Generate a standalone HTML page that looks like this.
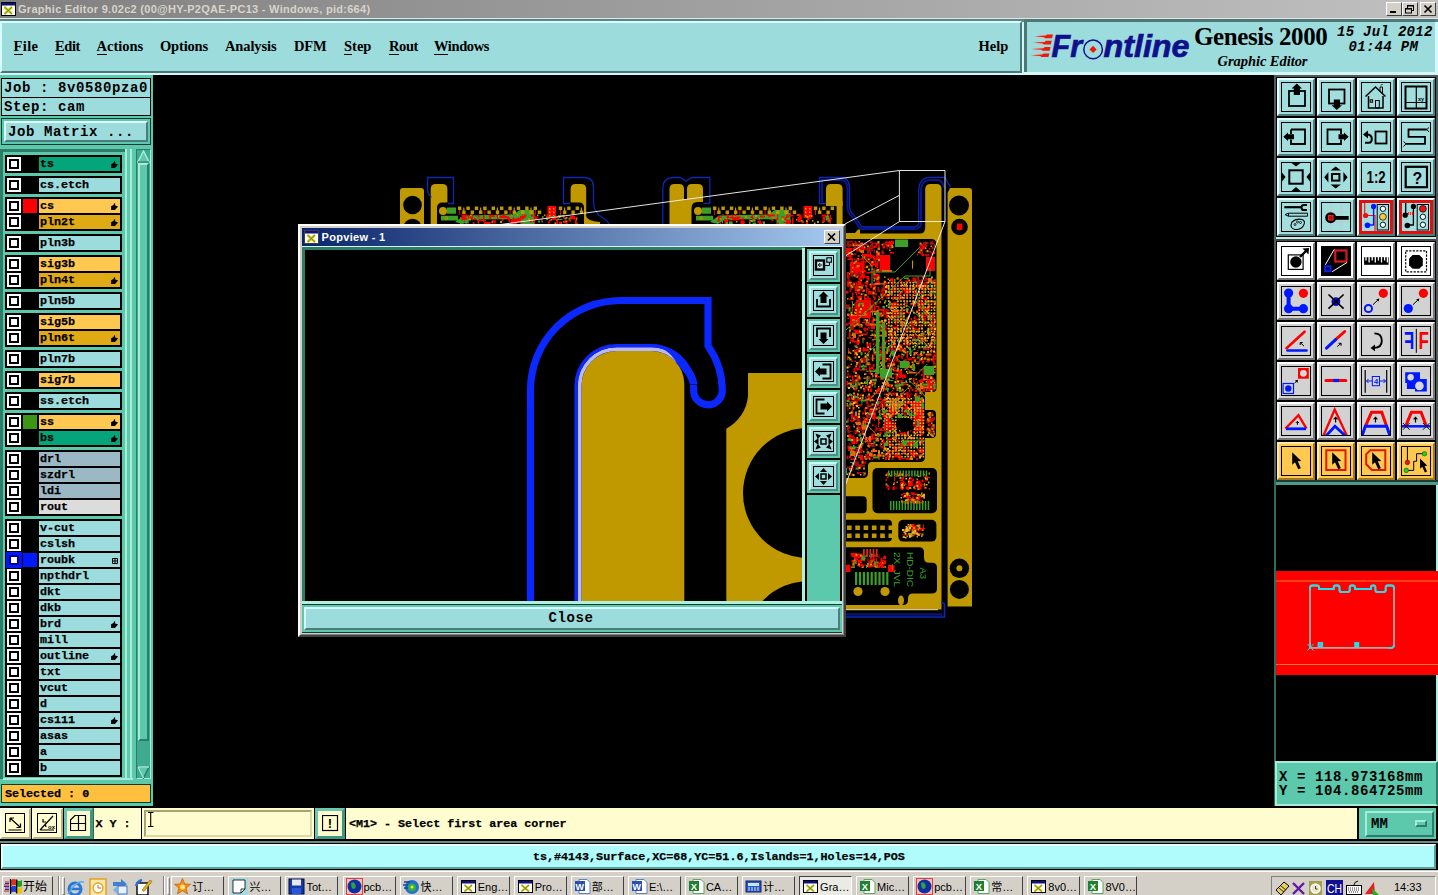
<!DOCTYPE html>
<html lang="en"><head><meta charset="utf-8"><title>Graphic Editor 9.02c2</title>
<style>
*{box-sizing:border-box}
html,body{margin:0;padding:0}
body{width:1438px;height:895px;position:relative;overflow:hidden;background:#000;font-family:"Liberation Mono",monospace;color:#000}
.a{position:absolute}
.m7{-webkit-text-stroke:.25px #000;font:bold 11.7px "Liberation Mono",monospace;white-space:pre;line-height:14px}
.m9{font:bold 14px "Liberation Mono",monospace;letter-spacing:.6px;white-space:pre}
.menu span{position:absolute;top:38px;font:bold 14.5px "Liberation Serif",serif;line-height:17px;white-space:pre}
.menu u{text-decoration:none;border-bottom:1px solid #000;}
.grp{position:absolute;left:5px;width:117px;background:#000}
.row{position:absolute;left:0;width:117px;height:16px}
.cb{position:absolute;left:2px;top:2px;width:14px;height:14px;background:#fff}
.cb i{position:absolute;left:2px;top:2px;width:10px;height:10px;border:2px solid #000;background:#fff}
.sw{position:absolute;left:18px;top:2px;width:14px;height:14px}
.lb{-webkit-text-stroke:.25px #000;position:absolute;left:34px;top:2px;width:81px;height:14px;padding-left:1px;font:bold 11.7px "Liberation Mono",monospace;line-height:15.5px;white-space:pre;overflow:hidden}
.hd{position:absolute;right:1px;top:4px;width:8px;height:8px}
.tb{position:absolute;width:38px;height:38px;border:2px solid;}
.tb b{position:absolute;left:2px;top:2px;width:30px;height:30px;border:1px solid #000;display:block}
.tb svg{position:absolute;left:3px;top:3px;width:28px;height:28px}
.tc{background:#a2dede;border-color:#e4ffff #4e7c7c #4e7c7c #e4ffff}
.tg{background:#d2d2d2;border-color:#fff #777 #777 #fff}
.tw{background:#fff;border-color:#fff #777 #777 #fff}
.to{background:#ffc850;border-color:#ffe8a8 #a07820 #a07820 #ffe8a8}
.tk{position:absolute;top:876px;height:21px;font:11px "Liberation Sans","Noto Sans CJK SC",sans-serif;line-height:21px;white-space:pre;color:#000;border:1px solid;border-color:#fff #404040 #404040 #fff;background:#d4d0c8;overflow:hidden}
</style></head>
<body>
<div class="a" style="left:0;top:0;width:1438px;height:18px;background:linear-gradient(90deg,#808080,#c0c0c0)"></div>
<svg class="a" style="left:1px;top:2px" width="15" height="14" viewBox="0 0 15 14"><rect x="0" y="0" width="15" height="14" fill="#fff"/><rect x="0.5" y="0.5" width="14" height="13" fill="#fff" stroke="#000"/><rect x="1" y="1" width="13" height="2.5" fill="#101080"/><path d="M3.5 5 L11 12 M11 5 L3.5 12" stroke="#c8c820" stroke-width="2.4"/><path d="M3.5 5 L11 12 M11 5 L3.5 12" stroke="#707000" stroke-width=".7"/></svg>
<div class="a" style="left:18px;top:2px;font:bold 11px 'Liberation Sans', 'Noto Sans CJK SC', sans-serif;line-height:14px;color:#d8d4cc;white-space:pre;letter-spacing:.28px">Graphic Editor 9.02c2 (00@HY-P2QAE-PC13 - Windows, pid:664)</div>
<div class="a" style="left:1386px;top:2px;width:16px;height:14px;background:#d4d0c8;border:1px solid;border-color:#fff #404040 #404040 #fff"></div>
<div class="a" style="left:1402px;top:2px;width:16px;height:14px;background:#d4d0c8;border:1px solid;border-color:#fff #404040 #404040 #fff"></div>
<div class="a" style="left:1420px;top:2px;width:16px;height:14px;background:#d4d0c8;border:1px solid;border-color:#fff #404040 #404040 #fff"></div>
<svg class="a" style="left:1386px;top:2px" width="50" height="14" viewBox="0 0 50 14"><rect x="4" y="9" width="6" height="2" fill="#000"/><rect x="21.5" y="3.5" width="6" height="5" fill="none" stroke="#000"/><rect x="21" y="3" width="7" height="1.5" fill="#000"/><rect x="19.5" y="6.5" width="6" height="4.500" fill="#d4d0c8" stroke="#000"/><rect x="19" y="6" width="7" height="1.5" fill="#000"/><path d="M38.500 3.500 L45.500 10.500 M45.500 3.500 L38.500 10.500" stroke="#000" stroke-width="1.700"/></svg>
<div class="a" style="left:0;top:18px;width:1438px;height:4px;background:#a8a8a8"></div>
<div class="a" style="left:0;top:18px;width:1438px;height:1px;background:#787878"></div>
<div class="a" style="left:0;top:18px;width:1438px;height:1px;background:#e4e4e4"></div>
<div class="a" style="left:0;top:19px;width:1438px;height:56px;background:#d4f8f8"></div>
<div class="a" style="left:0;top:19px;width:1438px;height:3px;background:#5a8888"></div>
<div class="a" style="left:0;top:21px;width:1022px;height:52px;background:#9cdcdc;border:2px solid;border-color:#d8ffff #4c7878 #4c7878 #d8ffff"></div>
<div class="a" style="left:1024px;top:19px;width:411px;height:53px;background:#9cdcdc;border-left:3px solid #4c7878;border-top:3px solid #4c7878"></div>
<div class="menu">
<span style="left:13.5px;letter-spacing:0.4px"><u>F</u>ile</span>
<span style="left:55px;letter-spacing:-0.4px"><u>E</u>dit</span>
<span style="left:96.5px;letter-spacing:0px"><u>A</u>ctions</span>
<span style="left:160px;letter-spacing:-0.17px">Options</span>
<span style="left:225px;letter-spacing:-0.11px">Analysis</span>
<span style="left:294px;letter-spacing:-0.2px">DFM</span>
<span style="left:344px;letter-spacing:0px"><u>S</u>tep</span>
<span style="left:389px;letter-spacing:-0.4px"><u>R</u>out</span>
<span style="left:434px;letter-spacing:-0.4px"><u>W</u>indows</span>
<span style="left:978.5px;letter-spacing:0px">Help</span>
</div>
<svg class="a" style="left:1028px;top:24px" width="168" height="44" viewBox="1028 24 168 44"><g fill="#f01808"><path d="M1038.3 36.4 H1048" stroke="#f8b0a8" stroke-width="3.400" opacity=".5"/><path d="M1034.3 36.3 L1046 35.6 L1047 34.5 L1053 34.5 L1052 38.199999999999996 L1045 38.199999999999996 L1044 37.199999999999996 Z"/><path d="M1037 42.7 H1046.8" stroke="#f8b0a8" stroke-width="3.400" opacity=".5"/><path d="M1033 42.6 L1044.8 41.900000000000006 L1045.8 40.800000000000004 L1051.8 40.800000000000004 L1050.8 44.5 L1043.8 44.5 L1042.8 43.5 Z"/><path d="M1035.3 49 H1045.6" stroke="#f8b0a8" stroke-width="3.400" opacity=".5"/><path d="M1031.3 48.9 L1043.6 48.2 L1044.6 47.1 L1050.6 47.1 L1049.6 50.8 L1042.6 50.8 L1041.6 49.8 Z"/><path d="M1034.7 55.3 H1044.4" stroke="#f8b0a8" stroke-width="3.400" opacity=".5"/><path d="M1030.7 55.199999999999996 L1042.4 54.5 L1043.4 53.4 L1049.4 53.4 L1048.4 57.099999999999994 L1041.4 57.099999999999994 L1040.4 56.099999999999994 Z"/></g><text x="1051.500" y="56.500" font-family="Liberation Sans, sans-serif" font-weight="bold" font-style="italic" font-size="30.500" fill="#10108c" stroke="#10108c" stroke-width=".7" textLength="30.500" lengthAdjust="spacingAndGlyphs">Fr</text><circle cx="1093.100" cy="49.400" r="9.300" fill="none" stroke="#10108c" stroke-width="1.500"/><path d="M1093.100 45.700 L1096.700 49.400 L1093.100 53.100 L1089.500 49.400 Z" fill="#f01808"/><text x="1103.500" y="56.500" font-family="Liberation Sans, sans-serif" font-weight="bold" font-style="italic" font-size="30.500" fill="#10108c" stroke="#10108c" stroke-width=".7" textLength="86" lengthAdjust="spacingAndGlyphs">ntline</text></svg>
<div class="a" style="left:1194px;top:22.500px;font:bold 25px 'Liberation Serif', serif;line-height:28px;letter-spacing:-.4px;white-space:pre">Genesis 2000</div>
<div class="a" style="left:1217.500px;top:52.500px;font:italic bold 14.500px 'Liberation Serif', serif;line-height:17px;letter-spacing:-.05px;white-space:pre">Graphic Editor</div>
<div class="a" style="left:1337px;top:25px;font:italic bold 14px 'Liberation Mono', monospace;line-height:15px;letter-spacing:.3px;white-space:pre">15 Jul 2012</div>
<div class="a" style="left:1348.500px;top:40px;font:italic bold 14px 'Liberation Mono', monospace;line-height:15px;letter-spacing:.3px;white-space:pre">01:44 PM</div>
<svg class="a" style="left:153px;top:75px" width="1121" height="731" viewBox="153 75 1121 731">
<path d="M400 230 V191 q0 -3 3 -3 H421 q3 0 3 3 V230 Z" fill="#c09800"/>
<circle cx="412.500" cy="205" r="9.300" fill="#000"/><circle cx="412.500" cy="228" r="9.300" fill="#000"/>
<path d="M430.7 230 V189 Q430.7 184 435.7 184 H442.4 Q447.4 184 447.4 189 V230 Z" fill="#c09800"/>
<path d="M447 230 V202 H437 V230 Z" fill="#c09800"/>
<path d="M570.6 230 V189 Q570.6 184 575.6 184 H581.2 Q586.2 184 586.2 189 V230 Z" fill="#c09800"/>
<path d="M586 216 Q587 221 600 222 V230 H586 Z" fill="#c09800"/>
<path d="M437 230 V208 q0 -5.500 5.500 -5.500 H579 q5 0 5 5 V230 Z" fill="#000"/>
<path d="M669.5 230 V189 Q669.5 184 674.5 184 H679 Q684 184 684 189 V230 Z" fill="#c09800"/>
<path d="M687 230 V189 Q687 184 692 184 H698 Q703 184 703 189 V230 Z" fill="#c09800"/>
<rect x="684" y="200" width="8" height="30" fill="#c09800"/>
<path d="M691.500 230 V208 q0 -6 6 -6 H838 V230 Z" fill="#000"/>
<path d="M826 206 V189 Q826 184 831 184 H837.6 Q842.6 184 842.6 189 V206 Z" fill="#c09800"/>
<path d="M829 201 h13.600 V240 h-6 V207 q0 -4 -7.600 -6 Z" fill="#c09800"/>
<circle cx="443" cy="211" r="4" fill="#c09800"/>
<path d="M447 207.400h9v6.300h-9zM441 215.800h17v4.800h-17zM455 222 L464 215.500 L513 214.500 L520 210 L534 210 L534 213.500 L524 219 L470 219.500 L463 224 ZM520.5 213h14v11h-14z" fill="#3ca028"/>
<path d="M445 217h2.400v2.400h-2.400z" fill="none" stroke="#c09800" stroke-width=".8"/>
<rect x="547.5" y="206" width="8.600" height="12" fill="#ff0000"/>
<path fill="#c09800" d="M458 206.5h3.4v3.4h-3.4zM462.2 210.5h3.4v3.4h-3.4zM463.2 207.5h1.2v4h-1.2zM466.4 206.5h3.4v3.4h-3.4zM470.6 210.5h3.4v3.4h-3.4zM474.8 206.5h3.4v3.4h-3.4zM479 210.5h3.4v3.4h-3.4zM480 207.5h1.2v4h-1.2zM483.2 206.5h3.4v3.4h-3.4zM487.4 210.5h3.4v3.4h-3.4zM491.6 206.5h3.4v3.4h-3.4zM495.8 210.5h3.4v3.4h-3.4zM496.8 207.5h1.2v4h-1.2zM500 206.5h3.4v3.4h-3.4zM504.2 210.5h3.4v3.4h-3.4zM508.4 206.5h3.4v3.4h-3.4zM512.6 210.5h3.4v3.4h-3.4zM513.6 207.5h1.2v4h-1.2zM516.8 206.5h3.4v3.4h-3.4zM521 210.5h3.4v3.4h-3.4zM525.2 206.5h3.4v3.4h-3.4zM529.4 210.5h3.4v3.4h-3.4zM530.4 207.5h1.2v4h-1.2zM533.6 206.5h3.4v3.4h-3.4zM537.8 210.5h3.4v3.4h-3.4zM558.8 206.5h3.4v3.4h-3.4zM563 210.5h3.4v3.4h-3.4zM564 207.5h1.2v4h-1.2zM567.2 206.5h3.4v3.4h-3.4zM571.4 210.5h3.4v3.4h-3.4zM575.6 206.5h3.4v3.4h-3.4zM579.8 210.5h3.4v3.4h-3.4zM580.8 207.5h1.2v4h-1.2zM497.5 215.5h1.5v1.5h-1.5zM560 222h2v2h-2zM565 220.5h2v2h-2zM554.5 222.5h2v1.5h-2zM566 217h1.5v1.5h-1.5zM566 220.5h1.5v1.5h-1.5zM550.5 219h1.5v1.5h-1.5zM500 221h2v2h-2zM575.5 222.5h2v1.5h-2zM510 214.5h2v2h-2zM528 218.5h2v2h-2zM470 214.5h2v2h-2zM557.5 218.5h1.5v1.5h-1.5zM517 214h1.5v1.5h-1.5zM537 214.5h1.5v1.5h-1.5zM558.5 216h2v2h-2zM500 216.5h2v2h-2zM563 221h1.5v1.5h-1.5zM544 214.5h1.5v1.5h-1.5zM469 218.5h2v2h-2zM518.5 219.5h2v2h-2zM564.5 217.5h2v2h-2z"/><path fill="#ff0000" d="M459.2 209.9h1v5h-1zM471.8 213.9h1v5h-1zM484.4 209.9h1v5h-1zM497 213.9h1v5h-1zM509.6 209.9h1v5h-1zM522.2 213.9h1v5h-1zM534.8 209.9h1v5h-1zM560 209.9h1v5h-1zM572.6 213.9h1v5h-1zM502.5 214.5h2.5v2.5h-2.5zM468 215h1v3.5h-1zM533.5 219h3.2v1h-3.2zM465.5 221.5h1.5v2h-1.5zM525.5 220h3.8v1h-3.8zM524 214.5h2.5v2h-2.5zM514 222h2v2h-2zM469.5 216.5h2.5v2h-2.5zM531 214.5h2v2h-2zM541 219h1.5v2h-1.5zM515 219.5h5.6v2h-5.6zM556 216.5h3.1v1.5h-3.1zM501.5 219h2v2h-2zM507 216.5h2v2.5h-2zM575 220h1.5v2h-1.5zM477.5 219.5h1.5v3.7h-1.5zM460.5 217.5h6.8v2h-6.8zM506.5 217.5h2v1.5h-2zM574.5 217.5h3.4v2h-3.4zM477.5 215h2v2.5h-2zM477.5 216h1.5v1.5h-1.5zM559 222.5h1.5v1.5h-1.5zM472 217h1v3.6h-1zM484 222h6.7v2h-6.7zM494.5 219.5h1v4.5h-1zM501.5 216h5.5v2h-5.5zM546 216h1.5v1.5h-1.5zM552 218h4.4v2h-4.4zM575 222h2v2h-2zM483 215.5h1.5v6.4h-1.5zM510.5 219.5h4.8v4.2h-4.8zM546.5 214.5h3.1v4.5h-3.1zM514 219.5h4.9v1.5h-4.9zM478 218.5h1v5.5h-1zM521.5 222h1v2h-1zM463.5 216h2v4.3h-2zM556.5 221.5h1.5v2.5h-1.5zM515 220h2.5v1.5h-2.5zM563 214.5h1.5v2.5h-1.5zM512.5 218.5h4.7v5.2h-4.7zM570 216h5.1v3.3h-5.1zM474 218h1.5v2h-1.5zM489.5 215h1.5v3.4h-1.5zM479 219.5h7v1.5h-7zM499.5 215.5h2v3.1h-2zM513.5 220h4.2v1h-4.2zM473 222h1.5v2h-1.5zM464.5 220.5h2.5v2h-2.5zM507.5 218.5h2v1.5h-2zM492.5 221h1v3h-1zM534 221h1v3h-1zM513 217h1v4.1h-1zM568.5 219.5h2.5v2h-2.5zM520 216h5.6v2h-5.6zM517.5 221h5.8v1h-5.8zM530 220h2v2.5h-2zM460.5 217h3.8v3.1h-3.8zM563 216h1.5v2.5h-1.5zM492.5 219.5h1v3.4h-1zM477 219h2v1.5h-2zM549 220h2v1.5h-2zM556 220h2v1.5h-2zM517.5 217.5h6.1v2h-6.1zM533.5 215.5h2v2h-2zM461.5 214.5h5.8v2h-5.8zM517 220h1.5v2h-1.5zM496.5 214.5h1.5v2.5h-1.5zM460.5 218h2v2.5h-2zM489.5 214.5h1.5v3.3h-1.5zM548 221.5h2v2h-2zM489 216.5h2v2.5h-2zM535 216.5h1.5v3.5h-1.5zM508.5 216.5h1.5v5.6h-1.5zM536.5 216.5h2v2h-2zM565.5 222.5h2v1.5h-2zM470.5 217h2v2h-2zM563.5 220.5h2v2.5h-2zM491.5 220.5h4.4v2h-4.4zM559 221.5h2.5v2.5h-2.5zM489 215h5.7v2h-5.7zM533 218.5h1.5v3.4h-1.5z"/><path fill="#e8b830" d="M549 208h1.4v1.4h-1.4zM549 211.5h1.4v1.4h-1.4zM549 215h1.4v1.4h-1.4zM553 208h1.4v1.4h-1.4zM553 211.5h1.4v1.4h-1.4zM553 215h1.4v1.4h-1.4z"/><path fill="#3ca028" d="M568.5 217.5h2v2h-2zM546 217.5h2v2.5h-2zM509 215h2.5v2.5h-2.5zM525.5 220.5h2v2h-2zM538 220.5h2v2h-2zM465 220h3.7v3.5h-3.7zM491.5 221h1.5v2h-1.5zM556.5 219h5.8v1h-5.8zM576 217.5h1v3.3h-1zM476.5 218.5h2v1.5h-2zM542 216h1.5v2h-1.5zM558 215h6.6v1.5h-6.6zM460 217.5h1.5v6.4h-1.5zM541.5 221h1.5v1.5h-1.5zM551 216h4.2v1h-4.2z"/>
<circle cx="698" cy="211" r="4" fill="#c09800"/>
<path d="M702 207.400h9v6.300h-9zM696 215.800h17v4.800h-17zM710 222 L719 215.500 L768 214.500 L775 210 L789 210 L789 213.500 L779 219 L725 219.500 L718 224 ZM776.5 213h14v11h-14z" fill="#3ca028"/>
<path d="M700 217h2.400v2.400h-2.400z" fill="none" stroke="#c09800" stroke-width=".8"/>
<rect x="803.5" y="206" width="8.600" height="12" fill="#ff0000"/>
<path fill="#c09800" d="M713 206.5h3.4v3.4h-3.4zM717.2 210.5h3.4v3.4h-3.4zM718.2 207.5h1.2v4h-1.2zM721.4 206.5h3.4v3.4h-3.4zM725.6 210.5h3.4v3.4h-3.4zM729.8 206.5h3.4v3.4h-3.4zM734 210.5h3.4v3.4h-3.4zM735 207.5h1.2v4h-1.2zM738.2 206.5h3.4v3.4h-3.4zM742.4 210.5h3.4v3.4h-3.4zM746.6 206.5h3.4v3.4h-3.4zM750.8 210.5h3.4v3.4h-3.4zM751.8 207.5h1.2v4h-1.2zM755 206.5h3.4v3.4h-3.4zM759.2 210.5h3.4v3.4h-3.4zM763.4 206.5h3.4v3.4h-3.4zM767.6 210.5h3.4v3.4h-3.4zM768.6 207.5h1.2v4h-1.2zM771.8 206.5h3.4v3.4h-3.4zM776 210.5h3.4v3.4h-3.4zM780.2 206.5h3.4v3.4h-3.4zM784.4 210.5h3.4v3.4h-3.4zM785.4 207.5h1.2v4h-1.2zM788.6 206.5h3.4v3.4h-3.4zM792.8 210.5h3.4v3.4h-3.4zM813.8 206.5h3.4v3.4h-3.4zM818 210.5h3.4v3.4h-3.4zM819 207.5h1.2v4h-1.2zM822.2 206.5h3.4v3.4h-3.4zM826.4 210.5h3.4v3.4h-3.4zM830.6 206.5h3.4v3.4h-3.4zM717.5 218h2v2h-2zM772.5 215.5h2v2h-2zM741 217.5h1.5v1.5h-1.5zM751 220h2v2h-2zM718.5 217.5h1.5v1.5h-1.5zM758.5 218h1.5v1.5h-1.5zM810.5 215h2v2h-2zM806 222h2v2h-2zM736 221h1.5v1.5h-1.5zM726 218h1.5v1.5h-1.5zM802 220.5h1.5v1.5h-1.5zM817 221h2v2h-2zM807.5 218.5h1.5v1.5h-1.5zM724.5 220h1.5v1.5h-1.5zM802 221.5h1.5v1.5h-1.5zM814 222.5h1.5v1.5h-1.5zM806.5 216h2v2h-2zM781.5 217h1.5v1.5h-1.5zM822 221.5h1.5v1.5h-1.5zM826.5 214.5h2v2h-2zM773.5 214.5h2v2h-2zM797.5 214h2v2h-2zM788.5 220h2v2h-2zM745 216h2v2h-2zM812 220h1.5v1.5h-1.5zM770 215h2v2h-2zM755 215h2v2h-2zM806 220h2v2h-2zM782 218.5h2v2h-2zM734.5 217.5h1.5v1.5h-1.5zM753.5 219.5h2v2h-2zM750 220h1.5v1.5h-1.5zM719 217.5h2v2h-2zM796 219h1.5v1.5h-1.5z"/><path fill="#ff0000" d="M714.2 209.9h1v5h-1zM726.8 213.9h1v5h-1zM739.4 209.9h1v5h-1zM752 213.9h1v5h-1zM764.6 209.9h1v5h-1zM777.2 213.9h1v5h-1zM789.8 209.9h1v5h-1zM815 209.9h1v5h-1zM827.6 213.9h1v5h-1zM775.5 219h1.5v1.5h-1.5zM777 222.5h2v1.5h-2zM776 218.5h2v1.5h-2zM741.5 217.5h2v2.5h-2zM757 217.5h1.5v2h-1.5zM740.5 220.5h4.2v3.5h-4.2zM821.5 214.5h4.7v2h-4.7zM822.5 217h1v6h-1zM734.5 214h1.5v2h-1.5zM759 220.5h2v3.4h-2zM801.5 221.5h1.5v2h-1.5zM785 217h1.5v2h-1.5zM760 215.5h4.9v2h-4.9zM749 219h1v3.8h-1zM736.5 216h1v3.8h-1zM760.5 222.5h1.5v1.5h-1.5zM829.5 215h1.5v6.4h-1.5zM719.5 216.5h2v1.5h-2zM758 221.5h1.5v1.5h-1.5zM788.5 220h2v2h-2zM720 222.5h1v1.5h-1zM809.5 217.5h3.3v1h-3.3zM807 218.5h2.5v2h-2.5zM789 215h4.6v1.5h-4.6zM792 217.5h1.5v6.5h-1.5zM799 215.5h1v4.7h-1zM762 221.5h1.5v1.5h-1.5zM732 216.5h1.5v3.4h-1.5zM827.5 218h2v4.6h-2zM786.5 221h1.5v3h-1.5zM786 215.5h3.2v2h-3.2zM733 217h5v3.5h-5zM728.5 219h4.2v1.5h-4.2zM750.5 216h2.5v2h-2.5zM717.5 219.5h2.5v2h-2.5zM808.5 217.5h2v1.5h-2zM730 221.5h2v2.5h-2zM806 222h2v2h-2zM739 216h1.5v2h-1.5zM826.5 218h5.5v1.5h-5.5zM829.5 219.5h1.5v4.1h-1.5zM786 222h4.2v2h-4.2zM732.5 219h6.6v1h-6.6zM771.5 219h2v2h-2zM727.5 217h5.4v1h-5.4zM757.5 221h2v2h-2zM767 214.5h4.1v1.5h-4.1zM784.5 218.5h1.5v1.5h-1.5zM722 214h1.5v1.5h-1.5zM786 219.5h2.5v2h-2.5zM724.5 219.5h3.7v4.5h-3.7zM737 217.5h2.5v2.5h-2.5zM781 216.5h3.3v1h-3.3zM731.5 214h1v4.4h-1zM796 214.5h3.2v1h-3.2zM800 214.5h1.5v2.5h-1.5zM727.5 215.5h1.5v2h-1.5zM752 217.5h2v1.5h-2zM797.5 217h4.3v5.1h-4.3zM786.5 214.5h1.5v2h-1.5zM769 214.5h6.3v2h-6.3zM809.5 215.5h1.5v1.5h-1.5zM783.5 222h3.6v1h-3.6zM823.5 216h1.5v6.1h-1.5zM718 216h1.5v5h-1.5zM827.5 220h2v2h-2zM737.5 215.5h2v2.5h-2zM768.5 215h2v2.5h-2z"/><path fill="#e8b830" d="M805 208h1.4v1.4h-1.4zM805 211.5h1.4v1.4h-1.4zM805 215h1.4v1.4h-1.4zM809 208h1.4v1.4h-1.4zM809 211.5h1.4v1.4h-1.4zM809 215h1.4v1.4h-1.4z"/><path fill="#3ca028" d="M722 217.5h1v5.9h-1zM769.5 217h2v2.5h-2zM801 220h1.5v1.5h-1.5zM752.5 222.5h3.7v1.5h-3.7zM730.5 218h1.5v2h-1.5zM763 221.5h2v2.5h-2zM778.5 219.5h2v2h-2zM752.5 219h2v2.5h-2zM736 215.5h6.6v1h-6.6zM729 221.5h3.7v2.5h-3.7zM749 222h1.5v2h-1.5zM726 222h2v2h-2zM828.5 219.5h1.5v2h-1.5zM825.5 216h3.4v4.6h-3.4zM746.5 215h2.5v2.5h-2.5z"/>
<path d="M431.500 197 Q428 195 427.500 190 V177.500 H453.500 V203.500 H448" fill="none" stroke="#0c28b4" stroke-width="1.3"/>
<path d="M570 203.500 H563.500 V177.500 H585 Q593.500 178 593.500 187 V203 Q594 213 603 218 Q608 221 610 226" fill="none" stroke="#0c28b4" stroke-width="1.3"/>
<path d="M668 230 V230 M662.800 230 V188 Q663 178 673 177.500 H680 L686 181 L692 177.500 H709.800 V203.300 H703.500" fill="none" stroke="#0c28b4" stroke-width="1.3"/>
<path d="M826 203.500 H819.500 V177.500 H841 Q849 178 849.500 187 V207 Q850 212 853.500 214.500 L862 227 H914 Q918.500 227 918.700 222 V190 Q919 178 930 177.300 H945" fill="none" stroke="#0c28b4" stroke-width="1.3"/>
<path d="M822 202 V180 H840 Q847 180 847.500 188 V208 Q848 214 851.500 216 L860.500 229 H914 Q921 229 921 222 V190 Q921.500 180 930 180 H937 Q943 180 944 188" fill="none" stroke="#08188c" stroke-width="2"/>
<path d="M845 233 H855 L858 229.500 H860 V233.500 Q860 233.500 920 233.500 Q925 233.500 925.200 228 V189 Q925.500 184 930.500 184 H936.500 Q941.500 184 941.500 189 V609.500 H845 Z" fill="#c09800"/>
<path d="M947.600 606.500 V193 L950 188 H969 q3 0 3 3 V606.500 Z" fill="#c09800"/>
<circle cx="959" cy="205.500" r="10" fill="#000"/><circle cx="959.500" cy="227" r="8.300" fill="#000"/><rect x="957" y="223.500" width="5.400" height="6.500" fill="#ff0000"/>
<circle cx="959.400" cy="568.300" r="9.700" fill="#000"/><circle cx="959.400" cy="568.300" r="3" fill="#c09800"/><circle cx="959.400" cy="589.400" r="9.500" fill="#000"/>
<path d="M845 239 H931 q5.500 0 5.500 5.500 V388 q0 4 -4 4 H925 V410 H932 q4 0 4 4 V434 q0 4 -4 4 H925 V457 q0 5 -5 5 H872 q-4 0 -4 4 V473 q0 5 -5 5 H845 Z" fill="#000"/>
<rect x="872.5" y="468" width="64.5" height="45.2" rx="5" fill="#000"/>
<rect x="840" y="496.2" width="26.7" height="17" rx="4" fill="#000"/>
<rect x="840" y="519.7" width="52" height="21.9" rx="4" fill="#000"/>
<rect x="898.3" y="519.7" width="38.1" height="21.9" rx="5" fill="#000"/>
<path d="M845 547.300 H919 q5 0 5 5 V557.700 q0 5 5 5 H932 q5 0 5 5 V588.500 q0 5 -5 5 H913 q-5 0 -5 5 V600 q0 5 -5 5 H845 Z" fill="#000"/>
<path fill="#ff0000" d="M868 278h1.5v2.5h-1.5zM861 276.5h6.7v1h-6.7zM875 260h1v6.6h-1zM847 272h2v6.8h-2zM857.5 289.5h2.5v1.5h-2.5zM857.5 244.5h1.5v1.5h-1.5zM878.5 296h1.5v2h-1.5zM861 273.5h3.9v4.6h-3.9zM872.5 288h2v2.5h-2zM857.5 290h2v2.5h-2zM854 258.5h1.5v2h-1.5zM851 258.5h2v2h-2zM867.5 255.5h2v2h-2zM871 261h1v6.2h-1zM862 253.5h1v5.7h-1zM864 256h2.5v1.5h-2.5zM861.5 284.5h2.5v2h-2.5zM857 290.5h2v2h-2zM859 270h6.9v2h-6.9zM862 248h3.5v2h-3.5zM849 298.5h4.6v1.5h-4.6zM847.5 258.5h2.5v1.5h-2.5zM868.5 291.5h2.5v2h-2.5zM849.5 251.5h2v6.7h-2zM846.5 291h2v2h-2zM852 243h5.3v1h-5.3zM864.5 294h2.5v2h-2.5zM861.5 264.5h3.8v1h-3.8zM866.5 265.5h6.9v1h-6.9zM853 248h2v2.5h-2zM870 252h1v5.9h-1zM875.5 244h1.5v2.5h-1.5zM856 283h1v4.9h-1zM874.5 282.5h2v2.5h-2zM877.5 255h2v2.5h-2zM855 241h1.5v2h-1.5zM856 244.5h6.7v2h-6.7zM870.5 286.5h2v1.5h-2zM861.5 275h2v2h-2zM858 273.5h3.6v1h-3.6zM854.5 286h4.9v5h-4.9zM877.5 255.5h2v2.5h-2zM858.5 262.5h2v1.5h-2zM848.5 276.5h1v6.1h-1zM876 263h2v2h-2zM854.5 264.5h2v2h-2zM872 256h2.5v1.5h-2.5zM861.5 257.5h2v2.5h-2zM860 293.5h3.6v1h-3.6zM863 254h6.3v2h-6.3zM870 285h2v2h-2zM859.5 285h4v2h-4zM873 262h1.5v2h-1.5zM864 296h1.5v4h-1.5zM857.5 246.5h2.5v2.5h-2.5zM865 285h2v2h-2zM876.5 263.5h1.5v5.1h-1.5zM877.5 244h2v2.5h-2zM858 271.5h1.5v2h-1.5zM854 271h3.7v3.8h-3.7zM861 271.5h2v2h-2zM876 274h1.5v6h-1.5zM858 292.5h2v1.5h-2zM855 291.5h1.5v2h-1.5zM864 276h5.1v1.5h-5.1zM859.5 279.5h2v1.5h-2zM859.5 247h3.5v1.5h-3.5zM877.5 274h2v6.5h-2zM873.5 269.5h2v2h-2zM860 262.5h2v4.3h-2zM873 296h1.5v1.5h-1.5zM863 246.5h2v2h-2zM877.5 269h2.5v1.5h-2.5zM868.5 284h2v1.5h-2zM873 270.5h2v5.8h-2zM875 265h2v2h-2zM857.5 267h2.5v1.5h-2.5zM860.5 276.5h2v2h-2zM846 291h2v2.5h-2zM856 291.5h1v4h-1zM851.5 263h1.5v4.6h-1.5zM849.5 271.5h1.5v1.5h-1.5zM857 266h2v2h-2zM869 246.5h1.5v3.5h-1.5zM861 286.5h2v2.5h-2zM858 296h4.3v3.6h-4.3zM856 263.5h2v2h-2zM852 292.5h1.5v6.2h-1.5zM852.5 282.5h2.5v2h-2.5zM857.5 289.5h5.5v1h-5.5zM876.5 251h1.5v5.8h-1.5zM847 281.5h4v5.3h-4zM849 258h3.9v2h-3.9zM847.5 243.5h2v2h-2zM858.5 243.5h3.7v1h-3.7zM864.5 282h2v1.5h-2zM865.5 243.5h2v2h-2zM878.5 276.5h1.5v1.5h-1.5zM851.5 286h1.5v2h-1.5zM857.5 264.5h2v2.5h-2zM868 254.5h4.8v2h-4.8zM849.5 257.5h1.5v2h-1.5zM856 247.5h3.4v4.1h-3.4zM873.5 258h6.4v2h-6.4zM858.5 278h2v2h-2zM873 255.5h2.5v1.5h-2.5zM850.5 254h4.6v1h-4.6zM873.5 268.5h1.5v2.5h-1.5zM850.5 245h6.6v1h-6.6zM857.5 255h2v2h-2zM853.5 274h5.4v1h-5.4zM877.5 252h2v1.5h-2zM859 243.5h6.8v1.5h-6.8zM855.5 281.5h1v5.5h-1zM872 283.5h2v2h-2zM862.5 271h2v1.5h-2zM857.5 281h4.1v5h-4.1zM862 245h2v2.5h-2zM873 275h4.9v3.7h-4.9zM872 243h1.5v5.7h-1.5zM857.5 271.5h1.5v2h-1.5zM851.5 262h4.6v1.5h-4.6zM856 260.5h2v2.5h-2zM855 270h5.1v1h-5.1zM866.5 277.5h2v2h-2zM857.5 272.5h2v2h-2zM860.5 273.5h1.5v2h-1.5zM865 298h1v2h-1zM873.5 259.5h1v5.2h-1zM866.5 254.5h2.5v2h-2.5zM877.5 275.5h1.5v6.5h-1.5zM869.5 241.5h3.1v1.5h-3.1zM876 253h1.5v5.6h-1.5zM866 287h1v6.2h-1zM866.5 260h4v1.5h-4zM874.5 242.5h4.3v1.5h-4.3zM866 282.5h2v2h-2zM850.5 285h2v4.7h-2zM868 291h4.4v3.6h-4.4zM866 288h2v2.5h-2zM876.5 262h2v1.5h-2zM857.5 282h1.5v3.9h-1.5zM875.5 263.5h2v3.1h-2zM856.5 265.5h2v5h-2zM872.5 257h2v2h-2zM873.5 283.5h1.5v4.8h-1.5zM874 298h1.5v2h-1.5zM874.5 297.5h1.5v1.5h-1.5zM877.5 271h2v1.5h-2zM870 256.5h1.5v1.5h-1.5zM865 298h6v1.5h-6zM866.5 272h4.1v1.5h-4.1zM869 262.5h5.1v1.5h-5.1zM860.5 246h4.7v4.1h-4.7zM858 271h2v2.5h-2zM854 273h2v2h-2zM869.5 257h2.5v1.5h-2.5zM863 269.5h2v2h-2zM876 282.5h2v2.5h-2zM860 276h2v2h-2zM874 245.5h2.5v2.5h-2.5zM876.5 281.5h3.4v3.2h-3.4zM870 264h5.2v1.5h-5.2zM871 248h1.5v1.5h-1.5zM862 290h2v2h-2zM872.5 291h1.5v2h-1.5zM878 257h2v2h-2zM864 270.5h2v2h-2zM889 241h5v3.1h-5zM882.5 246h2.5v2.5h-2.5zM890.5 242.5h1.5v6.3h-1.5zM882 251.5h1.5v2h-1.5zM890 252h4v1.5h-4zM888.5 243h3.2v1.5h-3.2zM885 241.5h3.9v2h-3.9zM888.5 243.5h2v2.5h-2zM881.5 250.5h2v3.5h-2zM886.5 244.5h1v5h-1zM882.5 244h6v1h-6zM882.5 243h2v2.5h-2zM886 245h2v1.5h-2zM887 245h3.7v1h-3.7zM888.5 242h5.5v1.5h-5.5zM921.5 248.5h1.5v2h-1.5zM929 248h1.5v1.5h-1.5zM919.5 244.5h1.5v2h-1.5zM930.5 242h2v2h-2zM919.5 248h1v6.1h-1zM920.5 244h5.5v5h-5.5zM932 247h1.5v1.5h-1.5zM926 242h1.5v2h-1.5zM922.5 254.5h2v1.5h-2zM921.5 254h2.5v2h-2.5zM919.5 248h2v2.5h-2zM919 251h2v2.5h-2zM921.5 245h5.7v2h-5.7zM931.5 253h2v2h-2zM929 251h2v1.5h-2zM932.5 253h2.5v1h-2.5zM925 254h2v2h-2zM919.5 251h1.5v2h-1.5zM933 251.5h2v1.5h-2zM902 287h1v5.8h-1zM881.5 287.5h3.5v4.1h-3.5zM932.5 288h3.5v1.5h-3.5zM924 297.5h3.2v2.5h-3.2zM890.5 290h2v1.5h-2zM883.5 280.5h2v5.9h-2zM934 283h2v2.5h-2zM906 294.5h2v2.5h-2zM891.5 281.5h2v5.8h-2zM928.5 288h2.5v2.5h-2.5zM922 296.5h2v2.5h-2zM912.5 277.5h3.6v4h-3.6zM893 296.5h2.5v1.5h-2.5zM881 293h4.8v3.5h-4.8zM910.5 280.5h6.3v1h-6.3zM886.5 290.5h1.5v1.5h-1.5zM910 284h1v6.4h-1zM885 282h2.5v2h-2.5zM922 276h2v2.5h-2zM880 293.5h1.5v2h-1.5zM885.5 294.5h4.5v2h-4.5zM886.5 286.5h2v2.5h-2zM895.5 296.5h1.5v2h-1.5zM913.5 290h3.7v4h-3.7zM898.5 297.5h2v2.5h-2zM918 283h1.5v1.5h-1.5zM899.5 279h2v2.5h-2zM889.5 278.5h2v2.5h-2zM881.5 294.5h2v5.5h-2zM922.5 291h1.5v2h-1.5zM906 295h1.5v2h-1.5zM883.5 282.5h1.5v6.7h-1.5zM900 292.5h1.5v4h-1.5zM891.5 278h2v4.8h-2zM916 284h4.2v3.4h-4.2zM901 296h2v2h-2zM892.5 297.5h2v2.5h-2zM894 288.5h2v2h-2zM911.5 296h2v1.5h-2zM904 289.5h2v2h-2zM902.5 297.5h1v2.5h-1zM899 293h2v5.8h-2zM925.5 278h2v2h-2zM929 293.5h1.5v1.5h-1.5zM933 279.5h3v1.5h-3zM920.5 295.5h1.5v4.1h-1.5zM898.5 287h1v5.2h-1zM905.5 286h2v3.9h-2zM881.5 292.5h2.5v2h-2.5zM929 280.5h4v1h-4zM883.5 286.5h5.7v2h-5.7zM923.5 283h2v3.2h-2zM897 282.5h2v2h-2zM905 280.5h5.1v1.5h-5.1zM917.5 286.5h1.5v2.5h-1.5zM905 288.5h5.3v4.8h-5.3zM901 281h1.5v6h-1.5zM919 292.5h2.5v1.5h-2.5zM932.5 355.5h2v6.4h-2zM915.5 323h2v2h-2zM921 374h2v2h-2zM878 306h1v6.6h-1zM866 306.5h1.5v3.8h-1.5zM925.5 366.5h1v5.3h-1zM847 386.5h2v1.5h-2zM864 327.5h2v3.7h-2zM925.5 315h6.5v1h-6.5zM917 381.5h1v5.2h-1zM932.5 365.5h2v2h-2zM929.5 342.5h3.6v1h-3.6zM925.5 372.5h2.5v2.5h-2.5zM847.5 372.5h1v5.5h-1zM866 305h1v5.9h-1zM853.5 314.5h2v1.5h-2zM887 309.5h2v2h-2zM856.5 377.5h2.5v2h-2.5zM891.5 313.5h1.5v5.1h-1.5zM874 334h2v6.2h-2zM853.5 370.5h1.5v2.5h-1.5zM885 365.5h1v5.6h-1zM849 375.5h2v2h-2zM907.5 358.5h4.3v2h-4.3zM930 343h2v3.6h-2zM902.5 334h1.5v3.1h-1.5zM869 305.5h3.8v5.5h-3.8zM892 311h1.5v6.7h-1.5zM913.5 353.5h1v4.5h-1zM878 354.5h3.6v5.4h-3.6zM856 367.5h2v1.5h-2zM894 314.5h1.5v2h-1.5zM873.5 351.5h2.5v1.5h-2.5zM910.5 321.5h1.5v3h-1.5zM933.5 321.5h1.5v3.8h-1.5zM853.5 330h4.7v1.5h-4.7zM918.5 371.5h1.5v1.5h-1.5zM892 367.5h2v2h-2zM884.5 360h1v3h-1zM883 376.5h1.5v2h-1.5zM933.5 383.5h2.5v1h-2.5zM916 371.5h1v4h-1zM894 339h1.5v5.6h-1.5zM923.5 307.5h6.4v2h-6.4zM891 353h2v1.5h-2zM883 360h4.1v2h-4.1zM872 375h2v2h-2zM913 366.5h2.5v2h-2.5zM902 363h2v2.5h-2zM889 333.5h2v2h-2zM932 316.5h2v2h-2zM849 315.5h2v2h-2zM891 310h7v1.5h-7zM933.5 335.5h1v5.9h-1zM857 319.5h2v1.5h-2zM929 379.5h1v5.8h-1zM875 376.5h2v2h-2zM878 323.5h3.7v1.5h-3.7zM903 363h3.5v2h-3.5zM911 310h2v2h-2zM905.5 367h2v2.5h-2zM869.5 376.5h1v5.1h-1zM900.5 321h1v4.8h-1zM876 306h3.5v1h-3.5zM908 361h1v3.3h-1zM911 320.5h2v5.2h-2zM919.5 385h2v2h-2zM907.5 336h2v2.5h-2zM891 345.5h2v6h-2zM921 314h2v4.3h-2zM922.5 335h2v2h-2zM863.5 318.5h1v4.1h-1zM913 378h1.5v4.8h-1.5zM915 390h2.5v2h-2.5zM903.5 348.5h2.5v2.5h-2.5zM926 374.5h2v2.5h-2zM909 366h5.6v2h-5.6zM881 368.5h1.5v2.5h-1.5zM869 383.5h2v2h-2zM857 301.5h5.7v1.5h-5.7zM863 347h1.5v4.7h-1.5zM894 359.5h1.5v1.5h-1.5zM884 352h2v6.5h-2zM933.5 385.5h1v5.4h-1zM858 349.5h1.5v3.1h-1.5zM922.5 316h3.8v1.5h-3.8zM861.5 359h2v3.7h-2zM903.5 362h2.5v2.5h-2.5zM920 379.5h1.5v4.9h-1.5zM931 320.5h1.5v2.5h-1.5zM894.5 373.5h4.1v1.5h-4.1zM879 309h6.7v2h-6.7zM913 329h6.2v1h-6.2zM852.5 341h2.5v1.5h-2.5zM902 337.5h1v3h-1zM899.5 390h1.5v1.5h-1.5zM917 354h6.5v1.5h-6.5zM919 381h4.5v1.5h-4.5zM901.5 354.5h2v2.5h-2zM873 381.5h1.5v2h-1.5zM874.5 379.5h2v3.1h-2zM891.5 335h2v3.7h-2zM875 314h1.5v1.5h-1.5zM923 375h2v6.1h-2zM914 327.5h2.5v2h-2.5zM849 331h1.5v5.9h-1.5zM893 363.5h2v2.5h-2zM871 367h2v2h-2zM909 372h5v1h-5zM854 388.5h2.5v2h-2.5zM880.5 320.5h2.5v2.5h-2.5zM932.5 351h2v1.5h-2zM925.5 337h1v3.7h-1zM869.5 342.5h1.5v6.8h-1.5zM896.5 320h5.2v1.5h-5.2zM910.5 318h1.5v2h-1.5zM856.5 368h2v2.5h-2zM910.5 358.5h6.8v1h-6.8zM883 356.5h2.5v2h-2.5zM926.5 322h3.9v1h-3.9zM883.5 389h3.2v1.5h-3.2zM887.5 384.5h2v1.5h-2zM931.5 380.5h4.5v1h-4.5zM876 313.5h5.6v1.5h-5.6zM917.5 342h1.5v2h-1.5zM930 386.5h5.9v2h-5.9zM882.5 385.5h1.5v1.5h-1.5zM889.5 344.5h6.2v1h-6.2zM890.5 384.5h1.5v2.5h-1.5zM928 333h1v5.1h-1zM933.5 319.5h2v2h-2zM857 338h2v4.9h-2zM895 319h1.5v5.9h-1.5zM897 338h2.5v1.5h-2.5zM879 388h1.5v2.5h-1.5zM890 316h1.5v2h-1.5zM923.5 385h2v1.5h-2zM885.5 310.5h1.5v6.2h-1.5zM931.5 366h1.5v3.1h-1.5zM885.5 329h1v5.1h-1zM925.5 346.5h4.1v2h-4.1zM919 358.5h1v4.3h-1zM879.5 324.5h2v4.4h-2zM933 369.5h3v1h-3zM852 323.5h1.5v5.2h-1.5zM871 324.5h3.1v4.5h-3.1zM860.5 333.5h6.3v1h-6.3zM899.5 371h1.5v2h-1.5zM916.5 337h4.3v1h-4.3zM885.5 340.5h2v2h-2zM873 364h1.5v2h-1.5zM886 312.5h2v5.5h-2zM863.5 387.5h2v4.5h-2zM928.5 304.5h2v2.5h-2zM893 369.5h6.6v2h-6.6zM896.5 329h1.5v2.5h-1.5zM919 307h2v2.5h-2zM927.5 360.5h2v2h-2zM876 336.5h2.5v2h-2.5zM911.5 389h2v2h-2zM926.5 330h1.5v1.5h-1.5zM887 389h1.5v1.5h-1.5zM877 313h5v4.1h-5zM895.5 377h2v3.1h-2zM909 389h1v3h-1zM928.5 358h1.5v2.5h-1.5zM886 383h1.5v5.7h-1.5zM876.5 389h2.5v2h-2.5zM897.5 347h5.3v3.3h-5.3zM913 331h2v2h-2zM877.5 376h5.5v1.5h-5.5zM853.5 368h2v2.5h-2zM901 338h2v2.5h-2zM928.5 315.5h3.2v1.5h-3.2zM865.5 320.5h2v5.7h-2zM846 323.5h2.5v2h-2.5zM878 329.5h1.5v6h-1.5zM904.5 359h2v2.5h-2zM862.5 349h6.2v2h-6.2zM859.5 360h1v5.8h-1zM889.5 386h2.5v1.5h-2.5zM887.5 363h6.9v1h-6.9zM898.5 348h1.5v1.5h-1.5zM932 369h4v1h-4zM882.5 324.5h4.1v4.8h-4.1zM899.5 374.5h5.3v3.6h-5.3zM893.5 352.5h2v4.5h-2zM866 324h2v2h-2zM858 301h1.5v4.4h-1.5zM868 388h1.5v3.7h-1.5zM847 355.5h1v4.7h-1zM866 379.5h1.5v1.5h-1.5zM854.5 329.5h2v1.5h-2zM899 310.5h2v1.5h-2zM931 307h3.8v1h-3.8zM854.5 330.5h5.1v3.5h-5.1zM852 341h4.9v1.5h-4.9zM933.5 358h2.5v1.5h-2.5zM926.5 308.5h1.5v2h-1.5zM880 373.5h2v2h-2zM926 385h1.5v1.5h-1.5zM922 361.5h2v2h-2zM879.5 321h1.5v1.5h-1.5zM865 323h5.3v1.5h-5.3zM880 347h2v1.5h-2zM887 373.5h2v1.5h-2zM896 383h3.6v1.5h-3.6zM889 359.5h1.5v2h-1.5zM923.5 357.5h2v2h-2zM880 350h1.5v2h-1.5zM882.5 332.5h1.5v5.7h-1.5zM893.5 345h1.5v2h-1.5zM855 332.5h6.8v1h-6.8zM863.5 357.5h6v1h-6zM895.5 378.5h2v2h-2zM888.5 348.5h1.5v2h-1.5zM864 348h1.5v1.5h-1.5zM915 383.5h2v2h-2zM906.5 352.5h1.5v5.7h-1.5zM929.5 376h2v2h-2zM919 359h2v2h-2zM879.5 346.5h2v2h-2zM883 345.5h1.5v5.3h-1.5zM880.5 375.5h3.3v4.4h-3.3zM865 385.5h1.5v2.5h-1.5zM865.5 363.5h5.5v2h-5.5zM877.5 309h6.5v2h-6.5zM895.5 375.5h3v2h-3zM854 349.5h2v5.5h-2zM893 337.5h2v3.6h-2zM848 348h1v4.1h-1zM893 360.5h1.5v3.6h-1.5zM917.5 311.5h3.2v1h-3.2zM912.5 300.5h1.5v2.5h-1.5zM857.5 340h1v5h-1zM898.5 386.5h1.5v2h-1.5zM908 344h2v1.5h-2zM918.5 380h6.4v1h-6.4zM852 375.5h1.5v5.7h-1.5zM930.5 345h2v1.5h-2zM886 313.5h4.6v1h-4.6zM856 300.5h2v2h-2zM869.5 368h2v6.4h-2zM934 327.5h1.5v2h-1.5zM899 344.5h3.4v1.5h-3.4zM866.5 343h2v5.5h-2zM918.5 315.5h6.9v1h-6.9zM882.5 326h4.2v3.6h-4.2zM868 362h2v2h-2zM862 322h3.3v1h-3.3zM932 314.5h2v1.5h-2zM921 300h1v6h-1zM934 387h2v2h-2zM886.5 376.5h6v1.5h-6zM902.5 382.5h2v3.1h-2zM874 381.5h1v3.3h-1zM876.5 319h2.5v2h-2.5zM911 371h1.5v2h-1.5zM892.5 303h4.6v1h-4.6zM881 375h2v2.5h-2zM847.5 317.5h1.5v1.5h-1.5zM923.5 388.5h1.5v2.5h-1.5zM920.5 302.5h4.3v1.5h-4.3zM933 331.5h2v2.5h-2zM846.5 381h1.5v4.6h-1.5zM869 366.5h1.5v5.1h-1.5zM857.5 341.5h2.5v2h-2.5zM902.5 383.5h5.3v1.5h-5.3zM875.5 390h1.5v2h-1.5zM913.5 338h2.5v2h-2.5zM929 385.5h2v3.4h-2zM855 383.5h2v6.7h-2zM908.5 346.5h2v2h-2zM859.5 351h1.5v1.5h-1.5zM872.5 364.5h2v2h-2zM892.5 326.5h5.9v2h-5.9zM895 347.5h3v1h-3zM856.5 374.5h2v6.2h-2zM920 324.5h2.5v2h-2.5zM876.5 321h1.5v2h-1.5zM880 351.5h4.5v4.1h-4.5zM848.5 322.5h3.7v1.5h-3.7zM858 383h2v2h-2zM883 358h6.5v1.5h-6.5zM911.5 326.5h2v2h-2zM865.5 308.5h6.4v1.5h-6.4zM931 316.5h1.5v2h-1.5zM866.5 328h2v2.5h-2zM871.5 383.5h1.5v2h-1.5zM913 363.5h1.5v2h-1.5zM912.5 334h2v5.2h-2zM888.5 319.5h1.5v2h-1.5zM851.5 307h1.5v5.1h-1.5zM874.5 330.5h1.5v2h-1.5zM877.5 371.5h2v1.5h-2zM897 370h2v2h-2zM903 361.5h2v2h-2zM889.5 332.5h6.1v1h-6.1zM923 384h4.8v1h-4.8zM894 353h1v4.8h-1zM901 382.5h2v2.5h-2zM865.5 302.5h2v2.5h-2zM899 350h2.5v1.5h-2.5zM907 339.5h2v2h-2zM883 388h2v1.5h-2zM907 312h2.5v1.5h-2.5zM913.5 317.5h1.5v2h-1.5zM901.5 374.5h4.7v3.2h-4.7zM861 358h1.5v4.1h-1.5zM898.5 341h1.5v6.5h-1.5zM891 337h2.5v2h-2.5zM894.5 349h2.5v1.5h-2.5zM859 347.5h1.5v5.1h-1.5zM863.5 328.5h2v2h-2zM934.5 351.5h1.5v2h-1.5zM852.5 338h1.5v2h-1.5zM927.5 372h1.5v2h-1.5zM922 390h2.5v2h-2.5zM875 302h2v3.5h-2zM877 351.5h1.5v2h-1.5zM856.5 364h2v1.5h-2zM917.5 386.5h2v3.8h-2zM874 305.5h1.5v5.4h-1.5zM872.5 317h1.5v5.8h-1.5zM855.5 320h2.5v2h-2.5zM905 329.5h2.5v2.5h-2.5zM860.5 334h2v2h-2zM896 356h2v5.6h-2zM850 339.5h4.5v2h-4.5zM882.5 310.5h1.5v4.9h-1.5zM889.5 363.5h6v1.5h-6zM902.5 389h1.5v2.5h-1.5zM871.5 319.5h2v4.1h-2zM920 359h2.5v2h-2.5zM890.5 303h5.1v4.4h-5.1zM861 308.5h1v6.2h-1zM887.5 364.5h1v4.3h-1zM933 339.5h2.5v2.5h-2.5zM877.5 388h4.5v1.5h-4.5zM933.5 362h1.5v2.5h-1.5zM933.5 354.5h2.5v2.5h-2.5zM898.5 370h1v5.1h-1zM873.5 374.5h4.6v1h-4.6zM914 321.5h3.6v2h-3.6zM888.5 319.5h1.5v4.5h-1.5zM917 362.5h2v2h-2zM913.5 339h1v3.6h-1zM883.5 339.5h2v2h-2zM862 368.5h5.1v2h-5.1zM894.5 319h3.7v1.5h-3.7zM923 338h4.2v1h-4.2zM877 353h1.5v2h-1.5zM900 370h2v6.7h-2zM881 323.5h1v5.4h-1zM927.5 318h4.4v1.5h-4.4zM871 382.5h2v2.5h-2zM904 300h1v6.5h-1zM872.5 300h1v6.8h-1zM871.5 309.5h2v2.5h-2zM900.5 380.5h2v2.5h-2zM882.5 371h2.5v2h-2.5zM933.5 330.5h1.5v2h-1.5zM899 376h6.8v2h-6.8zM883 372.5h2.5v2h-2.5zM895 315.5h2v2.5h-2zM907.5 312h2.5v1.5h-2.5zM918.5 300h2v2.5h-2zM913.5 305h2.5v1.5h-2.5zM898 355h2v2.5h-2zM867 324h2.5v2h-2.5zM927.5 348h1.5v2h-1.5zM922.5 360.5h2v1.5h-2zM927.5 372h2v2h-2zM868.5 317.5h1.5v7h-1.5zM878 387.5h1v4.2h-1zM865 377.5h2.5v1.5h-2.5zM896.5 348h2.5v2h-2.5zM880 325h1.5v4.7h-1.5zM926 356.5h3.6v1h-3.6zM899.5 362h2.5v2.5h-2.5zM888 358h2v2h-2zM885.5 384h5.4v1.5h-5.4zM856.5 342.5h2.5v2.5h-2.5zM867.5 306h2.5v2.5h-2.5zM926.5 382h1.5v1.5h-1.5zM873 324.5h2v4.5h-2zM920 388.5h1v3h-1zM866.5 386.5h2.5v2.5h-2.5zM853.5 307h5.6v1.5h-5.6zM918.5 329.5h1.5v2h-1.5zM874.5 354h5v1.5h-5zM924 384h5.9v1.5h-5.9zM926 389h5.4v2h-5.4zM908 365h2.5v1.5h-2.5zM859 365.5h1v3.3h-1zM922.5 302h1.5v6.3h-1.5zM857.5 339.5h2.5v2h-2.5zM861.5 334h5.9v1h-5.9zM903 312.5h2.5v2h-2.5zM870 388.5h2v3.5h-2zM873 343h1.5v2h-1.5zM881 320h2.5v2h-2.5zM922.5 339h2v2h-2zM887 328h3.9v1h-3.9zM852.5 401.5h3.7v1.5h-3.7zM894.5 455h2v2.5h-2zM865 396.5h1.5v1.5h-1.5zM907.5 401.5h5.3v2h-5.3zM893.5 394h1.5v1.5h-1.5zM849 456h2v2h-2zM903 448.5h2v5.4h-2zM918.5 395h2v2.5h-2zM904.5 405h3.3v4.5h-3.3zM867 442.5h4v1.5h-4zM888 443.5h4.1v2h-4.1zM863.5 441h6.7v1h-6.7zM901.5 440h2.5v2.5h-2.5zM908 443h4.6v3.1h-4.6zM921 438.5h2v5.4h-2zM871.5 433.5h1.5v4.1h-1.5zM891.5 427.5h1.5v1.5h-1.5zM911.5 417h5.1v1.5h-5.1zM859.5 433h2v2.5h-2zM906 458.5h2.5v1.5h-2.5zM882.5 412.5h2v4.4h-2zM900 432.5h6.3v2h-6.3zM917 410h2v1.5h-2zM874 411.5h1.5v5.9h-1.5zM856.5 427.5h5.9v1h-5.9zM888 455h2v5h-2zM855.5 432h2v1.5h-2zM877.5 455h2v2h-2zM884 393.5h6.4v1.5h-6.4zM870.5 435.5h2.5v1.5h-2.5zM895 454h4.3v3.5h-4.3zM891.5 427h2v2.5h-2zM870.5 410h2v2h-2zM899 417.5h5.5v1h-5.5zM901.5 406.5h2v2h-2zM875.5 417h1.5v2h-1.5zM900.5 428.5h1.5v2.5h-1.5zM916 402h2v1.5h-2zM910.5 454.5h2v5.5h-2zM918.5 399h2v2h-2zM906 455.5h3.8v1h-3.8zM887.5 406.5h2v1.5h-2zM851 414.5h2v4.8h-2zM883.5 417h2.5v1.5h-2.5zM861 455h2v5h-2zM913 422.5h4.8v2h-4.8zM911 403h3.8v2h-3.8zM855 401h2.5v2.5h-2.5zM914.5 451.5h2v2h-2zM853 450.5h2v2h-2zM920.5 448.5h3.5v4.4h-3.5zM870 437.5h4.2v2h-4.2zM874 416h1v4.7h-1zM866 402h2v2h-2zM892 447h6.6v2h-6.6zM900 443.5h1v3h-1zM890 409.5h5v1h-5zM875.5 428h2v2h-2zM883 415h4.4v1h-4.4zM905 402h3.5v1.5h-3.5zM917 434h6.1v1.5h-6.1zM880.5 402h2v5.6h-2zM914.5 414h4.3v2h-4.3zM893 398.5h2.5v2h-2.5zM860.5 427.5h1.5v2h-1.5zM894 425.5h2v2h-2zM867.5 437.5h4.7v3.1h-4.7zM914 444h1.5v2.5h-1.5zM878.5 430h5.4v1h-5.4zM855.5 438h2v5.8h-2zM919 450h2.5v2.5h-2.5zM867.5 455.5h1.5v3.5h-1.5zM896.5 434h2v2h-2zM891.5 407h4.3v3.7h-4.3zM874 407h2v2h-2zM861 426h2v2h-2zM864 457.5h6v2h-6zM890 416h1.5v1.5h-1.5zM870 398.5h2v2h-2zM881.5 405.5h2v1.5h-2zM920 413.5h2.5v1.5h-2.5zM916 444h2.5v1.5h-2.5zM893.5 413h6.7v1h-6.7zM904.5 425h1.5v1.5h-1.5zM859.5 394.5h2.5v2h-2.5zM872 424.5h2v1.5h-2zM853 416h4.4v1.5h-4.4zM874 454.5h2.5v2h-2.5zM901 416.5h2v2h-2zM911 404.5h3.6v4.8h-3.6zM900.5 394.5h1.5v2h-1.5zM891 408.5h1.5v4.1h-1.5zM907 444h2v2h-2zM904.5 413.5h2v1.5h-2zM857 396h1.5v1.5h-1.5zM857.5 399h5.3v1.5h-5.3zM869 412h2v1.5h-2zM880.5 401.5h1v3.2h-1zM882.5 439.5h2v2h-2zM868.5 405h2.5v2h-2.5zM906 393.5h6.3v1h-6.3zM910.5 456.5h2v2.5h-2zM847.5 405h1v5.7h-1zM851 395h5.2v3.8h-5.2zM849.5 434h2v6.7h-2zM915 393h2.5v2h-2.5zM899 414h2.5v1.5h-2.5zM903.5 441h7v2h-7zM864 418h4v5h-4zM910.5 423.5h2v1.5h-2zM855 401h2v2.5h-2zM883 401.5h2.5v2h-2.5zM881.5 439.5h2.5v1.5h-2.5zM903 403h2.5v1.5h-2.5zM898.5 457.5h2.5v2.5h-2.5zM891.5 427.5h3.4v1h-3.4zM915.5 422.5h2v5.1h-2zM883.5 399h1.5v4.8h-1.5zM907 417h2.5v2h-2.5zM887 441h3.9v2h-3.9zM870.5 396h2v2h-2zM864.5 408h1.5v6.8h-1.5zM855.5 451.5h6.9v1.5h-6.9zM850.5 401h1v3.6h-1zM891 393h5v1.5h-5zM855 405h5.9v1h-5.9zM876.5 398.5h5.4v1.5h-5.4zM856 416h2v2h-2zM912 451.5h5.4v4h-5.4zM879.5 432h2v2.5h-2zM879.5 428h2.5v2h-2.5zM917 401h3.4v2h-3.4zM873.5 437.5h1.5v1.5h-1.5zM887.5 424.5h4.9v5.2h-4.9zM919 416.5h2.5v2h-2.5zM905.5 421h2v5.5h-2zM910.5 456.5h2.5v2.5h-2.5zM891 443.5h1.5v2h-1.5zM903.5 445h1.5v5.6h-1.5zM888.5 449.5h2v2.5h-2zM888.5 420.5h3.2v4.3h-3.2zM902 395.5h1.5v3.3h-1.5zM862 412.5h2v2h-2zM890 410.5h5.3v4.2h-5.3zM908 436.5h2v1.5h-2zM904 431.5h1.5v6.9h-1.5zM872 395h2v2h-2zM847.5 397.5h2.5v2.5h-2.5zM888 438.5h4.4v1.5h-4.4zM855.5 401.5h2v2h-2zM857 393h1v5.8h-1zM853 418.5h5v1h-5zM857 455h3.8v1h-3.8zM851.5 438.5h3.6v5.5h-3.6zM903.5 411h2.5v1.5h-2.5zM914.5 431.5h2v2.5h-2zM884 406h1v5.7h-1zM850.5 458.5h3.1v1.5h-3.1zM875.5 438.5h2v2.5h-2zM901.5 392.5h1.5v3.2h-1.5zM906.5 392h2v6.5h-2zM853.5 458h2v1.5h-2zM911 411.5h2.5v1.5h-2.5zM870.5 407.5h1.5v2h-1.5zM903.5 407.5h2.5v2h-2.5zM867.5 402.5h1v6.9h-1zM875 437.5h1.5v1.5h-1.5zM919 448.5h1.5v4.7h-1.5zM868 442.5h1.5v4.5h-1.5zM892.5 456h2.5v1.5h-2.5zM852 450h2v1.5h-2zM916.5 419h2v1.5h-2zM921 428h2.5v2h-2.5zM847.5 445.5h3.8v3.4h-3.8zM891 407h2v2h-2zM908.5 458.5h4v1.5h-4zM916 395.5h4.5v2h-4.5zM865.5 399h1.5v2.5h-1.5zM878 410.5h1.5v2.5h-1.5zM857.5 438.5h2.5v1.5h-2.5zM855.5 451.5h1.5v1.5h-1.5zM884 443h2v1.5h-2zM848 449h2v2h-2zM877 455h5.1v1.5h-5.1zM850.5 401h5.7v1h-5.7zM894.5 449h1.5v2h-1.5zM856 422.5h2v2h-2zM874.5 435h6v1h-6zM873.5 440.5h1v6.7h-1zM891 400h1.5v2.5h-1.5zM857.5 427h3.2v1h-3.2zM848.5 434.5h1v4.7h-1zM893.5 423h2v5.7h-2zM902 407.5h2v1.5h-2zM885.5 414.5h1.5v1.5h-1.5zM850.5 436h2.5v2h-2.5zM853 458.5h3.9v1.5h-3.9zM922 421.5h2v2h-2zM880.5 413h2v2h-2zM872 410h4.6v1h-4.6zM883 438.5h1.5v5.6h-1.5zM910.5 454.5h2v5.5h-2zM882 399.5h1v5.7h-1zM920.5 409h3.1v1h-3.1zM907.5 401.5h2.5v2.5h-2.5zM868 451.5h1.5v3.1h-1.5zM859.5 404h2v2.5h-2zM889.5 402.5h4.8v5.3h-4.8zM898 397h6.9v2h-6.9zM847.5 418.5h1.5v2h-1.5zM878 407h2v2h-2zM861 438h3.9v1h-3.9zM854.5 400.5h2v1.5h-2zM875.5 425h1v6.8h-1zM878.5 401h2v2h-2zM884.5 430h1v5.1h-1zM918 409.5h2v1.5h-2zM851.5 409.5h1.5v6.6h-1.5zM876 392.5h3.7v1.5h-3.7zM897.5 395h1.5v3.9h-1.5zM878 421.5h2v2h-2zM893 407.5h2v4.3h-2zM870.5 453h2.5v2h-2.5zM860 445h2.5v2h-2.5zM885 456.5h2v3.5h-2zM869.5 455h4.7v2h-4.7zM895.5 431h1v6.9h-1zM854.5 432.5h1.5v2h-1.5zM866 454h2v2.5h-2zM868.5 445.5h1.5v2.5h-1.5zM855.5 405h2v2.5h-2zM897.5 409.5h1.5v2.5h-1.5zM884 418h5.9v1.5h-5.9zM898 443h2v2h-2zM867.5 445h5.7v1.5h-5.7zM889 408.5h3.6v1.5h-3.6zM859.5 455.5h1.5v2.5h-1.5zM914.5 410h2v2h-2zM870 409h3.8v5.3h-3.8zM891 415h2.5v2h-2.5zM872 414.5h2v4.8h-2zM873.5 404h2.5v1.5h-2.5zM878 420.5h1v6.5h-1zM850 420h4.3v1.5h-4.3zM860 455.5h3.2v4.5h-3.2zM909 441h5v2h-5zM909 395h1.5v2.5h-1.5zM857 472h2.5v2h-2.5zM855.5 464.5h1.5v1.5h-1.5zM859 465h2v2.5h-2zM849 467.5h2v2h-2zM860 464.5h2v2.5h-2zM863.5 462.5h2.5v1h-2.5zM854.5 463.5h2.5v1.5h-2.5zM861.5 460h2v2.5h-2zM864.5 461.5h1.5v2h-1.5zM861.5 461.5h2.5v2h-2.5zM879.5 255h10.5v16.5h-10.5zM926 257h9v14h-9zM850 262h14v11h-14zM856 300h15v18h-15zM850 316h10v10h-10zM914.5 398h9v33h-9zM884 417h6v14h-6zM846 248h6v9h-6zM927 379h8v11h-8zM926.5 429h2v2h-2zM929 432h1.5v2h-1.5zM928 420.5h2v1.5h-2zM930.5 426.5h4.5v2h-4.5zM932.5 417.5h2.5v2h-2.5zM930 419h2v2h-2zM929.5 419.5h1.5v2.5h-1.5zM927.5 418h2v5.1h-2zM928 424h2v2h-2zM932.5 433.5h2v1.5h-2zM927 429h2v2h-2zM930.5 418.5h2v4.1h-2zM931 433.5h2.5v2.5h-2.5zM926.5 427.5h2v2h-2zM928 412h4.5v4.8h-4.5zM931 431h2v1.5h-2zM905 483h1.5v2h-1.5zM920 472.5h1v4.8h-1zM907 488.5h2v1.5h-2zM921.5 479.5h2v2.5h-2zM916.5 480.5h4.2v3.4h-4.2zM908 480.5h2.5v2h-2.5zM900 482.5h2v6.2h-2zM907.5 486.5h2.5v2h-2.5zM908 481h4.8v5h-4.8zM894 477h1v3.9h-1zM887 476.5h1.5v2h-1.5zM925.5 475h1v6.8h-1zM895.5 475.5h1.5v1.5h-1.5zM901 482h1.5v2.5h-1.5zM914 485h2.5v2h-2.5zM885.5 479h1.5v2h-1.5zM886.5 476.5h2v1.5h-2zM886 486.5h3.8v1h-3.8zM899.5 479.5h3.3v1.5h-3.3zM924 483h1v4.6h-1zM923.5 473.5h1.5v1.5h-1.5zM908 479.5h2v2h-2zM902.5 481.5h1.5v2h-1.5zM901.5 485.5h2v4.5h-2zM908.5 478.5h1.5v2h-1.5zM887 485h2v2h-2zM893 487.5h4.8v1h-4.8zM918 483.5h4.8v1.5h-4.8zM924 487h1.5v2h-1.5zM899.5 473h2.5v2h-2.5zM910 477.5h2v2h-2zM928 477h2v1h-2zM887.5 488h2v2h-2zM894.5 473h2v2h-2zM902 477h2v2h-2zM923.5 485.5h1.5v2h-1.5zM926 476.5h2v4.2h-2zM905.5 486.5h2v2h-2zM920 484.5h2v2.5h-2zM886.5 472.5h2v2h-2zM928.5 488h1.5v1.5h-1.5zM915.5 481.5h1.5v4.6h-1.5zM905.5 474h2.5v2h-2.5zM902.5 478h1v3.1h-1zM892.5 486.5h1.5v3.5h-1.5zM904.5 475h2v2h-2zM914 488h2v1.5h-2zM912.5 478.5h1.5v2h-1.5zM903 481h1.5v2h-1.5zM908 481.5h2.5v2.5h-2.5zM902.5 483h2v2h-2zM893.5 485.5h1v4.5h-1zM908.5 483h2v2.5h-2zM906 487h2v2h-2zM912 479.5h2v1.5h-2zM917 486h3.5v3.5h-3.5zM896.5 474h2v2h-2zM916.5 483h1.5v2.5h-1.5zM918 487.5h3.7v2h-3.7zM898.5 472.5h1.5v3.2h-1.5zM893.5 482h1.5v2h-1.5zM899.5 473h3.9v2h-3.9zM912 500h2v2h-2zM910.5 492.5h4.4v1.5h-4.4zM903.5 501.5h1v2.5h-1zM903 501h6.1v1.5h-6.1zM906.5 495h2v2h-2zM903 496h2.5v2h-2.5zM921.5 500h1.5v3.5h-1.5zM914.5 499h1.5v2h-1.5zM901 494h2v1.5h-2zM912 496.5h1v6.7h-1zM912.5 502h2v1.5h-2zM920.5 502h2v1.5h-2zM914 499.5h1.5v4.5h-1.5zM922.5 495h2.5v3.2h-2.5zM905 494.5h2v2.5h-2zM913.5 499h2.5v2h-2.5zM916 497.5h2.5v1.5h-2.5zM908 498.5h6.9v2h-6.9zM906 497h5.1v1h-5.1zM912.5 497h1.5v2h-1.5zM922 500.5h1.5v3.5h-1.5zM911.5 493.5h6.3v1.5h-6.3zM918 495.5h2v4.1h-2zM923 493.5h2v1.5h-2zM915.5 501h4v3h-4zM903 493h6.4v1.5h-6.4zM916.5 496.5h2v2h-2zM921.5 495.5h1.5v1.5h-1.5zM915.5 496.5h2.5v2h-2.5zM914.5 499.5h6.6v1h-6.6zM909.5 500h4.9v3.3h-4.9zM909.5 533h2.5v2h-2.5zM910 533.5h2.5v2h-2.5zM902.5 529h3.7v2h-3.7zM911.5 525.5h5.1v4.6h-5.1zM913 528.5h2v6.9h-2zM902.5 534.5h6.3v1h-6.3zM918.5 528.5h3.1v2h-3.1zM912.5 531h4.8v2h-4.8zM920 528h5v1h-5zM909 524h4.3v3.3h-4.3zM913 531.5h1.5v1.5h-1.5zM916 533h5.2v1.5h-5.2zM905 530.5h1v5.1h-1zM913 524h1.5v2h-1.5zM915.5 528h3.3v1.5h-3.3zM923 524.5h1v5.8h-1zM918 528.5h4.7v2h-4.7zM846 565h4.500v7h-4.500zM888 565h6.500v7h-6.500zM867.5 565.5h2.5v2h-2.5zM878 562.5h1.5v1.5h-1.5zM869 555h2v1.5h-2zM851.5 555h5.3v2h-5.3zM867 564h2.5v2.5h-2.5zM857 564.5h3.3v1.5h-3.3zM863 559h2v2h-2zM871.5 554.5h5.9v2h-5.9zM852.5 564h2v3.9h-2zM880 562h2v4.2h-2zM863.5 558.5h1.5v3.1h-1.5zM869.5 563.5h2v3.1h-2zM883.5 556h2.5v1h-2.5zM870.5 554.5h1v5.1h-1zM855.5 559.5h4.1v1h-4.1zM876 558h1v6h-1zM868 561.5h2.5v2h-2.5zM858.5 555.5h2.5v2h-2.5zM860.5 557h2v3.5h-2zM858.5 556.5h1.5v2h-1.5zM883.5 555.5h1.5v2h-1.5zM874.5 564h2.5v1.5h-2.5zM869 556h4.9v1h-4.9zM870 562h2v2.5h-2zM860.5 556h1.5v6h-1.5zM860.5 564h2v2h-2zM882.5 563.5h1.5v2h-1.5zM883 566h1.5v2h-1.5zM851.5 560h2.5v2.5h-2.5zM879 564h2.5v2.5h-2.5zM856 555h2v2h-2zM883.5 566h2.5v2h-2.5zM854.5 559h3.5v1h-3.5zM858.5 565.5h2v1.5h-2zM874 559h1.5v1.5h-1.5zM862.5 564.5h1.5v3.5h-1.5zM860 561h2v2h-2zM856.5 553.5h5v2h-5zM855 557h2v2.5h-2zM875 565.5h5.4v1.5h-5.4zM884 560.5h2v2.5h-2zM855 560.5h2v3.5h-2zM872.5 554h1.5v5.3h-1.5zM869.5 559.5h3.3v3.1h-3.3zM862 554.5h1v6.3h-1zM875 566.5h1.5v1.5h-1.5zM851.5 555.5h2.5v1.5h-2.5zM855.5 553.5h2.5v1.5h-2.5zM854 554.5h2v5.8h-2zM881 564.5h2v3.5h-2zM880.5 558h2v4.4h-2zM857.5 559.5h4v1.5h-4zM862.5 558h3.6v1h-3.6zM870 565h6.1v2h-6.1zM884.5 557h1.5v2h-1.5zM878 566.5h2v1.5h-2zM882.5 560h2v1.5h-2zM858 560h2v5.1h-2zM859 560h2.5v1.5h-2.5zM878.5 555h1v3.6h-1zM857.5 556h2.5v2h-2.5zM876.5 562h2v6h-2zM867.5 557.5h1v4.3h-1zM874 563.5h1.5v2h-1.5zM850.5 553h6.7v2h-6.7zM872.5 555h2v6h-2zM882 563h4v1h-4zM872.5 563h2v2h-2zM872.5 560.5h2.5v1.5h-2.5zM883 557.5h1.5v1.5h-1.5zM879.5 562h1.5v2.5h-1.5zM883 562.5h1.5v2h-1.5zM862 564.5h5.5v1h-5.5z"/><path fill="#a81010" d="M854 264h2.5v2.5h-2.5zM867 288.5h2.5v2h-2.5zM878 251.5h2v5.9h-2zM859.5 265h2v1.5h-2zM863 261h3.8v1h-3.8zM861.5 293h2v1.5h-2zM851 259.5h2v2.5h-2zM846.5 243.5h5v3.2h-5zM860 265.5h1.5v4.2h-1.5zM871.5 293.5h5.5v2h-5.5zM869.5 246h4.8v1.5h-4.8zM856.5 295.5h2v2h-2zM877.5 287h2v5h-2zM871.5 250h1.5v1.5h-1.5zM848.5 244h1v4.8h-1zM854.5 273.5h4.7v4h-4.7zM854.5 270.5h1v4.9h-1zM865 266.5h2v2h-2zM872.5 268.5h2v1.5h-2zM851 270.5h2v6.7h-2zM852.5 245h1.5v2h-1.5zM863 266.5h2v2h-2zM871.5 291h1v4.2h-1zM877 269.5h3v1h-3zM854 246h2v2h-2zM846.5 275.5h5.8v1h-5.8zM874 249.5h1v3.7h-1zM856.5 249.5h2.5v1.5h-2.5zM876 277h1v3.1h-1zM867 248h4.3v3.7h-4.3zM873.5 276h3.8v2h-3.8zM854 253.5h2.5v1.5h-2.5zM857.5 285h4.7v5.3h-4.7zM849.5 290h2v2h-2zM857.5 271.5h3v2h-3zM847.5 273.5h2v6.1h-2zM858.5 261.5h1.5v1.5h-1.5zM859.5 244.5h1.5v2.5h-1.5zM846.5 241h6.7v1.5h-6.7zM873.5 274.5h2.5v2h-2.5zM874.5 292.5h2v2.5h-2zM865.5 249.5h3.1v1h-3.1zM867 280.5h2v2h-2zM855 243h1v6.8h-1zM878 245h2v1.5h-2zM859.5 293.5h2.5v2h-2.5zM860.5 248.5h2.5v2h-2.5zM863.5 264h1.5v1.5h-1.5zM849.5 285h2v6.5h-2zM860.5 260.5h6.4v2h-6.4zM860.5 244h2v2.5h-2zM871 243.5h2v4h-2zM857 288h2v3.7h-2zM864.5 257.5h2.5v2.5h-2.5zM876 278h1.5v5.6h-1.5zM876.5 269.5h2v1.5h-2zM861 272h2v2.5h-2zM866 258h4.2v4.6h-4.2zM853 283.5h2v2.5h-2zM867 252h3.9v1.5h-3.9zM866.5 296h2.5v2h-2.5zM857.5 260h2v2h-2zM873.5 296.5h2v1.5h-2zM874.5 276h1.5v3.6h-1.5zM878 243h1.5v6.5h-1.5zM874.5 286h1.5v6.2h-1.5zM856 258.5h6.7v1.5h-6.7zM875 257.5h2v1.5h-2zM864 262h2v1.5h-2zM866.5 248h2v2h-2zM870 245h2v1.5h-2zM847 242h2v2h-2zM849 250.5h2v2.5h-2zM850.5 275h5.9v1h-5.9zM846.5 280.5h5.2v2h-5.2zM872 292.5h2v2.5h-2zM878 288.5h1.5v1.5h-1.5zM859 273h2v2.5h-2zM874 261h6v1h-6zM876 271.5h4v1h-4zM868 250h1.5v2h-1.5zM878 290h2v2h-2zM861.5 244h2v2.5h-2zM850.5 253h2v5.6h-2zM882.5 251.5h2v2.5h-2zM883.5 243.5h2v2h-2zM887 244.5h1.5v2h-1.5zM889 246h2v2.5h-2zM886 241.5h2v2.5h-2zM923 243.5h2v2h-2zM925 251.5h3.9v1h-3.9zM926.5 242.5h2v1.5h-2zM917 253.5h1.5v2h-1.5zM927.5 254h2v2h-2zM925 244.5h1.5v2.5h-1.5zM930.5 252h2v1.5h-2zM921 249h2v5.3h-2zM931.5 241.5h2v2.5h-2zM923.5 242h2v4.4h-2zM931.5 247.5h2v2h-2zM930.5 242.5h2v2.5h-2zM925 254h3.5v2h-3.5zM930.5 242h1.5v1.5h-1.5zM933.5 243.5h1.5v3.6h-1.5zM930 241.5h1.5v2.5h-1.5zM925 241.5h1v3.8h-1zM920.5 245.5h2v2h-2zM930.5 290h2v2h-2zM882.5 282.5h6.4v1.5h-6.4zM921 282h1.5v5.1h-1.5zM926.5 278.5h2v2h-2zM921 291.5h1.5v3.4h-1.5zM915.5 295.5h2v4.5h-2zM921.5 286h4.5v4.5h-4.5zM882 288h2v2h-2zM925.5 294h2v1.5h-2zM924 282h3.7v3.2h-3.7zM920 287.5h2v2h-2zM929 294h1.5v2h-1.5zM900 296h2v2h-2zM904 292.5h1v6.4h-1zM883 286.5h5.9v1h-5.9zM924 279.5h2.5v1.5h-2.5zM924 276.5h2v2h-2zM885.5 284.5h2.5v2.5h-2.5zM906.5 278.5h2.5v1.5h-2.5zM890.5 282h2v1.5h-2zM886 297h2v2h-2zM880.5 290.5h2.5v1.5h-2.5zM909.5 281.5h5.6v1h-5.6zM918 276.5h1v4.8h-1zM892.5 286.5h4.2v5.5h-4.2zM916.5 276.5h1.5v2h-1.5zM913 282h5.8v1h-5.8zM912 286h1v5.6h-1zM924 290.5h2v2.5h-2zM932 280.5h4v3.6h-4zM913.5 290.5h2v2h-2zM917 279.5h4.9v5.1h-4.9zM921 295h1.5v2h-1.5zM897 277.5h2v2h-2zM923.5 286h2v5.5h-2zM905 293h4.3v1h-4.3zM913.5 278.5h4.1v1h-4.1zM889.5 293h1.5v2h-1.5zM890.5 329.5h2v2h-2zM932.5 385.5h2v2h-2zM902.5 328h2.5v2h-2.5zM904 351.5h3.1v1h-3.1zM884 308.5h1.5v6.2h-1.5zM924 390h1.5v2h-1.5zM920 338.5h1.5v2.5h-1.5zM873.5 357.5h2v1.5h-2zM890.5 316.5h2.5v2.5h-2.5zM866.5 332h1.5v2h-1.5zM887 375.5h2.5v2h-2.5zM901.5 361.5h2v2h-2zM917 314h4.1v1h-4.1zM920 303.5h2v4.7h-2zM862 314h2v3.2h-2zM922 389.5h1.5v2.5h-1.5zM915 318.5h5.1v2h-5.1zM904 343.5h2v2h-2zM930.5 341h2v6.8h-2zM851.5 301h1.5v2h-1.5zM846 304.5h3.8v4.4h-3.8zM869.5 379.5h2.5v2.5h-2.5zM860.5 365.5h2v2h-2zM867.5 308.5h2v2.5h-2zM852.5 370.5h3.7v1.5h-3.7zM904.5 309h4.2v1.5h-4.2zM928.5 373.5h2.5v2.5h-2.5zM897.5 365.5h4.5v2h-4.5zM919 314.5h2v1.5h-2zM909.5 310.5h3v1h-3zM908.5 370.5h2.5v2h-2.5zM849 387h6.9v1h-6.9zM921 378.5h2v2h-2zM867.5 353h2v2h-2zM887.5 364.5h2.5v2.5h-2.5zM854.5 308h2.5v2h-2.5zM927.5 331.5h3.4v2h-3.4zM918 305.5h1.5v4.3h-1.5zM906 345h2v1.5h-2zM899 380h4.5v1.5h-4.5zM877.5 319h1.5v5.6h-1.5zM860 369h2v2h-2zM870.5 357.5h2v2h-2zM888 348.5h6.3v1h-6.3zM933 379h1v5.6h-1zM903.5 333.5h2v2h-2zM868 327h2.5v1.5h-2.5zM902 376.5h2v2.5h-2zM848 365.5h2.5v2.5h-2.5zM925 310.5h2.5v2.5h-2.5zM855.5 384h2.5v2.5h-2.5zM859.5 347h1v6.6h-1zM854 302.5h6.3v2h-6.3zM890 317h2v2h-2zM894.5 358h2.5v2h-2.5zM866.5 310.5h5.9v1.5h-5.9zM868 382.5h5.4v1h-5.4zM881.5 351.5h2v2h-2zM854 380.5h1.5v2h-1.5zM873 324h2.5v2h-2.5zM909 352.5h2v2h-2zM869 325h4.8v1.5h-4.8zM854.5 305h1.5v5.8h-1.5zM931 326h5v1h-5zM870.5 323h2v2h-2zM885 308.5h2v1.5h-2zM922.5 358h1.5v1.5h-1.5zM933.5 343.5h1.5v6.6h-1.5zM904.5 328h2.5v2.5h-2.5zM858.5 329.5h1.5v2.5h-1.5zM875 378h1v4.5h-1zM865 310.5h2v2.5h-2zM868 352.5h1.5v2h-1.5zM877 344h2v6.8h-2zM857 347.5h4.7v3.6h-4.7zM858.5 361.5h1.5v2h-1.5zM884.5 351h2.5v2h-2.5zM927 387.5h2.5v2.5h-2.5zM860 323.5h1v3.7h-1zM881.5 343h1.5v6.6h-1.5zM877 317h1v4h-1zM922.5 387h1.5v2h-1.5zM848.5 333.5h2.5v2.5h-2.5zM874.5 337h2.5v2h-2.5zM873 366h1v4.5h-1zM896 302.5h1v4.9h-1zM893 349h1v6.9h-1zM927.5 371.5h2v6h-2zM907 364.5h2v2.5h-2zM921.5 374h2v2h-2zM879 390.5h3.6v1.5h-3.6zM929.5 323h3.9v2h-3.9zM876 374h2v4h-2zM882.5 353.5h1.5v2h-1.5zM897.5 310h5.3v5h-5.3zM887.5 314.5h1.5v1.5h-1.5zM890.5 345h1v3.6h-1zM933.5 305.5h2.5v2h-2.5zM855.5 349h2v3.4h-2zM898 371h2v1.5h-2zM860 314.5h2v2.5h-2zM925 311h3.5v1.5h-3.5zM924.5 310.5h2.5v2h-2.5zM868.5 337h3.7v1.5h-3.7zM877.5 302.5h4.2v1h-4.2zM890.5 348h1.5v1.5h-1.5zM932 325.5h2.5v2.5h-2.5zM889.5 334h2v2h-2zM853 379.5h1v6.6h-1zM914.5 387.5h1.5v2h-1.5zM863.5 338h1.5v2h-1.5zM895 383h4.1v1.5h-4.1zM850.5 385.5h2v1.5h-2zM901 346h1v6h-1zM880.5 334h1.5v1.5h-1.5zM852.5 378.5h1v5h-1zM884.5 346h1.5v2h-1.5zM857.5 378.5h1.5v3.5h-1.5zM894.5 374h5.8v1h-5.8zM859 323.5h1.5v4.7h-1.5zM883.5 327h2v2h-2zM922.5 369.5h1.5v6.4h-1.5zM922.5 334h4v1h-4zM900.5 356h2v2.5h-2zM851 360.5h2v1.5h-2zM884.5 316h1v6.5h-1zM884 352h2v2h-2zM893 301.5h5.3v1.5h-5.3zM867.5 355h1.5v2h-1.5zM895 386h4.8v1.5h-4.8zM872.5 378.5h2v2.5h-2zM931 326h3.5v3.2h-3.5zM883 325.5h2v5.2h-2zM878 326h5.3v5.4h-5.3zM911 324.5h1.5v2.5h-1.5zM887.5 369h4.8v1h-4.8zM872 339.5h2v2h-2zM869 384.5h2v1.5h-2zM922.5 373h1.5v2h-1.5zM897 304.5h5.4v1.5h-5.4zM930.5 328h1.5v2h-1.5zM927.5 311.5h1.5v6.5h-1.5zM865 373h2v2h-2zM873.5 348.5h2v2.5h-2zM883 331.5h2v6.6h-2zM914 316h2v2h-2zM876 316h2.5v2h-2.5zM925.5 322.5h1.5v2h-1.5zM850.5 325.5h3.4v4.5h-3.4zM855 365.5h1.5v3.8h-1.5zM910 303.5h1.5v2h-1.5zM868.5 343h2v2h-2zM924 311.5h4.9v4.1h-4.9zM899.5 323h4.5v2h-4.5zM859 307.5h5.7v1h-5.7zM915 384h4.9v2h-4.9zM930.5 386.5h3.8v1.5h-3.8zM875.5 368.5h1.5v2h-1.5zM900.5 384.5h2v2h-2zM848 314h6.9v1.5h-6.9zM901.5 354h1.5v5.1h-1.5zM884.5 341h1.5v2.5h-1.5zM854 380h1.5v2h-1.5zM913 335.5h2v3.2h-2zM919 340.5h2v1.5h-2zM880.5 356h1.5v2h-1.5zM898 314.5h2.5v2h-2.5zM906 301.5h2v2.5h-2zM934 338.5h2v2.5h-2zM919.5 369h6.2v1.5h-6.2zM875.5 370.5h4.5v2h-4.5zM929 370.5h2.5v1.5h-2.5zM913 325.5h1v6.2h-1zM901 317.5h2v2.5h-2zM878.5 371h7v1.5h-7zM889 335.5h1.5v4h-1.5zM857 348h1v5.6h-1zM931.5 331h2v1.5h-2zM862.5 357.5h4.2v5.2h-4.2zM891.5 377h1.5v2h-1.5zM895 310.5h1.5v6.4h-1.5zM927.5 303h2v2h-2zM911 365h1v4.8h-1zM900.5 316.5h1v5.5h-1zM881.5 344.5h1.5v4.6h-1.5zM907 341.5h2v3.4h-2zM898 373h2v3.9h-2zM859 331h2v3.3h-2zM914.5 387.5h2v1.5h-2zM898.5 337h2.5v2.5h-2.5zM873 351.5h2v2h-2zM855 380.5h1.5v6.4h-1.5zM875.5 342h2v4.5h-2zM904 339h4.9v4.3h-4.9zM926 361h3.2v1h-3.2zM919.5 354h1.5v3.1h-1.5zM893 332h2v1.5h-2zM867.5 351h2v6h-2zM929.5 326h1.5v3.8h-1.5zM860 302.5h2v5.2h-2zM863 328.5h4.8v1.5h-4.8zM931.5 377.5h2.5v2h-2.5zM891.5 367h4.7v2h-4.7zM866.5 357.5h1.5v5.9h-1.5zM907 316.5h2v2h-2zM855 379h5.9v1.5h-5.9zM893 316.5h1.5v1.5h-1.5zM931.5 338.5h1.5v2.5h-1.5zM866 302.5h1.5v2h-1.5zM879 351h2v1.5h-2zM868 376.5h2v2.5h-2zM853.5 360.5h2.5v1.5h-2.5zM882.5 313.5h5.5v1.5h-5.5zM896 312.5h1.5v3.9h-1.5zM898 385h5.4v1.5h-5.4zM908 362.5h2v1.5h-2zM909 357.5h2.5v1.5h-2.5zM871 385h2v2h-2zM875 301.5h2.5v2h-2.5zM880 365h1.5v1.5h-1.5zM894.5 373.5h4.4v1h-4.4zM912.5 360.5h1.5v4.2h-1.5zM866 329.5h3.6v1h-3.6zM898 360.5h2v2h-2zM862 337.5h2v2.5h-2zM908 330.5h5.4v1.5h-5.4zM853.5 326h1.5v1.5h-1.5zM873.5 352.5h1.5v2h-1.5zM922 318h4.1v5.2h-4.1zM891 350.5h6.2v1h-6.2zM917.5 372h2v2h-2zM933 363h3v1.5h-3zM858 367.5h2v2.5h-2zM857.5 379.5h1v4.9h-1zM923.5 369h2v5.6h-2zM910 341.5h2v2.5h-2zM927 333h4.3v1.5h-4.3zM909.5 387h2.5v2h-2.5zM917 350h1.5v1.5h-1.5zM923 346.5h5v3.6h-5zM908.5 335h2v2h-2zM854 345h2.5v2.5h-2.5zM880 323.5h2v1.5h-2zM920.5 388h4.4v1.5h-4.4zM857.5 337h1.5v1.5h-1.5zM926.5 309h3.5v2h-3.5zM865.5 354h1.5v3.9h-1.5zM854.5 323h5.5v3h-5.5zM931 326.5h5v4.2h-5zM900 401.5h2.5v2h-2.5zM852.5 435h1.5v2.5h-1.5zM873.5 431h1.5v2.5h-1.5zM914.5 442h1.5v4.1h-1.5zM896.5 426.5h3.1v2h-3.1zM849 439.5h2v1.5h-2zM856 448.5h2v3.2h-2zM920.5 404.5h1v4.3h-1zM897.5 414h1.5v2h-1.5zM866 400h2v3.6h-2zM893.5 428.5h1v4.4h-1zM888.5 445h3.9v1h-3.9zM900.5 457.5h1.5v2h-1.5zM876.5 435h2v3.6h-2zM879.5 444.5h1.5v2.5h-1.5zM869 420h1.5v2h-1.5zM870.5 400h4.8v1.5h-4.8zM879.5 396.5h1.5v1.5h-1.5zM855 451.5h1.5v3.8h-1.5zM864.5 409.5h1.5v2h-1.5zM879.5 404.5h6v2h-6zM862.5 417h2.5v2h-2.5zM888 432h5.1v1.5h-5.1zM853 424h1.5v3h-1.5zM910.5 444.5h1v4.3h-1zM896.5 454.5h4.6v1.5h-4.6zM908 408.5h2v4.2h-2zM898.5 421.5h2v2.5h-2zM875 404.5h2v3.2h-2zM884 429.5h6.4v1h-6.4zM857.5 425h1.5v2h-1.5zM900.5 393h6.6v2h-6.6zM871.5 458.5h2v1.5h-2zM913.5 439.5h1v6.7h-1zM895.5 452.5h2.5v2h-2.5zM863.5 434h1.5v2h-1.5zM918 438.5h1.5v2.5h-1.5zM902 458h6.3v1.5h-6.3zM866 454.5h2.5v1.5h-2.5zM856.5 399h1.5v6.2h-1.5zM916 458h2.5v2h-2.5zM880.5 446h2.5v2.5h-2.5zM848.5 426.5h1.5v2.5h-1.5zM884 409h1.5v6h-1.5zM921.5 421.5h2v2h-2zM861 428.5h1.5v2h-1.5zM861.5 422.5h2.5v2h-2.5zM861 449.5h2.5v1.5h-2.5zM857.5 439.5h2.5v1.5h-2.5zM847 425h2v6.2h-2zM892.5 401.5h5.9v1.5h-5.9zM870 428.5h2v1.5h-2zM909 450h4.3v3h-4.3zM857 417h1.5v4h-1.5zM888.5 428.5h1.5v5h-1.5zM889.5 427h5.4v4.1h-5.4zM861.5 428h2v6.7h-2zM866.5 405h5.3v1.5h-5.3zM850 437h2.5v2h-2.5zM888 406h3.3v1h-3.3zM847.5 430.5h2.5v2.5h-2.5zM890 425.5h1v3.9h-1zM912.5 400.5h2.5v2.5h-2.5zM910 430h1.5v1.5h-1.5zM882 410h6.9v2h-6.9zM869 395.5h2v2h-2zM892 400h1.5v2h-1.5zM895.5 424h5.2v3.1h-5.2zM861 444.5h1v5.3h-1zM879 398h2v1.5h-2zM914.5 423.5h2.5v1.5h-2.5zM893.5 449h2v2.5h-2zM921 394h1.5v1.5h-1.5zM878 435.5h1v5.8h-1zM912.5 397.5h5.8v1h-5.8zM869 410h1.5v5.4h-1.5zM859.5 416.5h1v3.6h-1zM867 413h3.8v3h-3.8zM906.5 438.5h1.5v4.8h-1.5zM904.5 414.5h2v2.5h-2zM893 436.5h1v5.3h-1zM858.5 445.5h2v2h-2zM854.5 430h2v2h-2zM865 407h2v1.5h-2zM853 436.5h2v2.5h-2zM898 443h3.3v1h-3.3zM887 410.5h1.5v2h-1.5zM866 455h2.5v2h-2.5zM892 406h2.5v2.5h-2.5zM877 456.5h2.5v1.5h-2.5zM901.5 412.5h3.8v2h-3.8zM916 454.5h5.8v2h-5.8zM880 401h2.5v2.5h-2.5zM908 423.5h1.5v2.5h-1.5zM893.5 446h2.5v1.5h-2.5zM917.5 449h2.5v2.5h-2.5zM851.5 395.5h2v2h-2zM888 397.5h6.5v1h-6.5zM852 410.5h1.5v3.7h-1.5zM852.5 415.5h5.1v1.5h-5.1zM899 417.5h2v2h-2zM863 430h1.5v4.6h-1.5zM921 422.5h1.5v4h-1.5zM859 398h1.5v3.3h-1.5zM874.5 402.5h6.4v1h-6.4zM846 399.5h2.5v2.5h-2.5zM871.5 445h2.5v2h-2.5zM855 431h4.2v1h-4.2zM920 432h4v2h-4zM868 394h2v5.9h-2zM891.5 458h2v2h-2zM881.5 400.5h5.2v4.6h-5.2zM912 424.5h3.8v2h-3.8zM848.5 443.5h3.3v1h-3.3zM898 433h1.5v3.6h-1.5zM910 417h2v2h-2zM856.5 418.5h4v4h-4zM877 454h2v1.5h-2zM893.5 420.5h1.5v1.5h-1.5zM906 420.5h2v1.5h-2zM858 448.5h4.5v3.6h-4.5zM884 398.5h2v2h-2zM849 431h3.4v1h-3.4zM867 395h2v2h-2zM876 428h6.3v1h-6.3zM922 406h2v1h-2zM880 442.5h3.9v1.5h-3.9zM892.5 456h1.5v1.5h-1.5zM852.5 399.5h4.5v1h-4.5zM897.5 446h1.5v2h-1.5zM905 400.5h5.2v1h-5.2zM857 428h5v2h-5zM893 435.5h1v3.8h-1zM873 434h2v2.5h-2zM904 447.5h2v6.2h-2zM885 452.5h1.5v2h-1.5zM900.5 417h2.5v1.5h-2.5zM866 448.5h2v2h-2zM884.5 425.5h2.5v2h-2.5zM859 404h2.5v2h-2.5zM884.5 417.5h2v2h-2zM847.5 426h2.5v2h-2.5zM912.5 431h2.5v2.5h-2.5zM875 416.5h1.5v2h-1.5zM891 450.5h7v1.5h-7zM901.5 445h2v2h-2zM887 440h2v5.1h-2zM866 415h4.2v3.2h-4.2zM888.5 410h2v2h-2zM872.5 406.5h1v6.4h-1zM904.5 427.5h2.5v1.5h-2.5zM919 410.5h2v3.5h-2zM899.5 455h1.5v2.5h-1.5zM846.5 455.5h2v3.8h-2zM870.5 444.5h1.5v1.5h-1.5zM865 454h1.5v3.9h-1.5zM913.5 432h2.5v1.5h-2.5zM914.5 445h2v1.5h-2zM894 392.5h1.5v2h-1.5zM863.5 433.5h2.5v2h-2.5zM886.5 453h1.5v4.5h-1.5zM896 392.5h2v5.4h-2zM910.5 437.5h2.5v2h-2.5zM858.5 445h4.8v1.5h-4.8zM863 428h4.4v1.5h-4.4zM851 420h2v2h-2zM881.5 453h4.8v2h-4.8zM851 473.5h2v2h-2zM856.5 467h1.5v2h-1.5zM857.5 472h6.7v1h-6.7zM854 461.5h4.8v4.1h-4.8zM852 463h2.5v2.5h-2.5zM851 468h2v2.5h-2zM850.5 473.5h1.5v2.5h-1.5zM860.5 464.5h4.5v2h-4.5zM857 465.5h2v4.9h-2zM852.5 467h1v3.3h-1zM847 466.5h3.9v2h-3.9zM852 467.5h1.5v1.5h-1.5zM932 424h3v1.5h-3zM929.5 412.5h1.5v4.2h-1.5zM928.5 419h2v2h-2zM931.5 434.5h2v2h-2zM928 431.5h6.3v1h-6.3zM932.5 417.5h1.5v3.8h-1.5zM926.5 418.5h2v5h-2zM932 425h1.5v4h-1.5zM927 430h2v1.5h-2zM931 428.5h2.5v2h-2.5zM929 430h2v2h-2zM930.5 412.5h2.5v2h-2.5zM929 423.5h2v2h-2zM931.5 425.5h3.5v3.3h-3.5zM929.5 428.5h5.5v1h-5.5z"/><path fill="#c09800" d="M853.5 283.5h1.5v1.5h-1.5zM868 268.5h2v2h-2zM862 271h2v2h-2zM858.5 286h2v2h-2zM873 287.5h2v2h-2zM849 273h1.5v1.5h-1.5zM853.5 274.5h2v2h-2zM876 269.5h2v2h-2zM847 298h1.5v1.5h-1.5zM874 278h1.5v1.5h-1.5zM854.5 261h1.5v1.5h-1.5zM850.5 284.5h2v2h-2zM861 293.5h1.5v1.5h-1.5zM852 267h1.5v1.5h-1.5zM878 298.5h2v1.5h-2zM859.5 250.5h1.5v1.5h-1.5zM878 242h1.5v1.5h-1.5zM860.5 286.5h2v2h-2zM857 289.5h1.5v1.5h-1.5zM850.5 297h1.5v1.5h-1.5zM872.5 292h2v2h-2zM870 283.5h1.5v1.5h-1.5zM866 266h2v2h-2zM851.5 271h1.5v1.5h-1.5zM863.5 256.5h1.5v1.5h-1.5zM871.5 261h2v2h-2zM857.5 258h1.5v1.5h-1.5zM851 297.5h1.5v1.5h-1.5zM877 269h2v2h-2zM867 245.5h2v2h-2zM851.5 286h2v2h-2zM860.5 279.5h1.5v1.5h-1.5zM858.5 241h1.5v1.5h-1.5zM877.5 276.5h2v2h-2zM855.5 260.5h1.5v1.5h-1.5zM877.5 252.5h2v2h-2zM873.5 280h1.5v1.5h-1.5zM864.5 294h2v2h-2zM868 258.5h1.5v1.5h-1.5zM851 253h2v2h-2zM848.5 252h2v2h-2zM864 246.5h1.5v1.5h-1.5zM878 254h1.5v1.5h-1.5zM853.5 262.5h1.5v1.5h-1.5zM871.5 268.5h1.5v1.5h-1.5zM877.5 241.5h2v2h-2zM878 259h2v2h-2zM852.5 244h2v2h-2zM859.5 298h2v2h-2zM877.5 241h2v2h-2zM858.5 289h1.5v1.5h-1.5zM861.5 287h1.5v1.5h-1.5zM876.5 278h2v2h-2zM859 249h1.5v1.5h-1.5zM874 287h1.5v1.5h-1.5zM887.5 245h1.5v1.5h-1.5zM891.5 246h2v2h-2zM889 249.5h1.5v1.5h-1.5zM891.5 244.5h1.5v1.5h-1.5zM881.5 244h1.5v1.5h-1.5zM919.5 242.5h2v2h-2zM930.5 245.5h1.5v1.5h-1.5zM925 247.5h1.5v1.5h-1.5zM920.5 249.5h1.5v1.5h-1.5zM918 251.5h1.5v1.5h-1.5zM926.5 250h2v2h-2zM889 280h1.5v1.5h-1.5zM909 287.5h1.5v1.5h-1.5zM911.5 285h1.5v1.5h-1.5zM888 291h2v2h-2zM913 287.5h2v2h-2zM887.5 286h2v2h-2zM909.5 288.5h2v2h-2zM887.5 278.5h1.5v1.5h-1.5zM923 294.5h1.5v1.5h-1.5zM884 276.5h1.5v1.5h-1.5zM918.5 291h1.5v1.5h-1.5zM905 285h1.5v1.5h-1.5zM930 295h1.5v1.5h-1.5zM932.5 290.5h1.5v1.5h-1.5zM931 276.5h2v2h-2zM884 281h2v2h-2zM887 294h2v2h-2zM931 285h2v2h-2zM914 286.5h1.5v1.5h-1.5zM904 283.5h1.5v1.5h-1.5zM920 284h1.5v1.5h-1.5zM915 290.5h1.5v1.5h-1.5zM900 295h1.5v1.5h-1.5zM912.5 285.5h1.5v1.5h-1.5zM885 290h2v2h-2zM931 285.5h2v2h-2zM927 297h1.5v1.5h-1.5zM896.5 277.5h2v2h-2zM908.5 279.5h1.5v1.5h-1.5zM881.5 296.5h1.5v1.5h-1.5zM897 294.5h1.5v1.5h-1.5zM913 369.5h1.5v1.5h-1.5zM933.5 366h2v2h-2zM855 372h2v2h-2zM891 384.5h2v2h-2zM917 338.5h2v2h-2zM866.5 319.5h1.5v1.5h-1.5zM891.5 316h1.5v1.5h-1.5zM911 330.5h1.5v1.5h-1.5zM891 364.5h2v2h-2zM860 359h1.5v1.5h-1.5zM856.5 323h2v2h-2zM852.5 319h2v2h-2zM923.5 368h1.5v1.5h-1.5zM889 302h1.5v1.5h-1.5zM886 380h2v2h-2zM861.5 334.5h1.5v1.5h-1.5zM920.5 333h2v2h-2zM918.5 389.5h2v2h-2zM917 330.5h2v2h-2zM887.5 365h1.5v1.5h-1.5zM930.5 358.5h2v2h-2zM851.5 334.5h1.5v1.5h-1.5zM887.5 384.5h2v2h-2zM933 312.5h2v2h-2zM878 386h1.5v1.5h-1.5zM934 302.5h2v2h-2zM913.5 320h2v2h-2zM874.5 382.5h1.5v1.5h-1.5zM875.5 324h2v2h-2zM855 383.5h1.5v1.5h-1.5zM857 362h1.5v1.5h-1.5zM915.5 378.5h1.5v1.5h-1.5zM873.5 318.5h2v2h-2zM910.5 378h1.5v1.5h-1.5zM876 342.5h1.5v1.5h-1.5zM913.5 330h1.5v1.5h-1.5zM864.5 352.5h1.5v1.5h-1.5zM849 329.5h2v2h-2zM921 354.5h1.5v1.5h-1.5zM881.5 314.5h2v2h-2zM901.5 353.5h1.5v1.5h-1.5zM904 322.5h2v2h-2zM908 315.5h2v2h-2zM918 339.5h1.5v1.5h-1.5zM859.5 350h1.5v1.5h-1.5zM898 348h2v2h-2zM872 334.5h1.5v1.5h-1.5zM876 311.5h2v2h-2zM926.5 340h1.5v1.5h-1.5zM906.5 317.5h2v2h-2zM913.5 353.5h2v2h-2zM911.5 361.5h1.5v1.5h-1.5zM920 353h2v2h-2zM855 309h2v2h-2zM850 379.5h1.5v1.5h-1.5zM924 357.5h2v2h-2zM860.5 324h2v2h-2zM921.5 341.5h1.5v1.5h-1.5zM927.5 328.5h2v2h-2zM867.5 363h2v2h-2zM903 350.5h2v2h-2zM858.5 383.5h2v2h-2zM904.5 351.5h2v2h-2zM913 312h1.5v1.5h-1.5zM863 388h1.5v1.5h-1.5zM895 334.5h1.5v1.5h-1.5zM897 368h2v2h-2zM890 339.5h1.5v1.5h-1.5zM907.5 326.5h2v2h-2zM877 366h2v2h-2zM924.5 303h2v2h-2zM877 345h1.5v1.5h-1.5zM906.5 337h2v2h-2zM927 337h2v2h-2zM858 390h1.5v1.5h-1.5zM848.5 357.5h2v2h-2zM907.5 366h1.5v1.5h-1.5zM855.5 365.5h1.5v1.5h-1.5zM927.5 358.5h2v2h-2zM926.5 321.5h2v2h-2zM882 345.5h1.5v1.5h-1.5zM882.5 356.5h1.5v1.5h-1.5zM885.5 379.5h2v2h-2zM918.5 346.5h2v2h-2zM867.5 389h1.5v1.5h-1.5zM930 377h2v2h-2zM923 351.5h2v2h-2zM874 313h2v2h-2zM909 348h2v2h-2zM855 312.5h1.5v1.5h-1.5zM906.5 341h2v2h-2zM859 330.5h2v2h-2zM926.5 376h2v2h-2zM849.5 342h1.5v1.5h-1.5zM929.5 324h2v2h-2zM893 341.5h2v2h-2zM857.5 340h1.5v1.5h-1.5zM884 321.5h1.5v1.5h-1.5zM921.5 307.5h2v2h-2zM849 327h1.5v1.5h-1.5zM881 320h2v2h-2zM907.5 387.5h1.5v1.5h-1.5zM896.5 337h1.5v1.5h-1.5zM900.5 318.5h1.5v1.5h-1.5zM856 320h1.5v1.5h-1.5zM929 323.5h1.5v1.5h-1.5zM914.5 322h2v2h-2zM879 366h1.5v1.5h-1.5zM914 348.5h1.5v1.5h-1.5zM884 342.5h2v2h-2zM909 378h2v2h-2zM875.5 312h1.5v1.5h-1.5zM889 316h1.5v1.5h-1.5zM922 386.5h1.5v1.5h-1.5zM926.5 358.5h2v2h-2zM886 323h1.5v1.5h-1.5zM893.5 309h2v2h-2zM867 354h2v2h-2zM862 304.5h2v2h-2zM900 329.5h2v2h-2zM889.5 329.5h2v2h-2zM850.5 363.5h1.5v1.5h-1.5zM892 316.5h2v2h-2zM934 382h1.5v1.5h-1.5zM871 373h2v2h-2zM848 356.5h1.5v1.5h-1.5zM852 386h2v2h-2zM847 370.5h1.5v1.5h-1.5zM889.5 317h1.5v1.5h-1.5zM925.5 344.5h1.5v1.5h-1.5zM886.5 350.5h2v2h-2zM929.5 334h1.5v1.5h-1.5zM849 307.5h1.5v1.5h-1.5zM854 334h1.5v1.5h-1.5zM927 329.5h2v2h-2zM910.5 365.5h1.5v1.5h-1.5zM865 311h1.5v1.5h-1.5zM874.5 369.5h1.5v1.5h-1.5zM902 349.5h2v2h-2zM892.5 387.5h1.5v1.5h-1.5zM891 352h2v2h-2zM915.5 352.5h1.5v1.5h-1.5zM927 307h1.5v1.5h-1.5zM907 384h1.5v1.5h-1.5zM871.5 333.5h1.5v1.5h-1.5zM855.5 379.5h2v2h-2zM886.5 348.5h2v2h-2zM871 381.5h1.5v1.5h-1.5zM920.5 351h2v2h-2zM927.5 312.5h1.5v1.5h-1.5zM898.5 344.5h2v2h-2zM893 363.5h2v2h-2zM853 388h1.5v1.5h-1.5zM907 372.5h1.5v1.5h-1.5zM886 383h1.5v1.5h-1.5zM876.5 310h2v2h-2zM904.5 368.5h1.5v1.5h-1.5zM918 313h1.5v1.5h-1.5zM908.5 385h2v2h-2zM911 334.5h1.5v1.5h-1.5zM930 386h2v2h-2zM925.5 381h1.5v1.5h-1.5zM913 330h2v2h-2zM906 310.5h2v2h-2zM895 306.5h1.5v1.5h-1.5zM933 308h1.5v1.5h-1.5zM854.5 312h2v2h-2zM875 390h1.5v1.5h-1.5zM901 307.5h2v2h-2zM866.5 362.5h2v2h-2zM890.5 376h1.5v1.5h-1.5zM866.5 342h1.5v1.5h-1.5zM874 351.5h2v2h-2zM934.5 365.5h1.5v2h-1.5zM900.5 369h1.5v1.5h-1.5zM933.5 371.5h2v2h-2zM882.5 369.5h2v2h-2zM850 352.5h1.5v1.5h-1.5zM926.5 368h2v2h-2zM910 366h2v2h-2zM892.5 369h1.5v1.5h-1.5zM890 325.5h1.5v1.5h-1.5zM854 311.5h1.5v1.5h-1.5zM858.5 375.5h1.5v1.5h-1.5zM874.5 302h1.5v1.5h-1.5zM933.5 384h2v2h-2zM880.5 368.5h2v2h-2zM882 350h2v2h-2zM883.5 338h1.5v1.5h-1.5zM913.5 382.5h1.5v1.5h-1.5zM903 360.5h2v2h-2zM854.5 375h2v2h-2zM898 316.5h1.5v1.5h-1.5zM913.5 324h1.5v1.5h-1.5zM880.5 329.5h2v2h-2zM860 331h2v2h-2zM861 360.5h2v2h-2zM855 352h2v2h-2zM852 334h2v2h-2zM849.5 358.5h2v2h-2zM878.5 321h2v2h-2zM932.5 339h2v2h-2zM872 384h1.5v1.5h-1.5zM887.5 315h1.5v1.5h-1.5zM921.5 357h1.5v1.5h-1.5zM859 311h2v2h-2zM856 363.5h1.5v1.5h-1.5zM858 304.5h2v2h-2zM919.5 321h2v2h-2zM873 349h2v2h-2zM883.5 375h2v2h-2zM892.5 343.5h1.5v1.5h-1.5zM896 348.5h2v2h-2zM914 342h2v2h-2zM904 347.5h1.5v1.5h-1.5zM913.5 321h2v2h-2zM905 319.5h2v2h-2zM850.5 312h2v2h-2zM902.5 315.5h2v2h-2zM927.5 305.5h2v2h-2zM870.5 305.5h2v2h-2zM906.5 308.5h2v2h-2zM907 351h1.5v1.5h-1.5zM890.5 339h1.5v1.5h-1.5zM851 313.5h1.5v1.5h-1.5zM896.5 310.5h1.5v1.5h-1.5zM884 372h2v2h-2zM884.5 330.5h1.5v1.5h-1.5zM853.5 325h2v2h-2zM890.5 367.5h1.5v1.5h-1.5zM891 336.5h2v2h-2zM922 382h1.5v1.5h-1.5zM881 364h2v2h-2zM912 368.5h1.5v1.5h-1.5zM920 383h2v2h-2zM864.5 319h1.5v1.5h-1.5zM869 308h1.5v1.5h-1.5zM930.5 342h2v2h-2zM886.5 312h2v2h-2zM850 383.5h2v2h-2zM875 375h2v2h-2zM902.5 313h1.5v1.5h-1.5zM873 348.5h2v2h-2zM931 339h1.5v1.5h-1.5zM858.5 377h2v2h-2zM911.5 341.5h1.5v1.5h-1.5zM889.5 301.5h1.5v1.5h-1.5zM908 323h1.5v1.5h-1.5zM878 339.5h2v2h-2zM884.5 448h2v2h-2zM871.5 403.5h2v2h-2zM849 393.5h2v2h-2zM910.5 444.5h2v2h-2zM849.5 403.5h2v2h-2zM867.5 445h2v2h-2zM904.5 437h1.5v1.5h-1.5zM915.5 441.5h2v2h-2zM887 452h2v2h-2zM879.5 454.5h2v2h-2zM878 419h1.5v1.5h-1.5zM865.5 418.5h1.5v1.5h-1.5zM854 456h1.5v1.5h-1.5zM858.5 451.5h1.5v1.5h-1.5zM867.5 422h1.5v1.5h-1.5zM892.5 403h1.5v1.5h-1.5zM853 392.5h2v2h-2zM861.5 442.5h2v2h-2zM871.5 399h2v2h-2zM899 425h2v2h-2zM892 408.5h2v2h-2zM885 454h1.5v1.5h-1.5zM880 438h2v2h-2zM921.5 416.5h1.5v1.5h-1.5zM854.5 401.5h2v2h-2zM914 412h2v2h-2zM867 451.5h2v2h-2zM902.5 398.5h2v2h-2zM847 435h2v2h-2zM884.5 449h1.5v1.5h-1.5zM898 449.5h1.5v1.5h-1.5zM881.5 408.5h2v2h-2zM885.5 442h2v2h-2zM922 426h1.5v1.5h-1.5zM884 418h1.5v1.5h-1.5zM914 394.5h2v2h-2zM857.5 397h1.5v1.5h-1.5zM886 403.5h2v2h-2zM880 417.5h2v2h-2zM887.5 451h2v2h-2zM886.5 413h2v2h-2zM901.5 422.5h1.5v1.5h-1.5zM846.5 403h1.5v1.5h-1.5zM903.5 434.5h1.5v1.5h-1.5zM856.5 439.5h2v2h-2zM867 412h1.5v1.5h-1.5zM863 451h1.5v1.5h-1.5zM886.5 434.5h1.5v1.5h-1.5zM899 406h1.5v1.5h-1.5zM888 458.5h1.5v1.5h-1.5zM913 422h2v2h-2zM853 417.5h1.5v1.5h-1.5zM861.5 397h2v2h-2zM918.5 398h2v2h-2zM911 458h2v2h-2zM907 420.5h2v2h-2zM894 436.5h1.5v1.5h-1.5zM865 458.5h1.5v1.5h-1.5zM895.5 448.5h1.5v1.5h-1.5zM896 393h2v2h-2zM858.5 410h2v2h-2zM891 394.5h1.5v1.5h-1.5zM905 418.5h2v2h-2zM908.5 399h1.5v1.5h-1.5zM857 393.5h2v2h-2zM882.5 457.5h1.5v1.5h-1.5zM892 451h1.5v1.5h-1.5zM861.5 425h1.5v1.5h-1.5zM914.5 433h1.5v1.5h-1.5zM862.5 433h2v2h-2zM851 403h2v2h-2zM890 414.5h2v2h-2zM897 399h2v2h-2zM922 399.5h1.5v1.5h-1.5zM875.5 408h2v2h-2zM866.5 440h1.5v1.5h-1.5zM881 452h2v2h-2zM904 393.5h1.5v1.5h-1.5zM868 393.5h2v2h-2zM897 421.5h2v2h-2zM858.5 452h1.5v1.5h-1.5zM868.5 421.5h2v2h-2zM883 424h1.5v1.5h-1.5zM875 434h2v2h-2zM858 413h2v2h-2zM913 455h1.5v1.5h-1.5zM907 412.5h2v2h-2zM868 398h1.5v1.5h-1.5zM901 443.5h1.5v1.5h-1.5zM917 425.5h1.5v1.5h-1.5zM896.5 434h2v2h-2zM870 413h2v2h-2zM897.5 452.5h2v2h-2zM852.5 398h2v2h-2zM868.5 419h1.5v1.5h-1.5zM877 433h2v2h-2zM880.5 443.5h1.5v1.5h-1.5zM879 417.5h1.5v1.5h-1.5zM848.5 438.5h2v2h-2zM902 402.5h2v2h-2zM894.5 438.5h1.5v1.5h-1.5zM853.5 426h1.5v1.5h-1.5zM898.5 423h1.5v1.5h-1.5zM883 450h1.5v1.5h-1.5zM916.5 446.5h1.5v1.5h-1.5zM899 429.5h2v2h-2zM922.5 431.5h1.5v1.5h-1.5zM856 453h1.5v1.5h-1.5zM883.5 411.5h2v2h-2zM904 444.5h1.5v1.5h-1.5zM899.5 446.5h2v2h-2zM856.5 427.5h1.5v1.5h-1.5zM888.5 415.5h1.5v1.5h-1.5zM915.5 452.5h1.5v1.5h-1.5zM858 456.5h1.5v1.5h-1.5zM888 402h1.5v1.5h-1.5zM873.5 454h2v2h-2zM877.5 455h1.5v1.5h-1.5zM901.5 408.5h1.5v1.5h-1.5zM915 443.5h1.5v1.5h-1.5zM904.5 430h1.5v1.5h-1.5zM873.5 392.5h2v2h-2zM877 438.5h1.5v1.5h-1.5zM894.5 440h1.5v1.5h-1.5zM897 421h2v2h-2zM849 407.5h1.5v1.5h-1.5zM875.5 444h2v2h-2zM888 435h2v2h-2zM922 454h1.5v1.5h-1.5zM846 421h1.5v1.5h-1.5zM860.5 443.5h2v2h-2zM876.5 438h2v2h-2zM882.5 455h2v2h-2zM894 430h2v2h-2zM889 446h2v2h-2zM902 426h2v2h-2zM865.5 438.5h1.5v1.5h-1.5zM920 404h1.5v1.5h-1.5zM869.5 400h1.5v1.5h-1.5zM893 438.5h1.5v1.5h-1.5zM919.5 392h2v2h-2zM905.5 417.5h2v2h-2zM883 408h2v2h-2zM909.5 457.5h2v2h-2zM888 413.5h2v2h-2zM914 412h2v2h-2zM886 394h1.5v1.5h-1.5zM906.5 453.5h2v2h-2zM863 467.5h2v2h-2zM851 465.5h1.5v1.5h-1.5zM852 462.5h1.5v1.5h-1.5zM861.5 461.5h2v2h-2zM848.5 472.5h2v2h-2zM850.5 470h1.5v1.5h-1.5zM927 434h2v2h-2zM931.5 428h2v2h-2zM927.5 428h2v2h-2zM930 433.5h2v2h-2zM929 412h2v2h-2zM928 432h2v2h-2zM933 430.5h1.5v1.5h-1.5zM931 434.5h2v2h-2zM928.5 413h2v2h-2zM932.5 424.5h2v2h-2zM928.5 414h2v2h-2zM927.5 413h2v2h-2zM932 414.5h1.5v1.5h-1.5zM928.5 429.5h2v2h-2zM933.5 432.5h1.5v2h-1.5zM929 416.5h2v2h-2zM931 422.5h1.5v1.5h-1.5zM927 418.5h1.5v1.5h-1.5zM932 435.5h2v1.5h-2zM927.5 419.5h2v2h-2zM926.5 478.5h1.5v1.5h-1.5zM898 475h1.5v1.5h-1.5zM925 487h1.5v1.5h-1.5zM901 484.5h2v2h-2zM928.5 472.5h1.5v2h-1.5zM923.5 483.5h2v2h-2zM899.5 477h2v2h-2zM885.5 474h2v2h-2zM928 481.5h1.5v1.5h-1.5zM890 475h1.5v1.5h-1.5zM923 474h1.5v1.5h-1.5zM888 473h2v2h-2zM924.5 477h1.5v1.5h-1.5zM917.5 488.5h2v1.5h-2zM913 486.5h2v2h-2zM902 483h1.5v1.5h-1.5zM910 487.5h1.5v1.5h-1.5zM896.5 481.5h1.5v1.5h-1.5zM916.5 481.5h1.5v1.5h-1.5zM903.5 484.5h1.5v1.5h-1.5zM928 482h1.5v1.5h-1.5zM885.5 483.5h2v2h-2zM916.5 478.5h1.5v1.5h-1.5zM909 487h2v2h-2zM909 495h1.5v1.5h-1.5zM912.5 499.5h2v2h-2zM913 499h1.5v1.5h-1.5zM911 498.5h2v2h-2zM906 492.5h2v2h-2zM916.5 497.5h2v2h-2zM907 498.5h2v2h-2zM920.5 496h1.5v1.5h-1.5zM920 494.5h1.5v1.5h-1.5zM921 493.5h1.5v1.5h-1.5zM916.5 500.5h2v2h-2zM906 499h2v2h-2zM906.5 502h2v2h-2zM922 501h1.5v1.5h-1.5zM906.5 494h2v2h-2zM917 494h2v2h-2zM922 495h2v2h-2zM921 492.5h1.5v1.5h-1.5zM918.5 494h1.5v1.5h-1.5zM847 525.500h4.600v4.600h-4.600zM847 533.500h4.600v4.600h-4.600zM855.3 525.500h4.600v4.600h-4.600zM855.3 533.500h4.600v4.600h-4.600zM863.6 525.500h4.600v4.600h-4.600zM863.6 533.500h4.600v4.600h-4.600zM871.9 525.500h4.600v4.600h-4.600zM871.9 533.500h4.600v4.600h-4.600zM880.2 525.500h4.600v4.600h-4.600zM880.2 533.500h4.600v4.600h-4.600zM888.5 525.500h4.600v4.600h-4.600zM888.5 533.500h4.600v4.600h-4.600zM911.5 534.5h2v2h-2zM909 525.5h2v2h-2zM913 531h2v2h-2zM914.5 529.5h2v2h-2zM911 525.5h1.5v1.5h-1.5zM922 529.5h1.5v1.5h-1.5zM913 527h2v2h-2zM918.5 527h2v2h-2zM906.5 535.5h1.5v1.5h-1.5zM909 536h2v2h-2zM917.5 524.5h1.5v1.5h-1.5zM917.5 525.5h2v2h-2zM903 536h1.5v1.5h-1.5zM904.5 530h2v2h-2zM906 526.5h2v2h-2zM917.5 529h1.5v1.5h-1.5zM916.5 536h1.5v1.5h-1.5zM902.5 536.5h1.5v1.5h-1.5zM908 526h1.5v1.5h-1.5zM908 533h1.5v1.5h-1.5zM908 529.5h2v2h-2zM910.5 533h1.5v1.5h-1.5zM903.5 531h2v2h-2zM910.5 535.5h1.5v1.5h-1.5zM908.5 528.5h2v2h-2zM914 533h1.5v1.5h-1.5zM914.5 532h1.5v1.5h-1.5zM915 533h1.5v1.5h-1.5zM914.5 529.5h1.5v1.5h-1.5zM911.5 529.5h2v2h-2zM910 524h1.5v1.5h-1.5zM917.5 525.5h2v2h-2zM908.5 533h2v2h-2zM921 535.5h1.5v1.5h-1.5zM918.5 524.5h2v2h-2zM918 534h2v2h-2zM910 534.5h1.5v1.5h-1.5zM921.5 533.5h2v2h-2zM922 529.5h1.5v1.5h-1.5zM905 529h1.5v1.5h-1.5zM912 532h2v2h-2zM853.5 559.5h2v2h-2zM858 563.5h2v2h-2zM855.5 554h2v2h-2zM852.5 563.5h2v2h-2zM870 563.5h2v2h-2zM874.5 565.5h2v2h-2zM860 554.5h2v2h-2zM866 565h2v2h-2zM861.5 566.5h2v1.5h-2zM882 562h1.5v1.5h-1.5zM852.5 562.5h2v2h-2z"/><path fill="#e06810" d="M866 280.5h2v2h-2zM858 265h2v1.5h-2zM877.5 247.5h2.5v2.5h-2.5zM855.5 244.5h6.3v1.5h-6.3zM860.5 250h3.6v3.1h-3.6zM873.5 273.5h2.5v1.5h-2.5zM876 250.5h2v2.5h-2zM848.5 282h3.4v1.5h-3.4zM860.5 242.5h2.5v1.5h-2.5zM856.5 276h1.5v2h-1.5zM863 289.5h2v2h-2zM856.5 265h2.5v2.5h-2.5zM857.5 244.5h2v1.5h-2zM891.5 291.5h1.5v2h-1.5zM928 278h4.1v4.4h-4.1zM930 291.5h2v5.3h-2zM919 286.5h3.5v1.5h-3.5zM930.5 290.5h2v2.5h-2zM926.5 285.5h2v2.5h-2zM934 296h2v2h-2zM889 291h1.5v3.7h-1.5zM926.5 281.5h1.5v1.5h-1.5zM906.5 297h1.5v1.5h-1.5zM895.5 298h2.5v2h-2.5zM934.5 290.5h1.5v2.5h-1.5zM913 295h3.8v1h-3.8zM905.5 305h2v2h-2zM922 386.5h6.6v2h-6.6zM899 390.5h2.5v1.5h-2.5zM912.5 301h4.5v2h-4.5zM923 332.5h1.5v2h-1.5zM923 378.5h4.7v1.5h-4.7zM934 320.5h2v2h-2zM890 333h2v2.5h-2zM930 350h2v2.5h-2zM913.5 352h4.7v1h-4.7zM872 354.5h1.5v6.8h-1.5zM876 315h2v2h-2zM905 362h4.7v4.8h-4.7zM847 337.5h6.3v1h-6.3zM896.5 389.5h2v1.5h-2zM863.5 377.5h2v1.5h-2zM889.5 333.5h2.5v2h-2.5zM914 359.5h2v2.5h-2zM922.5 318.5h1.5v2h-1.5zM853 333.5h3v4.6h-3zM899 389h2v2h-2zM879.5 301h1.5v1.5h-1.5zM928.5 300.5h2v2h-2zM886 351.5h2v2.5h-2zM876.5 371h2v2.5h-2zM907 334.5h1v4.2h-1zM854.5 356.5h2v2h-2zM889.5 307h4.7v2h-4.7zM890 353h1v4.6h-1zM885 319.5h2v2h-2zM916 363h3.5v1h-3.5zM848 351.5h2.5v2h-2.5zM904 332.5h1.5v2h-1.5zM876.5 359h1.5v2h-1.5zM927 316.5h3.5v1h-3.5zM931 300.5h5v2h-5zM916.5 388h4.1v2h-4.1zM879.5 312.5h2.5v2h-2.5zM912 357h3v1h-3zM896.5 369.5h2v2h-2zM870 335h5.5v1h-5.5zM912 363.5h2v2.5h-2zM889.5 307h2v2.5h-2zM916 310.5h2v2.5h-2zM850.5 315h6.5v1h-6.5zM920 385h3.2v4h-3.2zM847 313.5h2.5v2.5h-2.5zM909 381h2v1.5h-2zM877.5 335h5.5v1.5h-5.5zM882 382h6.9v2h-6.9zM875 372.5h2v2h-2zM862 385h1.5v2h-1.5zM922.5 306h2v2.5h-2zM870.5 311h6.5v1.5h-6.5zM884.5 342.5h1v6.1h-1zM864 314h3.2v1.5h-3.2zM861 383h5.1v1h-5.1zM881 385.5h3.8v3.4h-3.8zM892 310h4.9v2h-4.9zM917.5 302.5h2v3.9h-2zM925.5 353.5h6v2h-6zM869.5 323.5h6v2h-6zM910.5 303h5.8v1.5h-5.8zM880 361.5h2.5v2.5h-2.5zM929 332h1.5v2.5h-1.5zM858.5 315h6v1h-6zM901.5 388.5h1.5v2.5h-1.5zM900.5 337h1v5.4h-1zM882.5 389h1.5v2.5h-1.5zM876 346h1v4.5h-1zM864 312.5h2v2h-2zM848 382.5h4.4v2h-4.4zM896.5 385.5h1v5.2h-1zM917.5 335h5.1v1.5h-5.1zM921 316.5h2v1.5h-2zM891.5 341h2v2h-2zM882.5 331.5h4.2v5.4h-4.2zM909 372h6.8v1.5h-6.8zM926 300.5h4.8v2h-4.8zM914 352h2.5v2h-2.5zM861 325h1.5v2.5h-1.5zM874 319.5h1.5v1.5h-1.5zM858.5 335h2.5v1.5h-2.5zM855 324.5h4.6v1h-4.6zM901.5 321h1.5v6.8h-1.5zM858.5 304h1.5v2h-1.5zM867.5 359h2v1.5h-2zM931.5 333h3.3v1h-3.3zM855 422h5.9v1.5h-5.9zM878 450h2v5.9h-2zM884.5 415h2.5v2h-2.5zM869 436h2v5.8h-2zM846.5 404.5h2v2h-2zM856.5 447h3.7v1h-3.7zM892.5 399h6.6v2h-6.6zM909 437h6.1v2h-6.1zM908 449.5h1.5v1.5h-1.5zM882 404h1v6.7h-1zM885.5 405h4.8v1.5h-4.8zM883.5 443.5h1.5v6.5h-1.5zM889.5 398.5h2v6.7h-2zM860 439.5h2v2h-2zM894.5 408h2.5v2h-2.5zM852.5 404h1.5v2.5h-1.5zM865 407h2.5v2h-2.5zM878.5 455.5h1v4.5h-1zM875.5 440h3.6v1.5h-3.6zM868 437.5h2.5v2h-2.5zM904 424.5h2v2h-2zM892 451h1.5v4.1h-1.5zM895.5 433h1.5v4.3h-1.5zM856 423.5h5.6v1.5h-5.6zM900.5 393h1.5v2h-1.5zM853 445h1.5v2.5h-1.5zM851.5 398h2v2h-2zM871 450h6.1v2h-6.1zM850.5 454h2.5v1.5h-2.5zM850 403h2.5v2h-2.5zM850 451h5.5v4.9h-5.5zM907 431h2v3.4h-2zM900 404.5h1.5v1.5h-1.5zM919.5 454.5h2.5v2.5h-2.5zM901.5 450h4.6v1.5h-4.6zM866 437h1.5v2h-1.5zM869 457.5h1.5v2.5h-1.5zM914 427.5h2v2h-2zM870.5 413.5h5.5v1h-5.5zM864.5 426h2v1.5h-2zM869 452.5h3.4v3.4h-3.4zM865.5 398.5h4.2v2h-4.2zM899.5 401h1.5v6.7h-1.5zM862 425h5.2v4.6h-5.2zM860.5 446h1.5v2h-1.5zM855 411.5h2v4.6h-2zM919 431h2.5v1.5h-2.5zM902 427.5h3.1v3.7h-3.1zM894 427h3.1v1h-3.1zM853.5 418.5h2v2h-2zM876.5 416.5h2v2.5h-2zM889 454h2v2.5h-2zM915 393.5h1.5v5.2h-1.5zM872.5 448.5h2.5v2.5h-2.5zM850.5 448h2v3.6h-2zM904 424h2v2h-2zM852.5 407h2v2.5h-2zM882.5 426.5h2v2h-2zM870.5 443h3.1v1.5h-3.1zM894 402.5h5.1v4.9h-5.1zM858.5 444.5h2v4.4h-2zM883 399h5.1v1.5h-5.1zM849.5 447.5h6.1v2h-6.1zM869.5 408.5h5v1.5h-5zM862.5 420.5h2v6.1h-2zM863.5 472.5h2.5v2h-2.5zM863.5 473.5h1v2.5h-1zM849 468h1.5v2.5h-1.5zM882 270h10v2h-10z"/><path fill="#e8b830" d="M901.5 284.5h1.5v1.5h-1.5zM913 284h1.5v1.5h-1.5zM922 285h2v2h-2zM885 291h2v2h-2zM886 285h1.5v1.5h-1.5zM902 297h1.5v1.5h-1.5zM885 286h2v2h-2zM921.5 295h2v2h-2zM932 282h1.5v1.5h-1.5zM903.5 294.5h1.5v1.5h-1.5zM905.5 283.5h1.5v1.5h-1.5zM881 325.5h2v2h-2zM886.5 358h1.5v1.5h-1.5zM910.5 337h1.5v1.5h-1.5zM930.5 390h2v2h-2zM898 345h1.5v1.5h-1.5zM926 310.5h2v2h-2zM860 386.5h2v2h-2zM930.5 381.5h1.5v1.5h-1.5zM898 328.5h1.5v1.5h-1.5zM858.5 350h2v2h-2zM932 333.5h1.5v1.5h-1.5zM860 308h2v2h-2zM889.5 330.5h2v2h-2zM901.5 337h2v2h-2zM927 351h2v2h-2zM892 373h1.5v1.5h-1.5zM886 305h1.5v1.5h-1.5zM884 302h1.5v1.5h-1.5zM897 380.5h2v2h-2zM875 335h1.5v1.5h-1.5zM896.5 374h1.5v1.5h-1.5zM870 380h2v2h-2zM868.5 386h2v2h-2zM907 341.5h1.5v1.5h-1.5zM856 353.5h2v2h-2zM921 327.5h2v2h-2zM880.5 368h2v2h-2zM894.5 381h2v2h-2zM864 381.5h1.5v1.5h-1.5zM848 387h2v2h-2zM887.5 378.5h2v2h-2zM894.5 332.5h1.5v1.5h-1.5zM878 325h1.5v1.5h-1.5zM851 314h1.5v1.5h-1.5zM891.5 329h1.5v1.5h-1.5zM869 382h2v2h-2zM864.5 355.5h2v2h-2zM853 304h1.5v1.5h-1.5zM921.5 303.5h1.5v1.5h-1.5zM928.5 317h2v2h-2zM852.5 350h1.5v1.5h-1.5zM867.5 346.5h1.5v1.5h-1.5zM905.5 380.5h1.5v1.5h-1.5zM929 344.5h2v2h-2zM889.5 312h1.5v1.5h-1.5zM920.5 358h2v2h-2zM846.5 366.5h2v2h-2zM934 328h2v2h-2zM910 354.5h1.5v1.5h-1.5zM919 314.5h1.5v1.5h-1.5zM869.5 348h2v2h-2zM881.5 364.5h1.5v1.5h-1.5zM930.5 376.5h2v2h-2zM899 387h2v2h-2zM846.5 376.5h1.5v1.5h-1.5zM856 346.5h1.5v1.5h-1.5zM933 350.5h2v2h-2zM921 337.5h2v2h-2zM856 362h1.5v1.5h-1.5zM860.5 382h2v2h-2zM888 374.5h1.5v1.5h-1.5zM931.5 336h2v2h-2zM866 319.5h2v2h-2zM885 377.5h2v2h-2zM913.5 312h1.5v1.5h-1.5zM884.5 384h1.5v1.5h-1.5zM884 319.5h2v2h-2zM927 332h2v2h-2zM858 356h2v2h-2zM918 384.5h1.5v1.5h-1.5zM914.5 345h1.5v1.5h-1.5zM906 371h1.5v1.5h-1.5zM895.5 308h1.5v1.5h-1.5zM864 373.5h1.5v1.5h-1.5zM859.5 348h1.5v1.5h-1.5zM905.5 338h1.5v1.5h-1.5zM924 337.5h2v2h-2zM853 396h2v2h-2zM904.5 434.5h2v2h-2zM889 430h2v2h-2zM849 412.5h1.5v1.5h-1.5zM902 400h1.5v1.5h-1.5zM919 441.5h2v2h-2zM882 413.5h1.5v1.5h-1.5zM919.5 408h1.5v1.5h-1.5zM919 456.5h2v2h-2zM902.5 439.5h1.5v1.5h-1.5zM859.5 397.5h1.5v1.5h-1.5zM858.5 431h1.5v1.5h-1.5zM899.5 449h1.5v1.5h-1.5zM908.5 408h2v2h-2zM847 394.5h2v2h-2zM887.5 400.5h1.5v1.5h-1.5zM862 394.5h2v2h-2zM864 456h1.5v1.5h-1.5zM887 448h2v2h-2zM858 416h2v2h-2zM887 397h2v2h-2zM896 425.5h1.5v1.5h-1.5zM851 439h2v2h-2zM917 407h2v2h-2zM900.5 395h2v2h-2zM858.5 411h1.5v1.5h-1.5zM856.5 437h1.5v1.5h-1.5zM856 405h2v2h-2zM856.5 429.5h2v2h-2zM896 411.5h2v2h-2zM858 407h1.5v1.5h-1.5zM899 421.5h2v2h-2zM868.5 413h1.5v1.5h-1.5zM892 406h1.5v1.5h-1.5zM896 393.5h2v2h-2zM881.5 440.5h1.5v1.5h-1.5zM914 409h1.5v1.5h-1.5zM909 436h1.5v1.5h-1.5zM865 412.5h2v2h-2zM896 443.5h1.5v1.5h-1.5zM878 451.5h1.5v1.5h-1.5zM887 394.5h2v2h-2zM850.5 411.5h2v2h-2zM897.5 425h2v2h-2zM918 419h1.5v1.5h-1.5zM919.5 410.5h1.5v1.5h-1.5zM889.5 405h1.5v1.5h-1.5zM922.5 399h1.5v2h-1.5zM853 402h2v2h-2zM921.5 427h1.5v1.5h-1.5zM896 394.5h1.5v1.5h-1.5zM884.5 447.5h2v2h-2zM888.5 392.5h2v2h-2zM888 413h1.5v1.5h-1.5zM846 425.5h1.5v1.5h-1.5zM858 415.5h2v2h-2zM860 474h1.5v1.5h-1.5zM858.5 467h2v2h-2zM852.5 474h2v2h-2zM846.5 473.5h1.5v1.5h-1.5zM888 282h1.6v1.6h-1.6zM888 285.1h1.6v1.6h-1.6zM888 288.1h1.6v1.6h-1.6zM888 291.1h1.6v1.6h-1.6zM888 294.2h1.6v1.6h-1.6zM888 297.2h1.6v1.6h-1.6zM888 300.3h1.6v1.6h-1.6zM888 303.4h1.6v1.6h-1.6zM888 306.4h1.6v1.6h-1.6zM888 312.5h1.6v1.6h-1.6zM888 315.6h1.6v1.6h-1.6zM888 318.6h1.6v1.6h-1.6zM888 321.6h1.6v1.6h-1.6zM888 324.7h1.6v1.6h-1.6zM888 327.8h1.6v1.6h-1.6zM888 330.8h1.6v1.6h-1.6zM888 333.9h1.6v1.6h-1.6zM888 336.9h1.6v1.6h-1.6zM888 339.9h1.6v1.6h-1.6zM888 343h1.6v1.6h-1.6zM888 346.1h1.6v1.6h-1.6zM891 282h1.6v1.6h-1.6zM891 285.1h1.6v1.6h-1.6zM891 288.1h1.6v1.6h-1.6zM891 291.1h1.6v1.6h-1.6zM891 294.2h1.6v1.6h-1.6zM891 297.2h1.6v1.6h-1.6zM891 303.4h1.6v1.6h-1.6zM891 306.4h1.6v1.6h-1.6zM891 309.4h1.6v1.6h-1.6zM891 312.5h1.6v1.6h-1.6zM891 315.6h1.6v1.6h-1.6zM891 318.6h1.6v1.6h-1.6zM891 321.6h1.6v1.6h-1.6zM891 324.7h1.6v1.6h-1.6zM891 327.8h1.6v1.6h-1.6zM891 330.8h1.6v1.6h-1.6zM891 333.9h1.6v1.6h-1.6zM891 336.9h1.6v1.6h-1.6zM891 339.9h1.6v1.6h-1.6zM891 346.1h1.6v1.6h-1.6zM894.1 282h1.6v1.6h-1.6zM894.1 285.1h1.6v1.6h-1.6zM894.1 288.1h1.6v1.6h-1.6zM894.1 291.1h1.6v1.6h-1.6zM894.1 294.2h1.6v1.6h-1.6zM894.1 297.2h1.6v1.6h-1.6zM894.1 303.4h1.6v1.6h-1.6zM894.1 306.4h1.6v1.6h-1.6zM894.1 312.5h1.6v1.6h-1.6zM894.1 315.6h1.6v1.6h-1.6zM894.1 318.6h1.6v1.6h-1.6zM894.1 321.6h1.6v1.6h-1.6zM894.1 327.8h1.6v1.6h-1.6zM894.1 330.8h1.6v1.6h-1.6zM894.1 333.9h1.6v1.6h-1.6zM894.1 336.9h1.6v1.6h-1.6zM894.1 339.9h1.6v1.6h-1.6zM894.1 343h1.6v1.6h-1.6zM894.1 346.1h1.6v1.6h-1.6zM897.1 282h1.6v1.6h-1.6zM897.1 285.1h1.6v1.6h-1.6zM897.1 288.1h1.6v1.6h-1.6zM897.1 291.1h1.6v1.6h-1.6zM897.1 294.2h1.6v1.6h-1.6zM897.1 297.2h1.6v1.6h-1.6zM897.1 300.3h1.6v1.6h-1.6zM897.1 303.4h1.6v1.6h-1.6zM897.1 306.4h1.6v1.6h-1.6zM897.1 309.4h1.6v1.6h-1.6zM897.1 312.5h1.6v1.6h-1.6zM897.1 315.6h1.6v1.6h-1.6zM897.1 318.6h1.6v1.6h-1.6zM897.1 321.6h1.6v1.6h-1.6zM897.1 324.7h1.6v1.6h-1.6zM897.1 327.8h1.6v1.6h-1.6zM897.1 330.8h1.6v1.6h-1.6zM897.1 333.9h1.6v1.6h-1.6zM897.1 339.9h1.6v1.6h-1.6zM897.1 346.1h1.6v1.6h-1.6zM900.2 282h1.6v1.6h-1.6zM900.2 285.1h1.6v1.6h-1.6zM900.2 288.1h1.6v1.6h-1.6zM900.2 291.1h1.6v1.6h-1.6zM900.2 297.2h1.6v1.6h-1.6zM900.2 300.3h1.6v1.6h-1.6zM900.2 303.4h1.6v1.6h-1.6zM900.2 306.4h1.6v1.6h-1.6zM900.2 309.4h1.6v1.6h-1.6zM900.2 312.5h1.6v1.6h-1.6zM900.2 315.6h1.6v1.6h-1.6zM900.2 318.6h1.6v1.6h-1.6zM900.2 321.6h1.6v1.6h-1.6zM900.2 324.7h1.6v1.6h-1.6zM900.2 327.8h1.6v1.6h-1.6zM900.2 330.8h1.6v1.6h-1.6zM900.2 333.9h1.6v1.6h-1.6zM900.2 336.9h1.6v1.6h-1.6zM900.2 339.9h1.6v1.6h-1.6zM900.2 346.1h1.6v1.6h-1.6zM903.2 282h1.6v1.6h-1.6zM903.2 285.1h1.6v1.6h-1.6zM903.2 288.1h1.6v1.6h-1.6zM903.2 294.2h1.6v1.6h-1.6zM903.2 297.2h1.6v1.6h-1.6zM903.2 300.3h1.6v1.6h-1.6zM903.2 303.4h1.6v1.6h-1.6zM903.2 306.4h1.6v1.6h-1.6zM903.2 309.4h1.6v1.6h-1.6zM903.2 312.5h1.6v1.6h-1.6zM903.2 315.6h1.6v1.6h-1.6zM903.2 318.6h1.6v1.6h-1.6zM903.2 321.6h1.6v1.6h-1.6zM903.2 324.7h1.6v1.6h-1.6zM903.2 327.8h1.6v1.6h-1.6zM903.2 333.9h1.6v1.6h-1.6zM903.2 336.9h1.6v1.6h-1.6zM903.2 339.9h1.6v1.6h-1.6zM903.2 343h1.6v1.6h-1.6zM906.3 282h1.6v1.6h-1.6zM906.3 285.1h1.6v1.6h-1.6zM906.3 288.1h1.6v1.6h-1.6zM906.3 291.1h1.6v1.6h-1.6zM906.3 294.2h1.6v1.6h-1.6zM906.3 297.2h1.6v1.6h-1.6zM906.3 300.3h1.6v1.6h-1.6zM906.3 321.6h1.6v1.6h-1.6zM906.3 324.7h1.6v1.6h-1.6zM906.3 327.8h1.6v1.6h-1.6zM906.3 330.8h1.6v1.6h-1.6zM906.3 333.9h1.6v1.6h-1.6zM906.3 336.9h1.6v1.6h-1.6zM906.3 339.9h1.6v1.6h-1.6zM906.3 343h1.6v1.6h-1.6zM906.3 346.1h1.6v1.6h-1.6zM909.4 282h1.6v1.6h-1.6zM909.4 285.1h1.6v1.6h-1.6zM909.4 288.1h1.6v1.6h-1.6zM909.4 291.1h1.6v1.6h-1.6zM909.4 294.2h1.6v1.6h-1.6zM909.4 297.2h1.6v1.6h-1.6zM909.4 300.3h1.6v1.6h-1.6zM909.4 321.6h1.6v1.6h-1.6zM909.4 324.7h1.6v1.6h-1.6zM909.4 327.8h1.6v1.6h-1.6zM909.4 330.8h1.6v1.6h-1.6zM909.4 333.9h1.6v1.6h-1.6zM909.4 336.9h1.6v1.6h-1.6zM909.4 339.9h1.6v1.6h-1.6zM909.4 343h1.6v1.6h-1.6zM912.4 282h1.6v1.6h-1.6zM912.4 285.1h1.6v1.6h-1.6zM912.4 288.1h1.6v1.6h-1.6zM912.4 291.1h1.6v1.6h-1.6zM912.4 294.2h1.6v1.6h-1.6zM912.4 297.2h1.6v1.6h-1.6zM912.4 300.3h1.6v1.6h-1.6zM912.4 321.6h1.6v1.6h-1.6zM912.4 327.8h1.6v1.6h-1.6zM912.4 330.8h1.6v1.6h-1.6zM912.4 333.9h1.6v1.6h-1.6zM912.4 343h1.6v1.6h-1.6zM912.4 346.1h1.6v1.6h-1.6zM915.5 282h1.6v1.6h-1.6zM915.5 285.1h1.6v1.6h-1.6zM915.5 291.1h1.6v1.6h-1.6zM915.5 294.2h1.6v1.6h-1.6zM915.5 297.2h1.6v1.6h-1.6zM915.5 321.6h1.6v1.6h-1.6zM915.5 324.7h1.6v1.6h-1.6zM915.5 330.8h1.6v1.6h-1.6zM915.5 333.9h1.6v1.6h-1.6zM915.5 339.9h1.6v1.6h-1.6zM915.5 343h1.6v1.6h-1.6zM918.5 285.1h1.6v1.6h-1.6zM918.5 288.1h1.6v1.6h-1.6zM918.5 291.1h1.6v1.6h-1.6zM918.5 294.2h1.6v1.6h-1.6zM918.5 297.2h1.6v1.6h-1.6zM918.5 300.3h1.6v1.6h-1.6zM918.5 303.4h1.6v1.6h-1.6zM918.5 306.4h1.6v1.6h-1.6zM918.5 309.4h1.6v1.6h-1.6zM918.5 312.5h1.6v1.6h-1.6zM918.5 315.6h1.6v1.6h-1.6zM918.5 318.6h1.6v1.6h-1.6zM918.5 321.6h1.6v1.6h-1.6zM918.5 324.7h1.6v1.6h-1.6zM918.5 327.8h1.6v1.6h-1.6zM918.5 330.8h1.6v1.6h-1.6zM918.5 333.9h1.6v1.6h-1.6zM918.5 336.9h1.6v1.6h-1.6zM918.5 339.9h1.6v1.6h-1.6zM918.5 343h1.6v1.6h-1.6zM918.5 346.1h1.6v1.6h-1.6zM921.5 282h1.6v1.6h-1.6zM921.5 285.1h1.6v1.6h-1.6zM921.5 288.1h1.6v1.6h-1.6zM921.5 291.1h1.6v1.6h-1.6zM921.5 294.2h1.6v1.6h-1.6zM921.5 297.2h1.6v1.6h-1.6zM921.5 300.3h1.6v1.6h-1.6zM921.5 303.4h1.6v1.6h-1.6zM921.5 309.4h1.6v1.6h-1.6zM921.5 312.5h1.6v1.6h-1.6zM921.5 315.6h1.6v1.6h-1.6zM921.5 318.6h1.6v1.6h-1.6zM921.5 321.6h1.6v1.6h-1.6zM921.5 324.7h1.6v1.6h-1.6zM921.5 327.8h1.6v1.6h-1.6zM921.5 330.8h1.6v1.6h-1.6zM921.5 333.9h1.6v1.6h-1.6zM921.5 339.9h1.6v1.6h-1.6zM921.5 343h1.6v1.6h-1.6zM921.5 346.1h1.6v1.6h-1.6zM924.6 285.1h1.6v1.6h-1.6zM924.6 288.1h1.6v1.6h-1.6zM924.6 291.1h1.6v1.6h-1.6zM924.6 294.2h1.6v1.6h-1.6zM924.6 300.3h1.6v1.6h-1.6zM924.6 303.4h1.6v1.6h-1.6zM924.6 306.4h1.6v1.6h-1.6zM924.6 309.4h1.6v1.6h-1.6zM924.6 312.5h1.6v1.6h-1.6zM924.6 321.6h1.6v1.6h-1.6zM924.6 324.7h1.6v1.6h-1.6zM924.6 330.8h1.6v1.6h-1.6zM924.6 336.9h1.6v1.6h-1.6zM924.6 339.9h1.6v1.6h-1.6zM924.6 343h1.6v1.6h-1.6zM924.6 346.1h1.6v1.6h-1.6zM927.6 282h1.6v1.6h-1.6zM927.6 285.1h1.6v1.6h-1.6zM927.6 288.1h1.6v1.6h-1.6zM927.6 291.1h1.6v1.6h-1.6zM927.6 294.2h1.6v1.6h-1.6zM927.6 297.2h1.6v1.6h-1.6zM927.6 300.3h1.6v1.6h-1.6zM927.6 303.4h1.6v1.6h-1.6zM927.6 306.4h1.6v1.6h-1.6zM927.6 309.4h1.6v1.6h-1.6zM927.6 312.5h1.6v1.6h-1.6zM927.6 315.6h1.6v1.6h-1.6zM927.6 318.6h1.6v1.6h-1.6zM927.6 321.6h1.6v1.6h-1.6zM927.6 324.7h1.6v1.6h-1.6zM927.6 327.8h1.6v1.6h-1.6zM927.6 330.8h1.6v1.6h-1.6zM927.6 333.9h1.6v1.6h-1.6zM927.6 336.9h1.6v1.6h-1.6zM927.6 343h1.6v1.6h-1.6zM927.6 346.1h1.6v1.6h-1.6zM930.7 282h1.6v1.6h-1.6zM930.7 285.1h1.6v1.6h-1.6zM930.7 288.1h1.6v1.6h-1.6zM930.7 291.1h1.6v1.6h-1.6zM930.7 294.2h1.6v1.6h-1.6zM930.7 297.2h1.6v1.6h-1.6zM930.7 300.3h1.6v1.6h-1.6zM930.7 303.4h1.6v1.6h-1.6zM930.7 306.4h1.6v1.6h-1.6zM930.7 309.4h1.6v1.6h-1.6zM930.7 312.5h1.6v1.6h-1.6zM930.7 315.6h1.6v1.6h-1.6zM930.7 318.6h1.6v1.6h-1.6zM930.7 321.6h1.6v1.6h-1.6zM930.7 324.7h1.6v1.6h-1.6zM930.7 327.8h1.6v1.6h-1.6zM930.7 330.8h1.6v1.6h-1.6zM930.7 336.9h1.6v1.6h-1.6zM930.7 339.9h1.6v1.6h-1.6zM930.7 343h1.6v1.6h-1.6zM930.7 346.1h1.6v1.6h-1.6zM933.8 282h1.6v1.6h-1.6zM933.8 285.1h1.6v1.6h-1.6zM933.8 288.1h1.6v1.6h-1.6zM933.8 291.1h1.6v1.6h-1.6zM933.8 294.2h1.6v1.6h-1.6zM933.8 297.2h1.6v1.6h-1.6zM933.8 303.4h1.6v1.6h-1.6zM933.8 306.4h1.6v1.6h-1.6zM933.8 309.4h1.6v1.6h-1.6zM933.8 312.5h1.6v1.6h-1.6zM933.8 315.6h1.6v1.6h-1.6zM933.8 318.6h1.6v1.6h-1.6zM933.8 321.6h1.6v1.6h-1.6zM933.8 324.7h1.6v1.6h-1.6zM933.8 327.8h1.6v1.6h-1.6zM933.8 330.8h1.6v1.6h-1.6zM933.8 333.9h1.6v1.6h-1.6zM933.8 336.9h1.6v1.6h-1.6zM933.8 339.9h1.6v1.6h-1.6zM933.8 343h1.6v1.6h-1.6zM933.8 346.1h1.6v1.6h-1.6zM886 398h1.6v1.6h-1.6zM886 401.1h1.6v1.6h-1.6zM886 404.1h1.6v1.6h-1.6zM886 410.2h1.6v1.6h-1.6zM886 413.2h1.6v1.6h-1.6zM886 416.3h1.6v1.6h-1.6zM886 419.4h1.6v1.6h-1.6zM886 422.4h1.6v1.6h-1.6zM886 425.4h1.6v1.6h-1.6zM886 428.5h1.6v1.6h-1.6zM886 431.6h1.6v1.6h-1.6zM886 434.6h1.6v1.6h-1.6zM886 437.6h1.6v1.6h-1.6zM886 440.7h1.6v1.6h-1.6zM886 443.8h1.6v1.6h-1.6zM886 449.9h1.6v1.6h-1.6zM886 452.9h1.6v1.6h-1.6zM889 398h1.6v1.6h-1.6zM889 401.1h1.6v1.6h-1.6zM889 404.1h1.6v1.6h-1.6zM889 407.1h1.6v1.6h-1.6zM889 410.2h1.6v1.6h-1.6zM889 416.3h1.6v1.6h-1.6zM889 422.4h1.6v1.6h-1.6zM889 425.4h1.6v1.6h-1.6zM889 434.6h1.6v1.6h-1.6zM889 440.7h1.6v1.6h-1.6zM889 443.8h1.6v1.6h-1.6zM889 449.9h1.6v1.6h-1.6zM889 452.9h1.6v1.6h-1.6zM889 455.9h1.6v1.6h-1.6zM892.1 398h1.6v1.6h-1.6zM892.1 401.1h1.6v1.6h-1.6zM892.1 404.1h1.6v1.6h-1.6zM892.1 407.1h1.6v1.6h-1.6zM892.1 410.2h1.6v1.6h-1.6zM892.1 413.2h1.6v1.6h-1.6zM892.1 419.4h1.6v1.6h-1.6zM892.1 422.4h1.6v1.6h-1.6zM892.1 425.4h1.6v1.6h-1.6zM892.1 428.5h1.6v1.6h-1.6zM892.1 431.6h1.6v1.6h-1.6zM892.1 434.6h1.6v1.6h-1.6zM892.1 437.6h1.6v1.6h-1.6zM892.1 440.7h1.6v1.6h-1.6zM892.1 443.8h1.6v1.6h-1.6zM892.1 446.8h1.6v1.6h-1.6zM892.1 449.9h1.6v1.6h-1.6zM892.1 452.9h1.6v1.6h-1.6zM892.1 455.9h1.6v1.6h-1.6zM895.1 398h1.6v1.6h-1.6zM895.1 401.1h1.6v1.6h-1.6zM895.1 404.1h1.6v1.6h-1.6zM895.1 407.1h1.6v1.6h-1.6zM895.1 410.2h1.6v1.6h-1.6zM895.1 413.2h1.6v1.6h-1.6zM895.1 416.3h1.6v1.6h-1.6zM895.1 419.4h1.6v1.6h-1.6zM895.1 422.4h1.6v1.6h-1.6zM895.1 425.4h1.6v1.6h-1.6zM895.1 428.5h1.6v1.6h-1.6zM895.1 431.6h1.6v1.6h-1.6zM895.1 434.6h1.6v1.6h-1.6zM895.1 437.6h1.6v1.6h-1.6zM895.1 440.7h1.6v1.6h-1.6zM895.1 443.8h1.6v1.6h-1.6zM895.1 446.8h1.6v1.6h-1.6zM895.1 449.9h1.6v1.6h-1.6zM895.1 452.9h1.6v1.6h-1.6zM898.2 398h1.6v1.6h-1.6zM898.2 401.1h1.6v1.6h-1.6zM898.2 404.1h1.6v1.6h-1.6zM898.2 407.1h1.6v1.6h-1.6zM898.2 410.2h1.6v1.6h-1.6zM898.2 413.2h1.6v1.6h-1.6zM898.2 416.3h1.6v1.6h-1.6zM898.2 419.4h1.6v1.6h-1.6zM898.2 434.6h1.6v1.6h-1.6zM898.2 437.6h1.6v1.6h-1.6zM898.2 440.7h1.6v1.6h-1.6zM898.2 443.8h1.6v1.6h-1.6zM898.2 446.8h1.6v1.6h-1.6zM898.2 449.9h1.6v1.6h-1.6zM898.2 452.9h1.6v1.6h-1.6zM898.2 455.9h1.6v1.6h-1.6zM901.2 398h1.6v1.6h-1.6zM901.2 401.1h1.6v1.6h-1.6zM901.2 404.1h1.6v1.6h-1.6zM901.2 407.1h1.6v1.6h-1.6zM901.2 410.2h1.6v1.6h-1.6zM901.2 413.2h1.6v1.6h-1.6zM901.2 416.3h1.6v1.6h-1.6zM901.2 419.4h1.6v1.6h-1.6zM901.2 434.6h1.6v1.6h-1.6zM901.2 437.6h1.6v1.6h-1.6zM901.2 440.7h1.6v1.6h-1.6zM901.2 443.8h1.6v1.6h-1.6zM901.2 446.8h1.6v1.6h-1.6zM901.2 449.9h1.6v1.6h-1.6zM901.2 452.9h1.6v1.6h-1.6zM901.2 455.9h1.6v1.6h-1.6zM904.3 398h1.6v1.6h-1.6zM904.3 401.1h1.6v1.6h-1.6zM904.3 404.1h1.6v1.6h-1.6zM904.3 410.2h1.6v1.6h-1.6zM904.3 416.3h1.6v1.6h-1.6zM904.3 434.6h1.6v1.6h-1.6zM904.3 437.6h1.6v1.6h-1.6zM904.3 440.7h1.6v1.6h-1.6zM904.3 443.8h1.6v1.6h-1.6zM904.3 446.8h1.6v1.6h-1.6zM904.3 449.9h1.6v1.6h-1.6zM904.3 452.9h1.6v1.6h-1.6zM904.3 455.9h1.6v1.6h-1.6zM907.4 398h1.6v1.6h-1.6zM907.4 401.1h1.6v1.6h-1.6zM907.4 407.1h1.6v1.6h-1.6zM907.4 410.2h1.6v1.6h-1.6zM907.4 413.2h1.6v1.6h-1.6zM907.4 416.3h1.6v1.6h-1.6zM907.4 419.4h1.6v1.6h-1.6zM907.4 434.6h1.6v1.6h-1.6zM907.4 437.6h1.6v1.6h-1.6zM907.4 440.7h1.6v1.6h-1.6zM907.4 446.8h1.6v1.6h-1.6zM907.4 449.9h1.6v1.6h-1.6zM907.4 452.9h1.6v1.6h-1.6zM907.4 455.9h1.6v1.6h-1.6zM910.4 398h1.6v1.6h-1.6zM910.4 401.1h1.6v1.6h-1.6zM910.4 404.1h1.6v1.6h-1.6zM910.4 407.1h1.6v1.6h-1.6zM910.4 410.2h1.6v1.6h-1.6zM910.4 413.2h1.6v1.6h-1.6zM910.4 416.3h1.6v1.6h-1.6zM910.4 419.4h1.6v1.6h-1.6zM910.4 434.6h1.6v1.6h-1.6zM910.4 437.6h1.6v1.6h-1.6zM910.4 440.7h1.6v1.6h-1.6zM910.4 443.8h1.6v1.6h-1.6zM910.4 446.8h1.6v1.6h-1.6zM910.4 449.9h1.6v1.6h-1.6zM910.4 452.9h1.6v1.6h-1.6zM910.4 455.9h1.6v1.6h-1.6zM913.5 401.1h1.6v1.6h-1.6zM913.5 404.1h1.6v1.6h-1.6zM913.5 407.1h1.6v1.6h-1.6zM913.5 410.2h1.6v1.6h-1.6zM913.5 413.2h1.6v1.6h-1.6zM913.5 416.3h1.6v1.6h-1.6zM913.5 419.4h1.6v1.6h-1.6zM913.5 428.5h1.6v1.6h-1.6zM913.5 431.6h1.6v1.6h-1.6zM913.5 434.6h1.6v1.6h-1.6zM913.5 437.6h1.6v1.6h-1.6zM913.5 440.7h1.6v1.6h-1.6zM913.5 443.8h1.6v1.6h-1.6zM913.5 446.8h1.6v1.6h-1.6zM913.5 449.9h1.6v1.6h-1.6zM913.5 452.9h1.6v1.6h-1.6zM913.5 455.9h1.6v1.6h-1.6zM916.5 398h1.6v1.6h-1.6zM916.5 401.1h1.6v1.6h-1.6zM916.5 404.1h1.6v1.6h-1.6zM916.5 407.1h1.6v1.6h-1.6zM916.5 410.2h1.6v1.6h-1.6zM916.5 413.2h1.6v1.6h-1.6zM916.5 419.4h1.6v1.6h-1.6zM916.5 425.4h1.6v1.6h-1.6zM916.5 428.5h1.6v1.6h-1.6zM916.5 431.6h1.6v1.6h-1.6zM916.5 434.6h1.6v1.6h-1.6zM916.5 437.6h1.6v1.6h-1.6zM916.5 440.7h1.6v1.6h-1.6zM916.5 443.8h1.6v1.6h-1.6zM916.5 446.8h1.6v1.6h-1.6zM916.5 452.9h1.6v1.6h-1.6zM919.5 401.1h1.6v1.6h-1.6zM919.5 404.1h1.6v1.6h-1.6zM919.5 407.1h1.6v1.6h-1.6zM919.5 410.2h1.6v1.6h-1.6zM919.5 413.2h1.6v1.6h-1.6zM919.5 416.3h1.6v1.6h-1.6zM919.5 419.4h1.6v1.6h-1.6zM919.5 422.4h1.6v1.6h-1.6zM919.5 425.4h1.6v1.6h-1.6zM919.5 428.5h1.6v1.6h-1.6zM919.5 431.6h1.6v1.6h-1.6zM919.5 434.6h1.6v1.6h-1.6zM919.5 437.6h1.6v1.6h-1.6zM919.5 440.7h1.6v1.6h-1.6zM919.5 443.8h1.6v1.6h-1.6zM919.5 446.8h1.6v1.6h-1.6zM919.5 449.9h1.6v1.6h-1.6zM919.5 455.9h1.6v1.6h-1.6zM922.6 401.1h1.6v1.6h-1.6zM922.6 404.1h1.6v1.6h-1.6zM922.6 407.1h1.6v1.6h-1.6zM922.6 410.2h1.6v1.6h-1.6zM922.6 413.2h1.6v1.6h-1.6zM922.6 416.3h1.6v1.6h-1.6zM922.6 419.4h1.6v1.6h-1.6zM922.6 422.4h1.6v1.6h-1.6zM922.6 425.4h1.6v1.6h-1.6zM922.6 428.5h1.6v1.6h-1.6zM922.6 431.6h1.6v1.6h-1.6zM922.6 437.6h1.6v1.6h-1.6zM922.6 440.7h1.6v1.6h-1.6zM922.6 443.8h1.6v1.6h-1.6zM922.6 446.8h1.6v1.6h-1.6zM922.6 449.9h1.6v1.6h-1.6zM922.6 452.9h1.6v1.6h-1.6zM922.6 455.9h1.6v1.6h-1.6zM925 478h1.5v1.5h-1.5zM905.5 478h1.5v1.5h-1.5zM893 483.5h1.5v1.5h-1.5zM901 484h2v2h-2zM901.5 486.5h2v2h-2zM926 484h1.5v1.5h-1.5zM918 475.5h1.5v1.5h-1.5zM908 481h1.5v1.5h-1.5zM916.5 474.5h1.5v1.5h-1.5zM916.5 485h2v2h-2zM899.5 474h2v2h-2zM902 474h2v2h-2zM909 477.5h1.5v1.5h-1.5zM916.5 497h1.5v1.5h-1.5zM904 495h2v2h-2zM923.5 496.5h1.5v2h-1.5zM906.5 492.5h2v2h-2zM900.5 497h1.5v1.5h-1.5zM923 494h2v2h-2zM905 499.5h1.5v1.5h-1.5zM922 495.5h1.5v1.5h-1.5zM914.5 501h2v2h-2zM901 500.5h2v2h-2zM906.5 527.5h2v2h-2zM909 535h2v2h-2zM905 537h1.5v1.5h-1.5zM917 533.5h2v2h-2zM907.5 529.5h1.5v1.5h-1.5zM914 530h2v2h-2zM916 532.5h2v2h-2zM905.5 530.5h1.5v1.5h-1.5zM916.5 525h1.5v1.5h-1.5zM907.5 524h1.5v1.5h-1.5zM903.5 536.5h1.5v1.5h-1.5zM906 530h2v2h-2zM905.5 526h1.5v1.5h-1.5zM905.5 529h2v2h-2zM905.5 528h1.5v1.5h-1.5zM907 527.5h1.5v1.5h-1.5zM902 529h2v2h-2zM909 527h2v2h-2zM912.5 531.5h2v2h-2zM911.5 531.5h1.5v1.5h-1.5zM904.5 532.5h2v2h-2zM905.5 530h1.5v1.5h-1.5z"/><path fill="#3ca028" d="M929 292.5h6.5v1h-6.5zM891 293h1.5v1.5h-1.5zM880.5 294.5h1.5v2h-1.5zM894 279h1.5v3.1h-1.5zM931 287.5h5v1h-5zM898.5 290h1.5v2h-1.5zM895.5 298h2v2h-2zM914 281h2.5v2h-2.5zM916 289h1v6.8h-1zM904 277.5h4.8v1.5h-4.8zM923 346.5h2.5v2h-2.5zM862.5 338h1v5.3h-1zM870.5 330h2.5v1.5h-2.5zM901 382h6.5v1h-6.5zM848.5 307.5h2v3.9h-2zM854.5 382.5h6v1h-6zM897 316h2.5v1.5h-2.5zM866 356.5h1.5v5.2h-1.5zM900.5 365h2v2h-2zM885.5 388h3.4v2h-3.4zM933.5 340h1.5v1.5h-1.5zM884.5 300h2v2h-2zM893.5 319.5h2v2h-2zM873 349.5h1.5v2h-1.5zM882 346h1.5v4.5h-1.5zM934 342h1.5v2h-1.5zM899 383.5h4.3v2h-4.3zM888.5 304h1.5v3.2h-1.5zM882.5 377h4v1.5h-4zM900.5 313h1.5v3.4h-1.5zM929 315h1.5v2h-1.5zM865 385h1.5v1.5h-1.5zM855 345.5h2.5v2h-2.5zM871.5 379h5.4v2h-5.4zM885.5 378.5h4.2v1h-4.2zM889.5 303.5h2.5v1.5h-2.5zM917 356.5h2.5v2h-2.5zM866.5 370.5h2v1.5h-2zM916 385h1.5v2.5h-1.5zM899 389h2v3h-2zM895 336.5h2v2.5h-2zM922.5 383.5h6.2v2h-6.2zM897 387.5h2v2h-2zM923.5 323h2.5v1.5h-2.5zM922 305h1.5v4.4h-1.5zM879 354h2.5v2.5h-2.5zM858.5 303h5.5v1.5h-5.5zM925 301.5h2.5v1.5h-2.5zM892.5 377.5h1.5v1.5h-1.5zM908 347h2.5v2h-2.5zM852 301.5h1v6.6h-1zM903 354h1.5v2h-1.5zM886.5 347h2v2.5h-2zM922.5 311.5h1v4.9h-1zM906 308h1.5v2h-1.5zM856.5 384.5h1v4.8h-1zM874.5 382h1v5.9h-1zM872 310.5h1v4.9h-1zM872 373.5h1v3.9h-1zM873.5 333.5h2v2h-2zM909.5 349.5h2v5.5h-2zM866.5 376h2v4.9h-2zM850 385h6v2h-6zM872 339h3.9v1h-3.9zM862.5 364.5h1.5v2.5h-1.5zM862 368h2.5v2h-2.5zM891.5 350.5h3.4v5.3h-3.4zM912.5 364.5h1v5.9h-1zM898 338.5h1.5v4.2h-1.5zM924 346.5h3.5v1.5h-3.5zM869.5 370.5h6.7v1.5h-6.7zM897.5 364.5h1v5.4h-1zM921.5 333h2v2h-2zM889.5 345h2v1.5h-2zM858.5 324h2v1.5h-2zM912 339h6.8v2h-6.8zM889 355h2v2h-2zM898 320h2v2h-2zM913 364h2v6.8h-2zM916 301h1.5v2h-1.5zM887 388h1.5v4h-1.5zM929 312h1.5v6.2h-1.5zM933.5 384h2v5.3h-2zM880.5 374.5h2v4.8h-2zM867.5 362.5h2v1.5h-2zM932 380h2.5v2h-2.5zM929.5 317.5h2v1.5h-2zM865 381.5h2v2.5h-2zM891 341h1v4.9h-1zM882.5 306h2.5v2.5h-2.5zM886.5 380h6.9v1h-6.9zM852 332.5h2.5v1.5h-2.5zM914.5 361.5h4.5v1h-4.5zM920 342h2v1.5h-2zM894.5 384.5h6.3v2h-6.3zM860.5 365.5h6.2v2h-6.2zM878 359h2v2h-2zM867 379h1v6.1h-1zM884.5 369.5h6.2v1h-6.2zM879.5 324.5h4.2v2h-4.2zM866 322h3.1v1.5h-3.1zM860.5 352h2v3.2h-2zM884.5 442.5h3.3v3.4h-3.3zM893 430.5h1v3.6h-1zM866.5 451.5h1.5v2h-1.5zM882 410.5h5v2h-5zM883 420h2v2h-2zM849.5 394h2.5v2h-2.5zM904 415.5h1.5v2h-1.5zM916 437h2v2h-2zM847.5 438.5h2v2.5h-2zM849.5 446.5h7v1.5h-7zM869 413h2v2h-2zM897.5 414h4.4v3.8h-4.4zM878 416.5h3.3v2h-3.3zM921.5 402h2.5v1h-2.5zM903 440.5h2v2h-2zM921.5 403.5h2.5v5.2h-2.5zM901 403h3.4v1h-3.4zM879 393.5h1.5v3.4h-1.5zM903 416h4v1h-4zM884 397h2v2h-2zM890.5 417.5h2v2h-2zM854 396h3.7v2h-3.7zM866.5 424.5h2v2h-2zM905.5 444h1.5v2h-1.5zM847 400h2.5v2h-2.5zM913.5 442.5h4.5v4.5h-4.5zM860.5 399.5h5.7v2h-5.7zM885.5 431.5h5v2h-5zM915 396.5h4.9v5.4h-4.9zM909 414.5h6.8v1.5h-6.8zM846.5 420.5h2v2h-2zM849.5 401.5h1v6.2h-1zM911 411.5h1.5v2h-1.5zM899.5 417.5h2.5v1.5h-2.5zM861.5 400.5h1v3.9h-1zM850.5 451.5h2v2h-2zM897 408h2v1.5h-2zM917 420h2v6.7h-2zM906 418.5h5.6v1h-5.6zM905.5 409h2v3.7h-2zM875.5 437.5h1.5v2h-1.5zM873 456.5h5.4v2h-5.4zM908 412.5h2v2h-2zM879 409.5h1.5v6.3h-1.5zM917 423.5h2.5v2h-2.5zM860 437h2v4.3h-2zM883 435h2v2h-2zM850 439.5h1.5v2h-1.5zM863.5 424.5h1.5v2h-1.5zM865 458h2v2h-2zM873.5 441.5h2v2h-2zM877 401.5h2v3.9h-2zM902 440.5h5.3v5.2h-5.3zM921 397h2v2.5h-2zM884.5 434.5h2v2h-2zM885 402h5.4v1h-5.4zM884.5 433.5h2v1.5h-2zM878.5 434h2.5v2.5h-2.5zM858.5 434h2.5v2.5h-2.5zM846 468h1v6.8h-1zM850 462h3.6v1h-3.6zM855.5 467.5h2v2h-2zM895 239.500h13v7.500h-13zM876 312h3.500v62h-3.500zM882 322h3v55h-3zM900 361h9v7h-9zM924 366h10v9h-10zM880 369h12v8h-12zM888 470.500h1.500v6h-1.500zM890 501h1.500v9h-1.500zM890.9 470.500h1.500v6h-1.500zM892.9 501h1.500v9h-1.500zM893.8 470.500h1.500v6h-1.500zM895.8 501h1.500v9h-1.500zM896.7 470.500h1.500v6h-1.500zM898.7 501h1.500v9h-1.500zM899.6 470.500h1.500v6h-1.500zM901.6 501h1.500v9h-1.500zM902.5 470.500h1.500v6h-1.500zM904.5 501h1.500v9h-1.500zM905.4 470.500h1.500v6h-1.500zM907.4 501h1.500v9h-1.500zM908.3 470.500h1.500v6h-1.500zM910.3 501h1.500v9h-1.500zM911.2 470.500h1.500v6h-1.500zM913.2 501h1.500v9h-1.500zM914.1 470.500h1.500v6h-1.500zM916.1 501h1.500v9h-1.500zM917 470.500h1.500v6h-1.500zM919 501h1.500v9h-1.500zM919.9 470.500h1.500v6h-1.500zM921.9 501h1.500v9h-1.500zM922.8 470.500h1.500v6h-1.500zM924.8 501h1.500v9h-1.500zM925.7 470.500h1.500v6h-1.500zM927.7 501h1.500v9h-1.500zM855 572h2.200v13h-2.200zM858.9 572h2.200v13h-2.200zM862.8 572h2.200v13h-2.200zM866.7 572h2.200v13h-2.200zM870.6 572h2.200v13h-2.200zM874.5 572h2.200v13h-2.200zM878.4 572h2.200v13h-2.200zM882.3 572h2.200v13h-2.200zM886.2 572h2.200v13h-2.200zM870.5 555h1v3.7h-1zM871 560.5h2v2h-2zM876.5 565h1.5v3h-1.5zM884.5 566h1.5v2h-1.5zM861.5 556h3.8v4.3h-3.8zM871 553.5h1.5v2h-1.5zM865.5 555h2v2h-2zM874 561.5h4.6v1.5h-4.6zM874 562.5h2v2.5h-2zM854 561.5h2.5v2h-2.5zM866 565.5h1v2.5h-1zM867 563h2v2.5h-2zM851 566.5h4v1.5h-4z"/><path fill="#000" d="M896 421l4 -3h9l4 3v6l-6 5h-5l-6 -5z"/><path fill="#c83020" d="M863 549h1.800v8h-1.800zM866.2 549h1.800v8h-1.800zM869.4 549h1.800v8h-1.800zM872.6 549h1.800v8h-1.800zM875.8 549h1.800v8h-1.800z"/>
<circle cx="858" cy="591.500" r="4.600" fill="#c09800"/><circle cx="885" cy="591.500" r="4.600" fill="#c09800"/><ellipse cx="901" cy="600.500" rx="3" ry="5" fill="#c09800"/>
<clipPath id="cpi"><path d="M845 239 H931 q5.500 0 5.500 5.500 V388 q0 4 -4 4 H925 V457 q0 5 -5 5 H872 q-4 0 -4 4 V473 q0 5 -5 5 H845 Z"/></clipPath>
<g clip-path="url(#cpi)"><path d="M915.1 376.2L927.4 363.9" stroke="#3ca028" stroke-width=".9"/><path d="M914.1 304.3L935 279.3" stroke="#3ca028" stroke-width=".9"/><path d="M893.1 436.2L915.5 458" stroke="#ff0000" stroke-width=".9"/><path d="M887.1 435.8L887.1 444.5" stroke="#3ca028" stroke-width=".9"/><path d="M886.8 452.1L902.9 458" stroke="#ff0000" stroke-width=".9"/><path d="M916.2 301.3L935 326.3" stroke="#d06010" stroke-width=".9"/><path d="M909.5 354.2L935 324.8" stroke="#3ca028" stroke-width=".9"/><path d="M916.1 411.8L934.2 430" stroke="#ff0000" stroke-width=".9"/><path d="M915.3 382.3L935 411.6" stroke="#d06010" stroke-width=".9"/><path d="M898.2 401.7L898.2 411.3" stroke="#3ca028" stroke-width=".9"/><path d="M879.3 416.7L907.4 388.6" stroke="#3ca028" stroke-width=".9"/><path d="M912.6 260.5L912.6 268.7" stroke="#e8b830" stroke-width=".9"/><path d="M863.3 254L863.3 279.7" stroke="#ff0000" stroke-width=".9"/><path d="M909.1 401.3L932.3 424.5" stroke="#d06010" stroke-width=".9"/><path d="M908.2 379.4L926.4 397.6" stroke="#3ca028" stroke-width=".9"/><path d="M904.1 301.8L924.4 322.1" stroke="#3ca028" stroke-width=".9"/><path d="M874.4 283.9L884.8 283.9" stroke="#e8b830" stroke-width=".9"/><path d="M874 409.2L896.1 387.1" stroke="#ff0000" stroke-width=".9"/><path d="M867.3 425.2L878.6 436.5" stroke="#d06010" stroke-width=".9"/><path d="M870.8 398.3L879.6 389.5" stroke="#d06010" stroke-width=".9"/><path d="M905.4 440.8L932.6 440.8" stroke="#3ca028" stroke-width=".9"/><path d="M926.5 420.7L935 420.7" stroke="#d06010" stroke-width=".9"/><path d="M885.4 346.8L910.3 371.7" stroke="#3ca028" stroke-width=".9"/><path d="M865.7 355.2L878.6 342.3" stroke="#3ca028" stroke-width=".9"/><path d="M911.8 329.8L932.5 350.5" stroke="#d06010" stroke-width=".9"/><path d="M865.4 420.7L865.4 443.1" stroke="#d06010" stroke-width=".9"/></g>
<path d="M870 272 L895 272 L920 247 M861 255 L872 266 V285 M846 330 L905 276 H930 V268" stroke="#3ca028" stroke-width="1" fill="none"/>
<text font-family="Liberation Sans,sans-serif" font-size="9.500" fill="#3ca028" transform="translate(894,552) rotate(90)" textLength="35" lengthAdjust="spacingAndGlyphs">2X_JVL</text>
<text font-family="Liberation Sans,sans-serif" font-size="9.500" fill="#3ca028" transform="translate(907,552) rotate(90)" textLength="35" lengthAdjust="spacingAndGlyphs">HD-DIC</text>
<text font-family="Liberation Sans,sans-serif" font-size="9.500" fill="#3ca028" transform="translate(920,567.500) rotate(90)" textLength="11.500" lengthAdjust="spacingAndGlyphs">A3</text>
<path d="M845 609.700 H938" stroke="#e8e0c0" stroke-width="1"/>
<path d="M845 617 H944.500 V604.500 Q944.500 602.500 941 603" fill="none" stroke="#0c28b4" stroke-width="1.600"/>
<path d="M845 614.500 H942.500" stroke="#061470" stroke-width="2.500"/>
<path d="M945 177.300 Q947 182 950.500 187" fill="none" stroke="#0c28b4" stroke-width="1.3"/>
<path d="M899.400 170.500 H945 V221.500 H899.400 Z M899.400 170.500 L305 251 M899.400 195.300 L845 224 M899.400 221.500 L305 600 M945 221.500 L802 600" stroke="#f0f0f0" stroke-width=".95" fill="none"/>
</svg>
<div class="a" style="left:0;top:75px;width:153px;height:731px;background:#5cc8ac"></div>
<div class="a m9" style="left:1px;top:78px;width:150px;height:20px;background:#9cdcdc;border:1px solid #000;padding-left:2px;line-height:19px">Job : 8v0580pza0</div>
<div class="a m9" style="left:1px;top:97px;width:150px;height:19px;background:#9cdcdc;border:1px solid #000;padding-left:2px;line-height:18px">Step: cam</div>
<div class="a" style="left:1px;top:118px;width:150px;height:27px;border:1px solid #0c3c30;background:#5cc8ac"></div>
<div class="a m9" style="left:4px;top:121px;width:144px;height:21px;background:#9cdcdc;border:2px solid;border-color:#e0ffff #4c7c7c #4c7c7c #e0ffff;padding-left:2px;line-height:18px">Job Matrix ...</div>
<div class="a" style="left:0;top:149px;width:125px;height:630px;background:#2c7c68"></div>
<div class="a" style="left:3px;top:152px;width:122px;height:627px;background:#5cc8ac"></div>
<div class="a" style="left:125px;top:149px;width:8px;height:630px;background:linear-gradient(90deg,#a8ecd8 0 2px,#5cc8ac 2px 5.5px,#a8ecd8 5.5px 7.5px,#5cc8ac 7.5px)"></div>
<div class="a" style="left:3px;top:778px;width:130px;height:1.5px;background:#a8ecd8"></div>
<div class="grp" style="top:155px;height:18px">
<div class="row" style="top:0px"><div class="cb"><i></i></div><div class="lb" style="background:#04a57b">ts<svg class="hd" viewBox="0 0 8 8"><path d="M0.100 3.200 L2.400 2.100 L3.500 0 L4.100 0.400 L4.100 2.600 L6.900 3.200 L6.600 4.100 L4 6.900 L0.100 6.900 Z" fill="#000"/></svg></div></div>
</div>
<div class="grp" style="top:176px;height:18px">
<div class="row" style="top:0px"><div class="cb"><i></i></div><div class="lb" style="background:#9cdcdc">cs.etch</div></div>
</div>
<div class="grp" style="top:197px;height:34px">
<div class="row" style="top:0px"><div class="cb"><i></i></div><div class="sw" style="background:#ff0000"></div><div class="lb" style="background:#ffc850">cs<svg class="hd" viewBox="0 0 8 8"><path d="M0.100 3.200 L2.400 2.100 L3.500 0 L4.100 0.400 L4.100 2.600 L6.900 3.200 L6.600 4.100 L4 6.900 L0.100 6.900 Z" fill="#000"/></svg></div></div>
<div class="row" style="top:16px"><div class="cb"><i></i></div><div class="lb" style="background:#e0aa14">pln2t<svg class="hd" viewBox="0 0 8 8"><path d="M0.100 3.200 L2.400 2.100 L3.500 0 L4.100 0.400 L4.100 2.600 L6.900 3.200 L6.600 4.100 L4 6.900 L0.100 6.900 Z" fill="#000"/></svg></div></div>
</div>
<div class="grp" style="top:234px;height:18px">
<div class="row" style="top:0px"><div class="cb"><i></i></div><div class="lb" style="background:#9cdcdc">pln3b</div></div>
</div>
<div class="grp" style="top:255px;height:34px">
<div class="row" style="top:0px"><div class="cb"><i></i></div><div class="lb" style="background:#ffc850">sig3b</div></div>
<div class="row" style="top:16px"><div class="cb"><i></i></div><div class="lb" style="background:#e0aa14">pln4t<svg class="hd" viewBox="0 0 8 8"><path d="M0.100 3.200 L2.400 2.100 L3.500 0 L4.100 0.400 L4.100 2.600 L6.900 3.200 L6.600 4.100 L4 6.900 L0.100 6.900 Z" fill="#000"/></svg></div></div>
</div>
<div class="grp" style="top:292px;height:18px">
<div class="row" style="top:0px"><div class="cb"><i></i></div><div class="lb" style="background:#9cdcdc">pln5b</div></div>
</div>
<div class="grp" style="top:313px;height:34px">
<div class="row" style="top:0px"><div class="cb"><i></i></div><div class="lb" style="background:#ffc850">sig5b</div></div>
<div class="row" style="top:16px"><div class="cb"><i></i></div><div class="lb" style="background:#e0aa14">pln6t<svg class="hd" viewBox="0 0 8 8"><path d="M0.100 3.200 L2.400 2.100 L3.500 0 L4.100 0.400 L4.100 2.600 L6.900 3.200 L6.600 4.100 L4 6.900 L0.100 6.900 Z" fill="#000"/></svg></div></div>
</div>
<div class="grp" style="top:350px;height:18px">
<div class="row" style="top:0px"><div class="cb"><i></i></div><div class="lb" style="background:#9cdcdc">pln7b</div></div>
</div>
<div class="grp" style="top:371px;height:18px">
<div class="row" style="top:0px"><div class="cb"><i></i></div><div class="lb" style="background:#ffc850">sig7b</div></div>
</div>
<div class="grp" style="top:392px;height:18px">
<div class="row" style="top:0px"><div class="cb"><i></i></div><div class="lb" style="background:#9cdcdc">ss.etch</div></div>
</div>
<div class="grp" style="top:413px;height:34px">
<div class="row" style="top:0px"><div class="cb"><i></i></div><div class="sw" style="background:#3c9614"></div><div class="lb" style="background:#ffc850">ss<svg class="hd" viewBox="0 0 8 8"><path d="M0.100 3.200 L2.400 2.100 L3.500 0 L4.100 0.400 L4.100 2.600 L6.900 3.200 L6.600 4.100 L4 6.900 L0.100 6.900 Z" fill="#000"/></svg></div></div>
<div class="row" style="top:16px"><div class="cb"><i></i></div><div class="lb" style="background:#04a57b">bs<svg class="hd" viewBox="0 0 8 8"><path d="M0.100 3.200 L2.400 2.100 L3.500 0 L4.100 0.400 L4.100 2.600 L6.900 3.200 L6.600 4.100 L4 6.900 L0.100 6.900 Z" fill="#000"/></svg></div></div>
</div>
<div class="grp" style="top:450px;height:66px">
<div class="row" style="top:0px"><div class="cb"><i></i></div><div class="lb" style="background:#9cb8c4">drl</div></div>
<div class="row" style="top:16px"><div class="cb"><i></i></div><div class="lb" style="background:#9cb8c4">szdrl</div></div>
<div class="row" style="top:32px"><div class="cb"><i></i></div><div class="lb" style="background:#9cb8c4">ldi</div></div>
<div class="row" style="top:48px"><div class="cb"><i></i></div><div class="lb" style="background:#dcdcdc">rout</div></div>
</div>
<div class="grp" style="top:519px;height:258px">
<div class="row" style="top:0px"><div class="cb"><i></i></div><div class="lb" style="background:#9cdcdc">v-cut</div></div>
<div class="row" style="top:16px"><div class="cb"><i></i></div><div class="lb" style="background:#9cdcdc">cslsh</div></div>
<div class="row" style="top:32px"><div class="cb" style="background:#0018ff;left:1px;top:1px;width:16px;height:16px"><i style="left:3px;top:3px;border-color:#000080"></i></div><div class="sw" style="background:#0018ff"></div><div class="lb" style="background:#9cdcdc">roubk<svg class="hd" style="right:2px;top:5px;width:6px;height:6px" viewBox="0 0 6 6"><path d="M0.500 0.500 h5 v5 h-5 z M3 0.500 v5 M0.500 3 h5" fill="none" stroke="#000" stroke-width="1"/></svg></div></div>
<div class="row" style="top:48px"><div class="cb"><i></i></div><div class="lb" style="background:#9cdcdc">npthdrl</div></div>
<div class="row" style="top:64px"><div class="cb"><i></i></div><div class="lb" style="background:#9cdcdc">dkt</div></div>
<div class="row" style="top:80px"><div class="cb"><i></i></div><div class="lb" style="background:#9cdcdc">dkb</div></div>
<div class="row" style="top:96px"><div class="cb"><i></i></div><div class="lb" style="background:#9cdcdc">brd<svg class="hd" viewBox="0 0 8 8"><path d="M0.100 3.200 L2.400 2.100 L3.500 0 L4.100 0.400 L4.100 2.600 L6.900 3.200 L6.600 4.100 L4 6.900 L0.100 6.900 Z" fill="#000"/></svg></div></div>
<div class="row" style="top:112px"><div class="cb"><i></i></div><div class="lb" style="background:#9cdcdc">mill</div></div>
<div class="row" style="top:128px"><div class="cb"><i></i></div><div class="lb" style="background:#9cdcdc">outline<svg class="hd" viewBox="0 0 8 8"><path d="M0.100 3.200 L2.400 2.100 L3.500 0 L4.100 0.400 L4.100 2.600 L6.900 3.200 L6.600 4.100 L4 6.900 L0.100 6.900 Z" fill="#000"/></svg></div></div>
<div class="row" style="top:144px"><div class="cb"><i></i></div><div class="lb" style="background:#9cdcdc">txt</div></div>
<div class="row" style="top:160px"><div class="cb"><i></i></div><div class="lb" style="background:#9cdcdc">vcut</div></div>
<div class="row" style="top:176px"><div class="cb"><i></i></div><div class="lb" style="background:#9cdcdc">d</div></div>
<div class="row" style="top:192px"><div class="cb"><i></i></div><div class="lb" style="background:#9cdcdc">cs111<svg class="hd" viewBox="0 0 8 8"><path d="M0.100 3.200 L2.400 2.100 L3.500 0 L4.100 0.400 L4.100 2.600 L6.900 3.200 L6.600 4.100 L4 6.900 L0.100 6.900 Z" fill="#000"/></svg></div></div>
<div class="row" style="top:208px"><div class="cb"><i></i></div><div class="lb" style="background:#9cdcdc">asas</div></div>
<div class="row" style="top:224px"><div class="cb"><i></i></div><div class="lb" style="background:#9cdcdc">a</div></div>
<div class="row" style="top:240px"><div class="cb"><i></i></div><div class="lb" style="background:#9cdcdc">b</div></div>
</div>
<div class="a" style="left:136px;top:149px;width:15px;height:630px;background:#3eaa90;border:1px solid;border-color:#2c7c68 #a8ecd8 #a8ecd8 #2c7c68"></div>
<div class="a" style="left:138px;top:163px;width:11px;height:578px;background:#5cc8ac;border:2px solid;border-color:#a8ecd8 #2c7c68 #2c7c68 #a8ecd8"></div>
<svg class="a" style="left:137px;top:150px" width="13" height="13" viewBox="0 0 13 13"><path d="M6.500 1 L12 12 L1 12 Z" fill="#5cc8ac" stroke="#a8ecd8" stroke-width="1.500"/><path d="M12 12 L1 12" stroke="#2c7c68" stroke-width="1.500"/></svg>
<svg class="a" style="left:137px;top:766px" width="13" height="13" viewBox="0 0 13 13"><path d="M6.500 12 L12 1 L1 1 Z" fill="#5cc8ac" stroke="#2c7c68" stroke-width="1.500"/><path d="M1 1 L12 1 M1 1 L6.500 12" stroke="#a8ecd8" stroke-width="1.500"/></svg>
<div class="a m7" style="left:1px;top:784px;width:150px;height:19px;background:#ffc040;border:1px solid #0c3c30;padding-left:3px;line-height:18.500px">Selected : 0</div>
<div class="a" style="left:1274px;top:75px;width:164px;height:731px;background:#2c6c5c"></div>
<div class="a" style="left:1274px;top:75px;width:164px;height:406px;background:#505c5c"></div>
<div class="a" style="left:1276px;top:77px;width:160px;height:160px;background:#000"></div>
<div class="a" style="left:1276px;top:237px;width:160px;height:2px;background:#c4ece4"></div>
<div class="a" style="left:1276px;top:239px;width:160px;height:3px;background:#404848"></div>
<div class="a" style="left:1276px;top:241px;width:160px;height:240px;background:#000"></div>
<div class="tb tc" style="left:1277px;top:78px"><b></b><svg viewBox="5 5 28 28"><rect x="12" y="13" width="16" height="15" stroke="#000" fill="none" stroke-width="1.800"/><path d="M19.800 5.500 L25 10.500 H23 V17 H16.800 V10.500 H14.600 Z" fill="#000"/></svg></div>
<div class="tb tc" style="left:1317px;top:78px"><b></b><svg viewBox="5 5 28 28"><rect x="12" y="11.500" width="15.500" height="14" stroke="#000" fill="none" stroke-width="1.800"/><path d="M19.800 32 L25 27.200 H23 V21.500 H16.800 V27.200 H14.600 Z" fill="#000"/></svg></div>
<div class="tb tc" style="left:1357px;top:78px"><b></b><svg viewBox="5 5 28 28"><path d="M8.500 18.500 L18.500 9 L28.500 18.500 M11.500 18 V30 H26 V18" stroke="#000" fill="none" stroke-width="1.500"/><path d="M23 13 V9 h2.500 V15.500 M24 7.500 l1.500 -1.500" stroke="#000" fill="none" stroke-width="1"/><rect x="18.500" y="22.500" width="3.800" height="7.500" stroke="#000" fill="none" stroke-width="1"/><rect x="13.200" y="21.800" width="2.400" height="2.400" stroke="#000" fill="none" stroke-width="1"/></svg></div>
<div class="tb tc" style="left:1397px;top:78px"><b></b><svg viewBox="5 5 28 28"><rect x="8.500" y="8.500" width="21" height="22" stroke="#000" fill="none" stroke-width="2"/><path d="M19.300 8 V31 M8 24.500 H30" stroke="#000" fill="none" stroke-width="1.200"/><text x="21" y="22.500" font-family="Liberation Sans,sans-serif" font-size="5.500" font-weight="bold">xy</text></svg></div>
<div class="tb tc" style="left:1277px;top:118px"><b></b><svg viewBox="5 5 28 28"><path d="M14 11.500 H28 V26 H14 V21.500 M14 16 V11.500" stroke="#000" fill="none" stroke-width="1.800"/><path d="M6.300 18.700 L11 14.500 V16.200 H17 V21.200 H11 V23 Z" fill="#000"/></svg></div>
<div class="tb tc" style="left:1317px;top:118px"><b></b><svg viewBox="5 5 28 28"><path d="M24 16 V11.500 H10.500 V26 H24 V21.500" stroke="#000" fill="none" stroke-width="1.800"/><path d="M31.700 18.700 L27 14.500 V16.200 H21.500 V21.200 H27 V23 Z" fill="#000"/></svg></div>
<div class="tb tc" style="left:1357px;top:118px"><b></b><svg viewBox="5 5 28 28"><rect x="18.500" y="13.500" width="11" height="12" stroke="#000" fill="none" stroke-width="1.800"/><path d="M8 24.800 H12 Q14.800 24.800 14.800 21 Q14.800 16.500 10 16.500" stroke="#000" fill="none" stroke-width="2"/><path d="M6 16.500 L11 12.500 V20.500 Z" fill="#000"/></svg></div>
<div class="tb tc" style="left:1397px;top:118px"><b></b><svg viewBox="5 5 28 28"><path d="M29.800 11.500 H11.500 V18.800 H28 V25.800 H9" stroke="#000" fill="none" stroke-width="1.800"/><path d="M32 9.500 L29.800 11.500 L32 14 M6.500 23.500 L9 25.800 L6.500 28.500" stroke="#000" fill="none" stroke-width="1"/></svg></div>
<div class="tb tc" style="left:1277px;top:158px"><b></b><svg viewBox="5 5 28 28"><rect x="12.300" y="12.300" width="13.400" height="13.400" stroke="#000" fill="none" stroke-width="2"/><path d="M19 8.600 L14.500 5 H23.500 Z M19 29 L14.500 33 H23.500 Z M8.600 19 L5 14.500 V23.500 Z M29.400 19 L33 14.500 V23.500 Z" fill="#000"/></svg></div>
<div class="tb tc" style="left:1317px;top:158px"><b></b><svg viewBox="5 5 28 28"><rect x="15" y="16" width="7.400" height="6.600" stroke="#000" fill="none" stroke-width="2"/><path d="M18.700 8.400 L13.500 12.600 H23.900 Z M18.700 30.600 L13.500 26.400 H23.900 Z M7.200 19.300 L11.400 14 V24.600 Z M30.600 19.300 L26.400 14 V24.600 Z" fill="#000"/></svg></div>
<div class="tb tc" style="left:1357px;top:158px"><b></b><svg viewBox="5 5 28 28"><text x="9.600" y="25" font-family="Liberation Sans,sans-serif" font-weight="bold" font-size="16" textLength="19" lengthAdjust="spacingAndGlyphs">1:2</text></svg></div>
<div class="tb tc" style="left:1397px;top:158px"><b></b><svg viewBox="5 5 28 28"><rect x="8.700" y="8.800" width="21.300" height="20.400" stroke="#000" fill="none" stroke-width="2.200"/><text x="15.500" y="25.500" font-family="Liberation Sans,sans-serif" font-weight="bold" font-size="16">?</text></svg></div>
<div class="tb tc" style="left:1277px;top:198px"><b></b><svg viewBox="5 5 28 28"><path d="M7.300 9.200 H25" stroke="#000" fill="none" stroke-width="2.200"/><path d="M30 7 H27 Q24.500 7 24.500 9.400 Q24.500 12 27 12 H30" stroke="#000" fill="none" stroke-width="2"/><path d="M8 16.600 L11.500 15.200 H30.500 V18.200 H11.500 Z M11.500 15.200 V18.200" stroke="#000" fill="none" stroke-width="1"/><path d="M15 24 Q19 20 25 21.500 Q29 23 26.500 27.500 Q24 32 18 31.500 Q12 30 15 24 Z" stroke="#000" fill="none" stroke-width="1.100"/><circle cx="18" cy="26.500" r="1" stroke="#000" fill="none" stroke-width=".8"/><circle cx="20.500" cy="24" r="1" stroke="#000" fill="none" stroke-width=".8"/><circle cx="23.500" cy="24.500" r="1" stroke="#000" fill="none" stroke-width=".8"/></svg></div>
<div class="tb tc" style="left:1317px;top:198px"><b></b><svg viewBox="5 5 28 28"><path d="M5 14 H33 M5 24.300 H33 M14 5 V33 M24.300 5 V33" stroke="#c0c8c8" stroke-width="1"/><circle cx="13.700" cy="19.700" r="5.500" fill="#000"/><rect x="17" y="18" width="14.700" height="3.800" fill="#000"/><rect x="11.600" y="17.600" width="4.400" height="4.400" fill="#a01010" stroke="#ff2020" stroke-width="1.100"/></svg></div>
<div class="tb tc" style="left:1357px;top:198px"><b></b><svg viewBox="2 2 34 34" style="left:0;top:0;width:34px;height:34px"><rect x="3.500" y="3.500" width="31" height="31" fill="none" stroke="#e01010" stroke-width="3"/><rect x="20.200" y="6.500" width="11.300" height="25.500" fill="#a2dede" stroke="#000" stroke-width="1"/><circle cx="25.900" cy="10.800" r="2.700" fill="#e8f8f8" stroke="#000" stroke-width=".9"/><circle cx="25.900" cy="18.800" r="3.400" fill="#f8c838" stroke="#000" stroke-width=".7"/><circle cx="25.900" cy="26.800" r="2.700" fill="#e8f8f8" stroke="#000" stroke-width=".9"/><path d="M7.700 5 V17.500 H18 V33" stroke="#f01010" fill="none" stroke-width="1.100"/><path d="M16.600 8.400 V27 H10.500" stroke="#0018ff" fill="none" stroke-width="1.400"/><circle cx="8.600" cy="17.500" r="2.600" fill="#f01010"/><circle cx="16.600" cy="8.400" r="2.600" fill="#0018ff"/><circle cx="10.500" cy="27.300" r="2.800" fill="#0018ff"/></svg></div>
<div class="tb tc" style="left:1397px;top:198px"><b></b><svg viewBox="2 2 34 34" style="left:0;top:0;width:34px;height:34px"><rect x="3.500" y="3.500" width="31" height="31" fill="none" stroke="#e01010" stroke-width="3"/><rect x="20.200" y="6.500" width="11.300" height="25.500" fill="#a2dede" stroke="#000" stroke-width="1"/><circle cx="25.900" cy="10.800" r="3.400" fill="#f01010" stroke="#000" stroke-width=".7"/><circle cx="25.900" cy="18.800" r="2.700" fill="#e8f8f8" stroke="#000" stroke-width=".9"/><circle cx="25.900" cy="26.800" r="2.700" fill="#e8f8f8" stroke="#000" stroke-width=".9"/><path d="M8.700 5 V17 M16.400 8.400 V27 H10.400 M8.500 17.300 L11 15.500" stroke="#000" fill="none" stroke-width="1.300"/><rect x="11" y="14" width="5.400" height="3" fill="#f01010"/><path d="M12.300 14 v3 M14.300 14 v3" stroke="#fff" stroke-width=".8"/><circle cx="8.200" cy="17.200" r="2.600" fill="#000"/><circle cx="16.400" cy="8.400" r="2.600" fill="#000"/><circle cx="10.400" cy="27.500" r="2.800" fill="#000"/></svg></div>
<div class="tb tw" style="left:1277px;top:242px"><b></b><svg viewBox="5 5 28 28"><rect x="11.300" y="12.900" width="14.800" height="14.500" stroke="#000" fill="none" stroke-width="1.200"/><circle cx="18.900" cy="20" r="5.700" fill="#000"/><path d="M23 15 L29 9" stroke="#000" stroke-width="2.400"/><path d="M32 6 L31.500 12.500 L25.500 6.500 Z" fill="#000"/></svg></div>
<div class="tb tw" style="left:1317px;top:242px"><b></b><svg viewBox="5 5 28 28"><rect x="5" y="5" width="28" height="28" fill="#000"/><rect x="18.300" y="8.500" width="11.200" height="11" fill="none" stroke="#e01818" stroke-width="2.200"/><rect x="8.200" y="24.300" width="5.400" height="5" fill="#000060" stroke="#1020e0" stroke-width="2"/><path d="M8.300 22.800 L17.200 7.400 M15.200 29.700 L30 20.500" stroke="#fff" stroke-width="1"/></svg></div>
<div class="tb tw" style="left:1357px;top:242px"><b></b><svg viewBox="5 5 28 28"><path d="M7.100 15.200 H31.600 V22.800 H7.100 Z" fill="#000"/><path d="M9 15 V18.500 M12.100 15 V20.500 M15.200 15 V18.500 M18.300 15 V20.500 M21.400 15 V18.500 M24.500 15 V20.500 M27.600 15 V18.500 M30.400 15 V20.500" stroke="#fff" stroke-width="1.300"/></svg></div>
<div class="tb tw" style="left:1397px;top:242px"><b></b><svg viewBox="5 5 28 28"><rect x="8.700" y="8.800" width="20.800" height="21" stroke="#000" fill="none" stroke-width="1.200" stroke-dasharray="2.200 1.300"/><path d="M15.600 13.100 H22.300 L25.800 16.600 V23.300 L22.300 26.800 H15.600 L12.100 23.300 V16.600 Z" fill="#000"/></svg></div>
<div class="tb tg" style="left:1277px;top:282px"><b></b><svg viewBox="5 5 28 28"><path d="M11.600 11.100 V26.700 H26.400" stroke="#0018ff" stroke-width="4" fill="none"/><circle cx="11.600" cy="11.100" r="4.600" fill="#0018ff"/><circle cx="11.600" cy="26.700" r="4.600" fill="#0018ff"/><circle cx="26.400" cy="26.700" r="4.600" fill="#0018ff"/><circle cx="26.400" cy="11.300" r="4.600" fill="#ff0000"/></svg></div>
<div class="tb tg" style="left:1317px;top:282px"><b></b><svg viewBox="5 5 28 28"><circle cx="18.900" cy="19.600" r="4.400" fill="#0010c8"/><path d="M11.500 12.500 L26.600 26.700 M26.600 12.500 L11.500 26.700" stroke="#000" stroke-width="1.700"/></svg></div>
<div class="tb tg" style="left:1357px;top:282px"><b></b><svg viewBox="5 5 28 28"><circle cx="11.400" cy="26.500" r="3.600" fill="none" stroke="#0018ff" stroke-width="2"/><circle cx="26.300" cy="11.300" r="4.600" fill="#ff0000"/><path d="M16 22.700 L21 17.800" stroke="#000" stroke-width="1"/><path d="M22.400 16.400 L19.200 17.200 L21.600 19.600 Z" fill="#000"/></svg></div>
<div class="tb tg" style="left:1397px;top:282px"><b></b><svg viewBox="5 5 28 28"><circle cx="11.300" cy="26.500" r="4.600" fill="#0018ff"/><circle cx="26.400" cy="11.300" r="4.600" fill="#ff0000"/><path d="M16 22.700 L21 17.800" stroke="#000" stroke-width="1"/><path d="M22.400 16.400 L19.200 17.200 L21.600 19.600 Z" fill="#000"/></svg></div>
<div class="tb tg" style="left:1277px;top:322px"><b></b><svg viewBox="5 5 28 28"><path d="M9.500 26.200 L27.600 9.700" stroke="#ff0000" stroke-width="2.600" stroke-linecap="round"/><path d="M10.500 28.500 H29.500" stroke="#0018ff" stroke-width="2.600" stroke-linecap="round"/><path d="M26.900 24 L23.200 20.500 M23.200 20.500 V23 M23.200 20.500 H25.700" stroke="#000" stroke-width="1" fill="none"/></svg></div>
<div class="tb tg" style="left:1317px;top:322px"><b></b><svg viewBox="5 5 28 28"><path d="M18.600 17.700 L27.700 9.500" stroke="#ff0000" stroke-width="3" stroke-linecap="round"/><path d="M9.500 26.200 L18.600 17.700" stroke="#0018ff" stroke-width="3" stroke-linecap="round"/><path d="M20.300 24.500 L24.100 21.300 M24.100 21.300 V23.800 M24.100 21.300 H21.600" stroke="#000" stroke-width="1" fill="none"/></svg></div>
<div class="tb tg" style="left:1357px;top:322px"><b></b><svg viewBox="5 5 28 28"><path d="M17.400 11.400 Q24.800 11.400 24.800 18.800 Q24.800 25.900 17 25.900" stroke="#000" fill="none" stroke-width="1.900"/><path d="M13.500 25.900 L18 22.500 V29.300 Z" fill="#000"/></svg></div>
<div class="tb tg" style="left:1397px;top:322px"><b></b><svg viewBox="5 5 28 28"><path d="M19.300 6.800 V30.800" stroke="#000" stroke-width="1"/><text transform="translate(17.200,27.400) scale(-1,1)" font-family="Liberation Sans,sans-serif" font-weight="bold" font-size="24" fill="#0018ff" textLength="10" lengthAdjust="spacingAndGlyphs">F</text><text x="21.500" y="27.400" font-family="Liberation Sans,sans-serif" font-weight="bold" font-size="24" fill="#ff0000" textLength="10.500" lengthAdjust="spacingAndGlyphs">F</text></svg></div>
<div class="tb tg" style="left:1277px;top:362px"><b></b><svg viewBox="5 5 28 28"><rect x="6.100" y="21.500" width="10.400" height="10" fill="none" stroke="#0018ff" stroke-width="1.200"/><circle cx="11.300" cy="26.500" r="3.200" fill="#0018ff"/><rect x="21" y="6" width="10.800" height="10.700" fill="#ff0000"/><circle cx="26.400" cy="11.300" r="3.400" fill="#d8d8d8"/><path d="M17.500 21 L19.800 19" stroke="#000"/><path d="M21 17.800 L18 18.400 L20.500 20.900 Z" fill="#000"/></svg></div>
<div class="tb tg" style="left:1317px;top:362px"><b></b><svg viewBox="5 5 28 28"><path d="M9 18.500 H28.800" stroke="#ff0000" stroke-width="3.200" stroke-linecap="round"/><path d="M16.300 18.500 H22" stroke="#0018ff" stroke-width="3.200"/></svg></div>
<div class="tb tg" style="left:1357px;top:362px"><b></b><svg viewBox="5 5 28 28"><path d="M8.200 7.900 V30.700 M29.700 7.900 V30.700" stroke="#000" stroke-width="1.200"/><path d="M9.500 19 H15.300 M22.500 19 H28.500 M11.500 17 L9.500 19 L11.500 21 M26.500 17 L28.500 19 L26.500 21" stroke="#0018ff" fill="none" stroke-width="1"/><rect x="15.300" y="14.500" width="7.200" height="9.200" fill="none" stroke="#0018ff"/><text x="17" y="22" font-family="Liberation Sans,sans-serif" font-size="7.500" fill="#0018ff" font-weight="bold">4</text></svg></div>
<div class="tb tg" style="left:1397px;top:362px"><b></b><svg viewBox="5 5 28 28"><path d="M8.200 10.200 H23 V17 H29.800 V29.600 H18 V27 H9.900 V21 H8.200 Z" fill="#0018ff"/><circle cx="13.600" cy="15.300" r="3.200" fill="#d8d8d8"/><circle cx="22.400" cy="23.900" r="4.300" fill="#d8d8d8"/></svg></div>
<div class="tb tg" style="left:1277px;top:402px"><b></b><svg viewBox="5 5 28 28"><path d="M8.400 26.600 L21.500 13.100 L29.500 26.600" stroke="#ff0000" stroke-width="2.300" fill="none"/><path d="M9 26.800 H29" stroke="#0018ff" stroke-width="2.800"/><path d="M20.400 22.800 V19.400 M18.900 20.900 L20.400 19.400 L21.900 20.900" stroke="#000" stroke-width="1" fill="none"/></svg></div>
<div class="tb tg" style="left:1317px;top:402px"><b></b><svg viewBox="5 5 28 28"><path d="M6.300 34 L17.700 7.500 L30 34" stroke="#ff0000" stroke-width="2.300" fill="none"/><path d="M8 35 L18 24.200 L29.500 35" stroke="#0018ff" stroke-width="2.800" fill="none"/><path d="M18.600 20.500 V15.400 M16.700 17.400 L18.600 15.400 L20.500 17.400" stroke="#000" stroke-width="1.200" fill="none"/></svg></div>
<div class="tb tg" style="left:1357px;top:402px"><b></b><svg viewBox="5 5 28 28"><path d="M8.800 23.400 L14.500 10.300 H24.800 L29.300 23.400" stroke="#ff0000" stroke-width="3" fill="none"/><path d="M5 34 L8.300 24.300 H29.700 L33 34" stroke="#0018ff" stroke-width="3" fill="none"/><path d="M18.500 20.500 V15.400 M16.600 17.400 L18.500 15.400 L20.400 17.400" stroke="#000" stroke-width="1.200" fill="none"/></svg></div>
<div class="tb tg" style="left:1397px;top:402px"><b></b><svg viewBox="5 5 28 28"><path d="M8.700 24 L14.400 10.300 H24.100 L29.300 24" stroke="#ff0000" stroke-width="3" fill="none"/><path d="M4.700 24.300 H33.200" stroke="#0018ff" stroke-width="2.500"/><path d="M5.900 21 L12.700 27.800 M12.700 21 L5.900 27.800 M25.900 21 L32.700 27.800 M32.700 21 L25.900 27.800" stroke="#000" stroke-width=".9"/><path d="M18.500 20.500 V15.400 M16.600 17.400 L18.500 15.400 L20.400 17.400" stroke="#000" stroke-width="1.200" fill="none"/></svg></div>
<div class="tb to" style="left:1277px;top:442px"><b></b><svg viewBox="5 5 28 28"><path transform="translate(15.200,10.200)" d="M0 0 L0 12.500 L2.800 10 L6 17 L8.600 16 L5.600 9 L9 8.800 Z" fill="#000"/></svg></div>
<div class="tb to" style="left:1317px;top:442px"><b></b><svg viewBox="5 5 28 28"><rect x="9.300" y="8.300" width="19.200" height="19.700" fill="none" stroke="#e01808" stroke-width="2"/><path transform="translate(15.200,10.200)" d="M0 0 L0 12.500 L2.800 10 L6 17 L8.600 16 L5.600 9 L9 8.800 Z" fill="#000"/></svg></div>
<div class="tb to" style="left:1357px;top:442px"><b></b><svg viewBox="5 5 28 28"><path d="M13.200 8.300 H28.300 V28 H14.900 L9.200 22.300 V12.300 Z" fill="none" stroke="#e01808" stroke-width="2"/><path transform="translate(15.200,10.200)" d="M0 0 L0 12.500 L2.800 10 L6 17 L8.600 16 L5.600 9 L9 8.800 Z" fill="#000"/></svg></div>
<div class="tb to" style="left:1397px;top:442px"><b></b><svg viewBox="5 5 28 28"><path d="M10.400 4.500 V18.200 M9.300 28.400 H16.700 V19.300 H19.600 V11.700 H27.500" stroke="#000" fill="none" stroke-width="1"/><circle cx="10.400" cy="20.400" r="2.300" fill="#e01818" stroke="#600" stroke-width=".5"/><circle cx="9.300" cy="28.400" r="2.300" fill="#20d020" stroke="#040" stroke-width=".5"/><circle cx="27.500" cy="11.700" r="2.300" fill="#20d020" stroke="#040" stroke-width=".5"/><path transform="translate(23,16.500) scale(.82)" d="M0 0 L0 12.500 L2.800 10 L6 17 L8.600 16 L5.600 9 L9 8.800 Z" fill="#000"/></svg></div>
<div class="a" style="left:1276px;top:480px;width:162px;height:2px;background:#203c38"></div>
<div class="a" style="left:1276px;top:482px;width:162px;height:3px;background:#4c9c8c"></div>
<div class="a" style="left:1276px;top:485px;width:160px;height:276px;background:#000"></div>
<div class="a" style="left:1436px;top:485px;width:2px;height:276px;background:#a8f0e0"></div>
<svg class="a" style="left:1276px;top:487px" width="162" height="274" viewBox="1276 487 162 274"><rect x="1276" y="571" width="162" height="104" fill="#ff0000"/><path d="M1276 581 H1438 M1276 664.500 H1438" stroke="#f08020" stroke-width="1"/><path d="M1310 590 V588 q0 -2.500 2.500 -2.500 H1317 q2 0 2 2 V589 H1333.700 V587.500 q0 -2 2 -2 H1337.500 q2 0 2 2 V590 q0 2 2 2 H1347.700 q2 0 2 -2 V587.500 q0 -2 2 -2 H1353 q2 0 2 2 V589 H1370.900 V587.500 q0 -2 2 -2 H1373.400 q2 0 2 2 V590 q0 2 2 2 H1383.700 q2 0 2 -2 V587.500 q0 -2 2 -2 H1391.500 q2.500 0 2.500 2.500 V590 V645 q0 2.800 -2.800 2.800 H1310 Z" fill="none" stroke="#a8a8a8" stroke-width="1.800"/><path d="M1310 590 V588 q0 -2.500 2.500 -2.500 H1317 q2 0 2 2 V589 H1333.700 V587.500 q0 -2 2 -2 H1337.500 q2 0 2 2 V590 q0 2 2 2 H1347.700 q2 0 2 -2 V587.500 q0 -2 2 -2 H1353 q2 0 2 2 V589 H1370.900 V587.500 q0 -2 2 -2 H1373.400 q2 0 2 2 V590 q0 2 2 2 H1383.700 q2 0 2 -2 V587.500 q0 -2 2 -2 H1391.500 q2.500 0 2.500 2.500 V590" fill="none" stroke="#20e0f0" stroke-width="1.800"/><path d="M1388 647.800 H1391.200 q2.800 0 2.800 -2.800" fill="none" stroke="#20e0f0" stroke-width="1.800"/><rect x="1317.600" y="642" width="5.500" height="5" fill="#20e0f0"/><rect x="1354.200" y="642" width="5" height="5" fill="#20e0f0"/><rect x="1319.500" y="643.500" width="2" height="2" fill="#80a0a8"/><path d="M1307.500 644 L1313.500 650.500 M1313.500 644 L1307.500 650.500 M1310.500 643 V648" stroke="#20e0f0" stroke-width="1"/></svg>
<div class="a" style="left:1275px;top:761px;width:163px;height:45px;background:#5cc8ac;border:2px solid;border-color:#a8ecd8 #2c7c68 #a8ecd8 #a8ecd8"></div>
<div class="a" style="left:1279px;top:769.700px;font:bold 14px 'Liberation Mono', monospace;letter-spacing:.6px;line-height:14.700px;white-space:pre">X = 118.973168mm
Y = 104.864725mm</div>
<div class="a" style="left:298px;top:224px;width:548px;height:413px;background:#d4d0c8;border:2px solid;border-color:#fff #404040 #404040 #fff"></div>
<div class="a" style="left:300px;top:226px;width:544px;height:409px;border:1px solid;border-color:#d4d0c8 #808080 #808080 #d4d0c8"></div>
<div class="a" style="left:302px;top:228px;width:540px;height:18px;background:linear-gradient(90deg,#0a246a,#a6caf0)"></div>
<svg class="a" style="left:304px;top:230px" width="15" height="14" viewBox="0 0 15 14"><rect x="0.500" y="0.500" width="14" height="13" fill="#fff" stroke="#404040"/><rect x="1" y="1" width="13" height="2.500" fill="#101080"/><path d="M3.500 5 L11 12 M11 5 L3.500 12" stroke="#c8c820" stroke-width="2.400"/><path d="M3.500 5 L11 12 M11 5 L3.500 12" stroke="#707000" stroke-width=".7"/></svg>
<div class="a" style="left:321.500px;top:230px;font:bold 11px 'Liberation Sans', 'Noto Sans CJK SC', sans-serif;line-height:14px;color:#fff;white-space:pre;letter-spacing:.32px">Popview - 1</div>
<div class="a" style="left:824px;top:230px;width:16px;height:14px;background:#d4d0c8;border:1px solid;border-color:#fff #404040 #404040 #fff"></div>
<svg class="a" style="left:824px;top:230px" width="16" height="14" viewBox="0 0 16 14"><path d="M4 3.500 L11 10.500 M11 3.500 L4 10.500" stroke="#000" stroke-width="1.700"/></svg>
<div class="a" style="left:302px;top:246px;width:540px;height:1px;background:#d8f4f0"></div>
<div class="a" style="left:302px;top:247px;width:540px;height:386px;background:#2c7c68"></div>
<div class="a" style="left:305px;top:250px;width:498px;height:351px;background:#000"></div>
<svg class="a" style="left:305px;top:250px" width="497" height="351" viewBox="305 250 497 351">
<path d="M748 373 H803 V601 H726.300 V428.700 A41 41 0 0 0 748 396 Z" fill="#c09800"/>
<circle cx="808" cy="493" r="65" fill="#000"/><circle cx="809" cy="645" r="64" fill="#000"/>
<path d="M581.500 601 V386 A35 35 0 0 1 616.500 351 H651.300 A33 33 0 0 1 684.300 384 V601 Z" fill="#c09800"/>
<path d="M579.600 601 V386 A36.900 36.900 0 0 1 616.500 349.100 H651.300 A34.900 34.900 0 0 1 678 361.600" fill="none" stroke="#b8b8fc" stroke-width="3.800"/>
<path d="M576 601 V386 A40.500 40.500 0 0 1 616.500 345.700 H651.300 A38.300 38.300 0 0 1 670.500 350.800" fill="none" stroke="#0a28ff" stroke-width="3.200"/>
<path d="M697.5 384.0 L696.9 381.3 L696.1 378.6 L695.1 376.1 L694.0 373.6 L692.8 371.2 L691.5 369.0 L690.0 366.8 L688.7 364.7 L687.3 362.6 L685.8 360.6 L684.2 358.7 L682.5 356.9 L680.7 355.2 L678.8 353.6 L676.8 352.2 L674.8 350.8 L672.7 349.7 L670.5 348.6 L668.3 347.7 L666.1 346.9 L663.8 346.2 L661.5 345.5 L659.2 344.9 L656.9 344.5 L656.4 347.6 L658.6 347.9 L660.7 348.4 L662.8 349.1 L664.8 350.0 L666.6 351.2 L668.3 352.6 L669.9 354.1 L671.4 355.6 L672.8 357.2 L674.1 358.9 L675.2 360.6 L676.2 362.4 L677.5 363.9 L678.6 365.5 L679.7 367.1 L680.7 368.8 L682.2 370.3 L683.6 371.9 L684.9 373.7 L686.1 375.5 L687.3 377.5 L688.3 379.6 L689.1 381.7 L689.9 384.0 Z" fill="#0a28ff"/>
<path d="M530.500 601 V390 A90 89.500 0 0 1 620.500 300.500 H708 V346 C713 353 722 368 722.300 390 A14.300 14.300 0 0 1 693.700 391 L693.600 384.500" fill="none" stroke="#0a28ff" stroke-width="7.200" stroke-linejoin="miter"/>
</svg>
<div class="a" style="left:802px;top:248px;width:3px;height:353px;background:#b0f0e0"></div>
<div class="a" style="left:805px;top:247px;width:37px;height:356px;background:#000"></div>
<div class="a" style="left:807px;top:249px;width:33px;height:353px;background:#5cc8ac"></div>
<div class="a" style="left:807px;top:249.0px;width:33px;height:33px;background:#5cc8ac"></div>
<div class="a" style="left:809px;top:251.0px;width:29px;height:29px;background:#a2dede;border:2px solid;border-color:#c8fcf4 #4e8c84 #4e8c84 #c8fcf4"></div>
<div class="a" style="left:813px;top:255.0px;width:21px;height:21px;border:1px solid #000"></div>
<svg class="a" style="left:807px;top:249.0px" width="33" height="33" viewBox="0 0 33 33"><rect x="9" y="11.500" width="8" height="9" fill="#c8f0f0" stroke="#000" stroke-width="2.400"/><path d="M15 16 H11.500 M13.300 14 L11.300 16 L13.300 18" stroke="#000" fill="none" stroke-width="1"/><rect x="19.800" y="8.800" width="4.600" height="4.400" fill="none" stroke="#000" stroke-width="1.100"/><path d="M22.500 13 V16.500 H18" stroke="#000" fill="none" stroke-width="1"/></svg>
<div class="a" style="left:805px;top:282.0px;width:37px;height:2px;background:#000"></div>
<div class="a" style="left:807px;top:284.2px;width:33px;height:33px;background:#5cc8ac"></div>
<div class="a" style="left:809px;top:286.2px;width:29px;height:29px;background:#a2dede;border:2px solid;border-color:#c8fcf4 #4e8c84 #4e8c84 #c8fcf4"></div>
<div class="a" style="left:813px;top:290.2px;width:21px;height:21px;border:1px solid #000"></div>
<svg class="a" style="left:807px;top:284.2px" width="33" height="33" viewBox="0 0 33 33"><path d="M10 15 V22.500 H23 V15" fill="none" stroke="#000" stroke-width="1.800"/><path d="M16.500 7.500 L21.500 12.500 H19.500 V19 H13.500 V12.500 H11.500 Z" fill="#000"/></svg>
<div class="a" style="left:805px;top:317.2px;width:37px;height:2px;background:#000"></div>
<div class="a" style="left:807px;top:319.4px;width:33px;height:33px;background:#5cc8ac"></div>
<div class="a" style="left:809px;top:321.4px;width:29px;height:29px;background:#a2dede;border:2px solid;border-color:#c8fcf4 #4e8c84 #4e8c84 #c8fcf4"></div>
<div class="a" style="left:813px;top:325.4px;width:21px;height:21px;border:1px solid #000"></div>
<svg class="a" style="left:807px;top:319.4px" width="33" height="33" viewBox="0 0 33 33"><path d="M10 18 V9.500 H23 V18" fill="none" stroke="#000" stroke-width="1.800"/><path d="M16.500 25 L21.500 20 H19.500 V13.500 H13.500 V20 H11.500 Z" fill="#000"/></svg>
<div class="a" style="left:805px;top:352.4px;width:37px;height:2px;background:#000"></div>
<div class="a" style="left:807px;top:354.6px;width:33px;height:33px;background:#5cc8ac"></div>
<div class="a" style="left:809px;top:356.6px;width:29px;height:29px;background:#a2dede;border:2px solid;border-color:#c8fcf4 #4e8c84 #4e8c84 #c8fcf4"></div>
<div class="a" style="left:813px;top:360.6px;width:21px;height:21px;border:1px solid #000"></div>
<svg class="a" style="left:807px;top:354.6px" width="33" height="33" viewBox="0 0 33 33"><path d="M15.500 9.500 H23.500 V23.500 H15.500" fill="none" stroke="#000" stroke-width="1.800"/><path d="M8 16.500 L13 11.500 V13.500 H19.500 V19.500 H13 V21.500 Z" fill="#000"/></svg>
<div class="a" style="left:805px;top:387.6px;width:37px;height:2px;background:#000"></div>
<div class="a" style="left:807px;top:389.8px;width:33px;height:33px;background:#5cc8ac"></div>
<div class="a" style="left:809px;top:391.8px;width:29px;height:29px;background:#a2dede;border:2px solid;border-color:#c8fcf4 #4e8c84 #4e8c84 #c8fcf4"></div>
<div class="a" style="left:813px;top:395.8px;width:21px;height:21px;border:1px solid #000"></div>
<svg class="a" style="left:807px;top:389.8px" width="33" height="33" viewBox="0 0 33 33"><path d="M17.500 9.500 H9.500 V23.500 H17.500" fill="none" stroke="#000" stroke-width="1.800"/><path d="M25 16.500 L20 11.500 V13.500 H13.500 V19.500 H20 V21.500 Z" fill="#000"/></svg>
<div class="a" style="left:805px;top:422.8px;width:37px;height:2px;background:#000"></div>
<div class="a" style="left:807px;top:425.0px;width:33px;height:33px;background:#5cc8ac"></div>
<div class="a" style="left:809px;top:427.0px;width:29px;height:29px;background:#a2dede;border:2px solid;border-color:#c8fcf4 #4e8c84 #4e8c84 #c8fcf4"></div>
<div class="a" style="left:813px;top:431.0px;width:21px;height:21px;border:1px solid #000"></div>
<svg class="a" style="left:807px;top:425.0px" width="33" height="33" viewBox="0 0 33 33"><rect x="14" y="14" width="5" height="5" fill="none" stroke="#000" stroke-width="1.500"/><path d="M8.500 8.500 L14 10.500 L10.500 14 Z M24.500 8.500 L19 10.500 L22.500 14 Z M8.500 24.500 L14 22.500 L10.500 19 Z M24.500 24.500 L19 22.500 L22.500 19 Z M7 16.500 L11.500 13 V20 Z M26 16.500 L21.500 13 V20 Z" fill="#000"/></svg>
<div class="a" style="left:805px;top:458.0px;width:37px;height:2px;background:#000"></div>
<div class="a" style="left:807px;top:460.2px;width:33px;height:33px;background:#5cc8ac"></div>
<div class="a" style="left:809px;top:462.2px;width:29px;height:29px;background:#a2dede;border:2px solid;border-color:#c8fcf4 #4e8c84 #4e8c84 #c8fcf4"></div>
<div class="a" style="left:813px;top:466.2px;width:21px;height:21px;border:1px solid #000"></div>
<svg class="a" style="left:807px;top:460.2px" width="33" height="33" viewBox="0 0 33 33"><rect x="14" y="14" width="5" height="5" fill="none" stroke="#000" stroke-width="1.500"/><path d="M16.500 8 L20 12 H13 Z M16.500 25 L20 21 H13 Z M8 16.500 L12 13 V20 Z M25 16.500 L21 13 V20 Z" fill="#000"/></svg>
<div class="a" style="left:805px;top:493.2px;width:37px;height:2px;background:#000"></div>
<div class="a" style="left:302px;top:601px;width:540px;height:32px;background:#5cc8ac"></div>
<div class="a" style="left:302px;top:601px;width:540px;height:3px;background:#b0f0e0"></div>
<div class="a" style="left:302px;top:604px;width:540px;height:1px;background:#103c30"></div>
<div class="a m9" style="left:304px;top:607px;width:536px;height:23px;background:#9cdcdc;border:2px solid;border-color:#d8ffff #4e7c7c #4e7c7c #d8ffff;text-align:center;line-height:18px;padding-right:2px">Close</div>
<div class="a" style="left:302px;top:632px;width:540px;height:1px;background:#103c30"></div>
<div class="a" style="left:0;top:806px;width:1438px;height:37px;background:#000"></div>
<div class="a" style="left:0;top:808px;width:1358px;height:31px;background:#fffcd0"></div>
<div class="a" style="left:0px;top:808px;width:31px;height:31px;background:#fffcd0;border:2px solid;border-color:#ffffee #b4b088 #b4b088 #ffffee"></div>
<div class="a" style="left:32px;top:808px;width:31px;height:31px;background:#fffcd0;border:2px solid;border-color:#ffffee #b4b088 #b4b088 #ffffee"></div>
<div class="a" style="left:64px;top:808px;width:29px;height:31px;background:#fffcd0;border:3px solid;border-color:#68c8b0 #3c9880 #3c9880 #68c8b0"></div>
<div class="a" style="left:31px;top:808px;width:1px;height:31px;background:#000"></div>
<div class="a" style="left:63px;top:808px;width:1px;height:31px;background:#000"></div>
<div class="a" style="left:93px;top:808px;width:1px;height:31px;background:#406050"></div>
<svg class="a" style="left:5px;top:813px" width="21" height="21" viewBox="0 0 21 21"><rect x=".5" y=".5" width="19" height="19" fill="none" stroke="#000"/><path d="M5 5 L15.500 14.500 M5 5 h4 M5 5 v4 M15.500 14.500 h-4 M15.500 14.500 v-4 M3.500 17 h13" stroke="#000" stroke-width="1.200" fill="none"/></svg>
<svg class="a" style="left:37px;top:813px" width="21" height="21" viewBox="0 0 21 21"><rect x=".5" y=".5" width="19" height="19" fill="none" stroke="#000"/><path d="M3 17 L16 3 M3 17 h14 M6 6 v3 h3 M9 14 a4 4 0 0 0 -1.500 -3" stroke="#000" stroke-width="1.200" fill="none"/><text x="11" y="16" font-size="6" font-family="Liberation Sans,sans-serif" font-weight="bold">ox</text></svg>
<svg class="a" style="left:70px;top:815px" width="17" height="17" viewBox="0 0 17 17"><path d="M.500 5 L5 .500 H15.500 V15.500 H.500 Z M.500 8.500 H15.500 M8.500 .500 V15.500" fill="none" stroke="#000" stroke-width="1.200"/></svg>
<div class="a m7" style="left:95.500px;top:817px">X Y :</div>
<div class="a" style="left:142px;top:808px;width:172px;height:31px;background:#fffcd0;border:2px solid;border-color:#fffcd0"></div>
<div class="a" style="left:144px;top:810px;width:168px;height:27px;background:#fffcd0;border:2px solid;border-color:#a8a478 #dcd8a8 #dcd8a8 #a8a478"></div>
<div class="a" style="left:141px;top:808px;width:1px;height:31px;background:#000"></div>
<svg class="a" style="left:147px;top:811px" width="8" height="17" viewBox="0 0 8 17"><path d="M1 1.500 h5.500 M1 15.500 h5.500 M3.700 1.500 v14" stroke="#000" stroke-width="1.100"/></svg>
<div class="a" style="left:314px;top:808px;width:1px;height:31px;background:#000"></div>
<div class="a" style="left:315px;top:808px;width:30px;height:31px;background:#fffcd0;border:3px solid;border-color:#68c8b0 #3c9880 #3c9880 #68c8b0"></div>
<div class="a" style="left:345px;top:808px;width:1px;height:31px;background:#000"></div>
<svg class="a" style="left:322px;top:815px" width="17" height="17" viewBox="0 0 17 17"><rect x=".5" y=".5" width="15" height="15" fill="none" stroke="#000" stroke-width="1.200"/><text x="5.800" y="13.300" font-family="Liberation Sans,sans-serif" font-weight="bold" font-size="13">!</text></svg>
<div class="a m7" style="left:349px;top:817px">&lt;M1&gt; - Select first area corner</div>
<div class="a" style="left:1357px;top:807px;width:81px;height:33px;background:#000"></div>
<div class="a" style="left:1359px;top:808px;width:77px;height:31px;background:#5cc8ac"></div>
<div class="a" style="left:1365px;top:811px;width:69px;height:26px;background:#5cc8ac;border:2px solid;border-color:#a8ecd8 #2c7c68 #2c7c68 #a8ecd8"></div>
<div class="a m9" style="left:1371px;top:816px;line-height:17px;letter-spacing:0">MM</div>
<div class="a" style="left:1415px;top:820px;width:12px;height:7px;background:#5cc8ac;border:2px solid;border-color:#a8ecd8 #2c7c68 #2c7c68 #a8ecd8"></div>
<div class="a" style="left:0;top:840px;width:1438px;height:3px;background:#688c8c"></div>
<div class="a" style="left:0;top:840px;width:1438px;height:1px;background:#000"></div>
<div class="a" style="left:0;top:843px;width:1438px;height:27px;background:#000"></div>
<div class="a" style="left:1px;top:844px;width:1435px;height:25px;background:#b0fcfc;border:2px solid;border-color:#e8ffff #58a0a0 #58a0a0 #e8ffff"></div>
<div class="a m7" style="left:533px;top:850px">ts,#4143,Surface,XC=68,YC=51.6,Islands=1,Holes=14,POS</div>
<div class="a" style="left:0;top:870px;width:1438px;height:25px;background:#d4d0c8"></div>
<div class="a" style="left:0;top:871px;width:1438px;height:1px;background:#fff"></div>
<div class="tk" style="left:2px;width:51px;font-size:12px;padding-left:20px;letter-spacing:0">开始</div>
<svg class="a" style="left:4px;top:877px" width="20" height="18" viewBox="0 0 20 18"><path d="M7 3 q3 -2 5.500 0 v6 q-2.500 -2 -5.500 0 z" fill="#e03020"/><path d="M13 3.300 q2.500 1.500 5 -.3 v6 q-2.500 1.800 -5 .3 z" fill="#20a020"/><path d="M7 9.800 q3 -2 5.500 0 v6 q-2.500 -2 -5.500 0 z" fill="#2040d0"/><path d="M13 10.100 q2.500 1.500 5 -.3 v6 q-2.500 1.800 -5 .3 z" fill="#e8c010"/><path d="M6.500 2 v15 M12.700 2.500 v14" stroke="#000" stroke-width="1.200"/><path d="M1 5 h4 M0 8 h5 M1 11 h4 M0 14 h5" stroke="#c02020" stroke-width="1.200"/><path d="M1 6.500 h4 M0 9.500 h5 M1 12.500 h4" stroke="#2030c0" stroke-width="1"/></svg>
<div class="a" style="left:58px;top:876px;width:2px;height:19px;border-left:1px solid #808080;border-right:1px solid #fff"></div>
<div class="a" style="left:62px;top:877px;width:3px;height:18px;background:#d4d0c8;border:1px solid;border-color:#fff #808080 #808080 #fff"></div>
<div class="a" style="left:163px;top:876px;width:2px;height:19px;border-left:1px solid #808080;border-right:1px solid #fff"></div>
<div class="a" style="left:167px;top:877px;width:3px;height:18px;background:#d4d0c8;border:1px solid;border-color:#fff #808080 #808080 #fff"></div>
<svg class="a" style="left:66px;top:877px" width="92" height="20" viewBox="66 875 92 20"><circle cx="75" cy="887" r="6" fill="none" stroke="#2878d8" stroke-width="3"/><path d="M70 887 h11" stroke="#2878d8" stroke-width="2.500"/><path d="M68 892 q8 -14 16 -12" stroke="#58a8f0" stroke-width="1.500" fill="none"/><rect x="90" y="877" width="16" height="17" fill="#f8e8b0" stroke="#e8a020" stroke-width="1.500"/><circle cx="98" cy="886" r="5" fill="#fff" stroke="#e8a020" stroke-width="1.300"/><path d="M98 883 v3 h3" stroke="#c07000" fill="none"/><path d="M113 880 h8 v-3 l6 5 -6 5 v-3 h-8 z" fill="#4080d0"/><rect x="118" y="884" width="9" height="8" fill="#e8f0ff" stroke="#4070c0"/><path d="M113 888 l4 4 v-8 z" fill="#78b0f0"/><rect x="137" y="881" width="11" height="12" fill="#fff" stroke="#000" stroke-width="1.400"/><path d="M136 884 a8 8 0 0 1 6 -6" stroke="#3070d0" stroke-width="2.500" fill="none"/><path d="M142 888 l8 -10 2 1.500 -8 10 z" fill="#e8b020" stroke="#806000" stroke-width=".6"/></svg>
<div class="tk" style="left:171.3px;width:53px;padding-left:20px">订…</div>
<svg class="a" style="left:174.3px;top:878px" width="17" height="17" viewBox="0 0 17 17"><path d="M8.500 0.500 L10.800 6 L16.500 6.300 L12 10 L13.600 16 L8.500 12.700 L3.400 16 L5 10 L.500 6.300 L6.200 6 Z" fill="#f09010" stroke="#d06000" stroke-width=".8"/><circle cx="8.500" cy="9" r="2.500" fill="#ffe080"/></svg>
<div class="tk" style="left:228.4px;width:53px;padding-left:20px">兴…</div>
<svg class="a" style="left:231.4px;top:878px" width="17" height="17" viewBox="0 0 17 17"><rect x="0" y="0" width="17" height="17" fill="#a8d8e0"/><path d="M2 2 h12 v9 l-4 4 h-8 z" fill="#fff" stroke="#000" stroke-width=".8"/><path d="M14 11 h-4 v4" fill="none" stroke="#000" stroke-width=".8"/></svg>
<div class="tk" style="left:285.4px;width:53px;padding-left:20px">Tot…</div>
<svg class="a" style="left:288.4px;top:878px" width="17" height="17" viewBox="0 0 17 17"><rect x="1" y="1" width="15" height="15" fill="#1838a8" stroke="#000830"/><rect x="4" y="1.500" width="9" height="6" fill="#e8e8f0"/><rect x="4" y="10" width="9" height="6" fill="#2858d8"/></svg>
<div class="tk" style="left:342.5px;width:53px;padding-left:20px">pcb…</div>
<svg class="a" style="left:345.5px;top:878px" width="17" height="17" viewBox="0 0 17 17"><rect x=".5" y=".5" width="16" height="16" fill="#f0c0c0" stroke="#e04040"/><circle cx="8.500" cy="8.500" r="7" fill="#1030a0"/><path d="M5 5 q3 -2 4 1 q2 3 -1 5 q-3 0 -3 -6" fill="#30a040"/></svg>
<div class="tk" style="left:399.6px;width:53px;padding-left:20px">快…</div>
<svg class="a" style="left:402.6px;top:878px" width="17" height="17" viewBox="0 0 17 17"><circle cx="9" cy="9" r="7" fill="#2070d0"/><circle cx="9" cy="9.500" r="4" fill="#30b040"/><path d="M1 4 h6 M0 7 h5 M1 10 h4" stroke="#1040a0" stroke-width="1.500"/><circle cx="9" cy="9" r="1.500" fill="#f0e040"/></svg>
<div class="tk" style="left:456.7px;width:53px;padding-left:20px">Eng…</div>
<svg class="a" style="left:459.7px;top:878px" width="17" height="17" viewBox="0 0 17 17"><rect x="1.500" y="2.500" width="14" height="12" fill="#fff" stroke="#000"/><rect x="2" y="3" width="13" height="2.500" fill="#101080"/><path d="M4.500 7 L12 13.500 M12 7 L4.500 13.500" stroke="#c8c820" stroke-width="2.200"/><path d="M4.500 7 L12 13.500 M12 7 L4.500 13.500" stroke="#606000" stroke-width=".6"/></svg>
<div class="tk" style="left:513.7px;width:53px;padding-left:20px">Pro…</div>
<svg class="a" style="left:516.7px;top:878px" width="17" height="17" viewBox="0 0 17 17"><rect x="1.500" y="2.500" width="14" height="12" fill="#fff" stroke="#000"/><rect x="2" y="3" width="13" height="2.500" fill="#101080"/><path d="M4.500 7 L12 13.500 M12 7 L4.500 13.500" stroke="#c8c820" stroke-width="2.200"/><path d="M4.500 7 L12 13.500 M12 7 L4.500 13.500" stroke="#606000" stroke-width=".6"/></svg>
<div class="tk" style="left:570.8px;width:53px;padding-left:20px">部…</div>
<svg class="a" style="left:573.8px;top:878px" width="17" height="17" viewBox="0 0 17 17"><path d="M5 1.500 h8 l3 3 v11 h-11 z" fill="#fff" stroke="#6080c0"/><rect x="1" y="3" width="10" height="10" fill="#2850b0"/><text x="1.600" y="11.500" font-family="Liberation Sans,sans-serif" font-weight="bold" font-size="9" fill="#fff">W</text></svg>
<div class="tk" style="left:627.9px;width:53px;padding-left:20px">E:\…</div>
<svg class="a" style="left:630.9px;top:878px" width="17" height="17" viewBox="0 0 17 17"><path d="M5 1.500 h8 l3 3 v11 h-11 z" fill="#fff" stroke="#6080c0"/><rect x="1" y="3" width="10" height="10" fill="#2850b0"/><text x="1.600" y="11.500" font-family="Liberation Sans,sans-serif" font-weight="bold" font-size="9" fill="#fff">W</text></svg>
<div class="tk" style="left:684.9px;width:53px;padding-left:20px">CA…</div>
<svg class="a" style="left:687.9px;top:878px" width="17" height="17" viewBox="0 0 17 17"><path d="M5 1.500 h8 l3 3 v11 h-11 z" fill="#fff" stroke="#60a060"/><rect x="1" y="3" width="10" height="10" fill="#208030"/><text x="2.800" y="11.500" font-family="Liberation Sans,sans-serif" font-weight="bold" font-size="9.500" fill="#fff">X</text></svg>
<div class="tk" style="left:742.0px;width:53px;padding-left:20px">计…</div>
<svg class="a" style="left:745.0px;top:878px" width="17" height="17" viewBox="0 0 17 17"><rect x="1" y="3" width="15" height="11" fill="#2858c8" stroke="#102060"/><rect x="3" y="5" width="11" height="3" fill="#c8e8f8"/><path d="M3 10 h11 M3 12 h11" stroke="#c8e8f8" stroke-dasharray="2 1" stroke-width="1.200"/></svg>
<div class="tk" style="left:799.1px;width:53px;padding-left:20px;border-color:#404040 #fff #fff #404040;background:#eceae4">Gra…</div>
<svg class="a" style="left:802.1px;top:878px" width="17" height="17" viewBox="0 0 17 17"><rect x="1.500" y="2.500" width="14" height="12" fill="#fff" stroke="#000"/><rect x="2" y="3" width="13" height="2.500" fill="#101080"/><path d="M4.500 7 L12 13.500 M12 7 L4.500 13.500" stroke="#c8c820" stroke-width="2.200"/><path d="M4.500 7 L12 13.500 M12 7 L4.500 13.500" stroke="#606000" stroke-width=".6"/></svg>
<div class="tk" style="left:856.1px;width:53px;padding-left:20px">Mic…</div>
<svg class="a" style="left:859.1px;top:878px" width="17" height="17" viewBox="0 0 17 17"><path d="M5 1.500 h8 l3 3 v11 h-11 z" fill="#fff" stroke="#60a060"/><rect x="1" y="3" width="10" height="10" fill="#208030"/><text x="2.800" y="11.500" font-family="Liberation Sans,sans-serif" font-weight="bold" font-size="9.500" fill="#fff">X</text></svg>
<div class="tk" style="left:913.2px;width:53px;padding-left:20px">pcb…</div>
<svg class="a" style="left:916.2px;top:878px" width="17" height="17" viewBox="0 0 17 17"><rect x=".5" y=".5" width="16" height="16" fill="#f0c0c0" stroke="#e04040"/><circle cx="8.500" cy="8.500" r="7" fill="#1030a0"/><path d="M5 5 q3 -2 4 1 q2 3 -1 5 q-3 0 -3 -6" fill="#30a040"/></svg>
<div class="tk" style="left:970.3px;width:53px;padding-left:20px">常…</div>
<svg class="a" style="left:973.3px;top:878px" width="17" height="17" viewBox="0 0 17 17"><path d="M5 1.500 h8 l3 3 v11 h-11 z" fill="#fff" stroke="#60a060"/><rect x="1" y="3" width="10" height="10" fill="#208030"/><text x="2.800" y="11.500" font-family="Liberation Sans,sans-serif" font-weight="bold" font-size="9.500" fill="#fff">X</text></svg>
<div class="tk" style="left:1027.3px;width:53px;padding-left:20px">8v0…</div>
<svg class="a" style="left:1030.3px;top:878px" width="17" height="17" viewBox="0 0 17 17"><rect x="1.500" y="2.500" width="14" height="12" fill="#fff" stroke="#000"/><rect x="2" y="3" width="13" height="2.500" fill="#101080"/><path d="M4.500 7 L12 13.500 M12 7 L4.500 13.500" stroke="#c8c820" stroke-width="2.200"/><path d="M4.500 7 L12 13.500 M12 7 L4.500 13.500" stroke="#606000" stroke-width=".6"/></svg>
<div class="tk" style="left:1084.4px;width:53px;padding-left:20px">8V0…</div>
<svg class="a" style="left:1087.4px;top:878px" width="17" height="17" viewBox="0 0 17 17"><path d="M5 1.500 h8 l3 3 v11 h-11 z" fill="#fff" stroke="#60a060"/><rect x="1" y="3" width="10" height="10" fill="#208030"/><text x="2.800" y="11.500" font-family="Liberation Sans,sans-serif" font-weight="bold" font-size="9.500" fill="#fff">X</text></svg>
<div class="a" style="left:1271px;top:876px;width:165px;height:20px;border:1px solid;border-color:#808080 #fff #fff #808080"></div>
<div class="a" style="left:1394px;top:877px;font:11px 'Liberation Sans', 'Noto Sans CJK SC', sans-serif;line-height:21px">14:33</div>
<svg class="a" style="left:1273px;top:878px" width="116" height="19" viewBox="1273 876 116 19"><path d="M1276 888 l8 -8 5 4 -8 9 z" fill="#e8d060" stroke="#000" stroke-width="1"/><path d="M1279 886 l5 4 M1281 884 l5 4" stroke="#000" stroke-width=".8"/><path d="M1293 881 l11 11 M1304 881 l-11 11" stroke="#6018a0" stroke-width="2.400"/><rect x="1309" y="879" width="13" height="15" fill="#a0a050"/><circle cx="1315.500" cy="886.500" r="4.500" fill="#e8e8d0" stroke="#fff" stroke-width="1.500"/><path d="M1315.500 884 v3 h2" stroke="#404020" fill="none"/><rect x="1326" y="878" width="17" height="16" fill="#101090"/><text x="1327" y="891" font-family="Liberation Sans,sans-serif" font-size="12" fill="#fff" textLength="15" lengthAdjust="spacingAndGlyphs">CH</text><rect x="1346.500" y="883.500" width="15" height="9" fill="#fff" stroke="#000"/><path d="M1348 886 h12 M1348 888 h12 M1349 890 h10" stroke="#000" stroke-width=".8" stroke-dasharray="1 1"/><path d="M1354 883 q0 -3 4 -4" stroke="#000" fill="none"/><path d="M1365 892 l9 -12 l1 12 z" fill="#e02020"/><path d="M1372 886 l7 7 h-6 z" fill="#20b020"/></svg>
</body></html>
